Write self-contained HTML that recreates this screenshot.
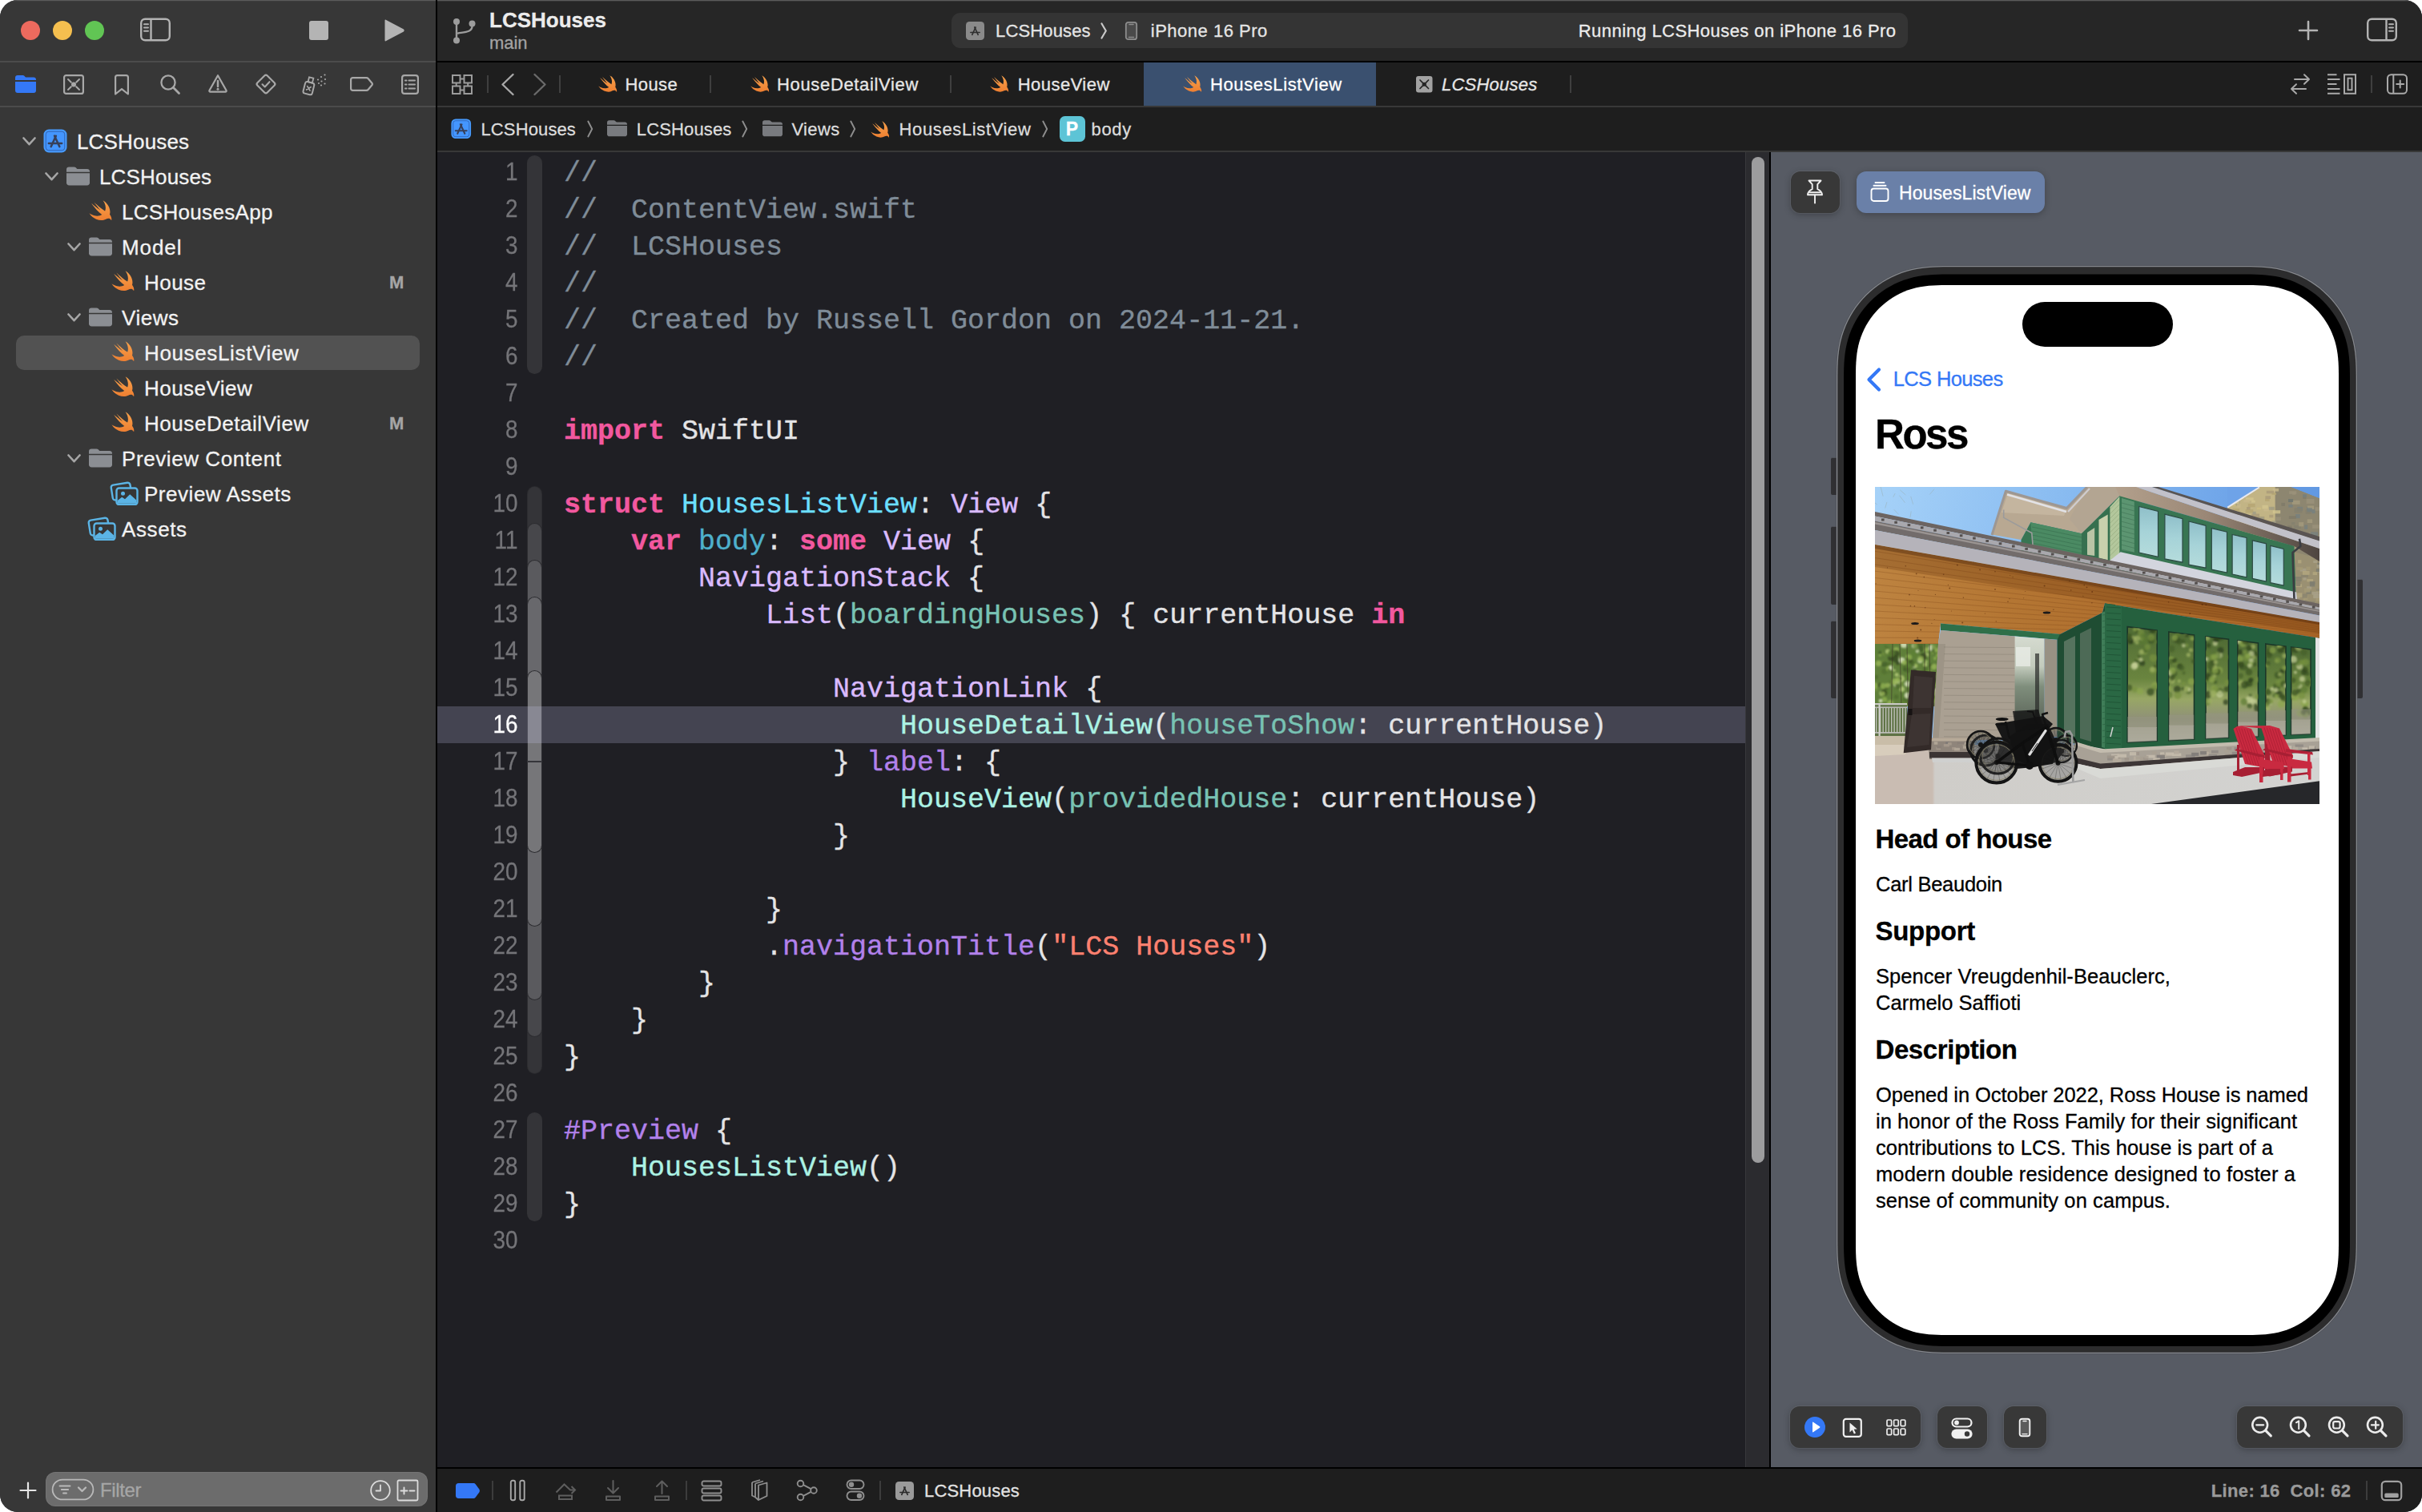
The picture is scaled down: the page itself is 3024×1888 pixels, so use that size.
<!DOCTYPE html><html><head><meta charset="utf-8"><title>LCSHouses</title><style>html,body{margin:0;padding:0;background:#fff}#win{position:absolute;left:0;top:0;width:3024px;height:1888px;overflow:hidden;border-radius:22px;background:#1f1f24}#win div,#win svg{box-sizing:border-box}#win div{-webkit-text-stroke:.3px}</style></head><body><div id="win">
<div style="position:absolute;left:0px;top:134px;width:544px;height:1754px;background:#373737;"></div>
<svg style="position:absolute;left:27.5px;top:171px;" width="17" height="11" viewBox="0 0 17 11"><path d="M1.500 1.500 L8.5 9.2 L15.5 1.500" fill="none" stroke="#a6a6a6" stroke-width="2.6" stroke-linecap="round" stroke-linejoin="round"/></svg>
<svg style="position:absolute;left:54px;top:161px;" width="30" height="30" viewBox="0 0 30 30"><rect x="0.5" y="0.5" width="29" height="29" rx="6.500" fill="#479BFF"/><rect x="3.200" y="3.200" width="23.600" height="23.600" rx="3.600" fill="#4496FF" stroke="#2c5ba8" stroke-width="0.900"/><g fill="none" stroke="#37405a" stroke-width="2.5" stroke-linecap="round"><path d="M9.67 22.11 L15.86 8.69"/><path d="M20.33 22.11 L13.97 8.52"/><path d="M6.83 17.98 L23.17 17.98"/></g></svg>
<div style="position:absolute;left:96.0px;top:159.50px;height:34px;line-height:34px;font-family:'Liberation Sans',sans-serif;font-size:26px;font-weight:400;font-style:normal;color:#f2f2f2;white-space:pre;letter-spacing:0.163px;">LCSHouses</div>
<svg style="position:absolute;left:55.5px;top:215px;" width="17" height="11" viewBox="0 0 17 11"><path d="M1.500 1.500 L8.5 9.2 L15.5 1.500" fill="none" stroke="#a6a6a6" stroke-width="2.6" stroke-linecap="round" stroke-linejoin="round"/></svg>
<svg style="position:absolute;left:83px;top:208px;" width="29" height="24" viewBox="0 0 30 24"><path fill="#8b8e93" d="M3.2 0H10c.9 0 1.5.3 2.1.9l1.2 1.2c.4.4.8.5 1.4.5h12c1.9 0 3.3 1.300 3.300 3.200V6.600H0V3.200C0 1.300 1.300 0 3.200 0Z"/><path fill="#8b8e93" d="M0 8.200H30V20.600c0 2-1.400 3.400-3.400 3.400H3.400C1.400 24 0 22.600 0 20.600Z"/></svg>
<div style="position:absolute;left:124.0px;top:203.50px;height:34px;line-height:34px;font-family:'Liberation Sans',sans-serif;font-size:26px;font-weight:400;font-style:normal;color:#f2f2f2;white-space:pre;letter-spacing:0.163px;">LCSHouses</div>
<svg style="position:absolute;left:111px;top:250px;" width="29" height="26" viewBox="2.3 3.3 18.5 16.9"><defs><linearGradient id="sg111_250" x1="0" y1="0" x2="0" y2="1"><stop offset="0" stop-color="#F9A34C"/><stop offset="1" stop-color="#EE7F31"/></linearGradient></defs><path fill="url(#sg111_250)" d="M13.543 3.41c4.114 2.47 6.545 7.162 5.549 11.131-.024.093-.05.181-.076.272l.002.001c2.062 2.538 1.5 5.258 1.236 4.745-1.072-2.086-3.066-1.568-4.088-1.043a6.803 6.803 0 0 1-.281.158l-.02.012-.002.002c-2.115 1.123-4.957 1.205-7.812-.022a12.568 12.568 0 0 1-5.64-4.838c.649.48 1.35.902 2.097 1.252 3.019 1.414 6.051 1.311 8.197-.002C9.651 12.73 7.101 9.67 5.146 7.191a10.628 10.628 0 0 1-1.005-1.384c2.34 2.142 6.038 4.83 7.365 5.576C8.69 8.408 6.208 4.743 6.324 4.86c4.436 4.47 8.528 6.996 8.528 6.996.154.085.27.154.36.213.085-.215.16-.437.224-.668.708-2.588-.09-5.548-1.893-7.992z"/></svg>
<div style="position:absolute;left:152.0px;top:247.50px;height:34px;line-height:34px;font-family:'Liberation Sans',sans-serif;font-size:26px;font-weight:400;font-style:normal;color:#f2f2f2;white-space:pre;letter-spacing:0.308px;">LCSHousesApp</div>
<svg style="position:absolute;left:83.5px;top:303px;" width="17" height="11" viewBox="0 0 17 11"><path d="M1.500 1.500 L8.5 9.2 L15.5 1.500" fill="none" stroke="#a6a6a6" stroke-width="2.6" stroke-linecap="round" stroke-linejoin="round"/></svg>
<svg style="position:absolute;left:111px;top:296px;" width="29" height="24" viewBox="0 0 30 24"><path fill="#8b8e93" d="M3.2 0H10c.9 0 1.5.3 2.1.9l1.2 1.2c.4.4.8.5 1.4.5h12c1.9 0 3.3 1.300 3.300 3.200V6.600H0V3.200C0 1.300 1.300 0 3.200 0Z"/><path fill="#8b8e93" d="M0 8.200H30V20.600c0 2-1.400 3.400-3.400 3.400H3.400C1.400 24 0 22.600 0 20.600Z"/></svg>
<div style="position:absolute;left:152.0px;top:291.50px;height:34px;line-height:34px;font-family:'Liberation Sans',sans-serif;font-size:26px;font-weight:400;font-style:normal;color:#f2f2f2;white-space:pre;letter-spacing:0.924px;">Model</div>
<svg style="position:absolute;left:139px;top:338px;" width="29" height="26" viewBox="2.3 3.3 18.5 16.9"><defs><linearGradient id="sg139_338" x1="0" y1="0" x2="0" y2="1"><stop offset="0" stop-color="#F9A34C"/><stop offset="1" stop-color="#EE7F31"/></linearGradient></defs><path fill="url(#sg139_338)" d="M13.543 3.41c4.114 2.47 6.545 7.162 5.549 11.131-.024.093-.05.181-.076.272l.002.001c2.062 2.538 1.5 5.258 1.236 4.745-1.072-2.086-3.066-1.568-4.088-1.043a6.803 6.803 0 0 1-.281.158l-.02.012-.002.002c-2.115 1.123-4.957 1.205-7.812-.022a12.568 12.568 0 0 1-5.64-4.838c.649.48 1.35.902 2.097 1.252 3.019 1.414 6.051 1.311 8.197-.002C9.651 12.73 7.101 9.67 5.146 7.191a10.628 10.628 0 0 1-1.005-1.384c2.34 2.142 6.038 4.83 7.365 5.576C8.69 8.408 6.208 4.743 6.324 4.86c4.436 4.47 8.528 6.996 8.528 6.996.154.085.27.154.36.213.085-.215.16-.437.224-.668.708-2.588-.09-5.548-1.893-7.992z"/></svg>
<div style="position:absolute;left:180.0px;top:335.50px;height:34px;line-height:34px;font-family:'Liberation Sans',sans-serif;font-size:26px;font-weight:400;font-style:normal;color:#f2f2f2;white-space:pre;letter-spacing:0.459px;">House</div>
<div style="position:absolute;left:486px;top:338.00px;height:29px;line-height:29px;font-family:'Liberation Sans',sans-serif;font-size:22px;font-weight:700;font-style:normal;color:#a5a5a5;white-space:pre;">M</div>
<svg style="position:absolute;left:83.5px;top:391px;" width="17" height="11" viewBox="0 0 17 11"><path d="M1.500 1.500 L8.5 9.2 L15.5 1.500" fill="none" stroke="#a6a6a6" stroke-width="2.6" stroke-linecap="round" stroke-linejoin="round"/></svg>
<svg style="position:absolute;left:111px;top:384px;" width="29" height="24" viewBox="0 0 30 24"><path fill="#8b8e93" d="M3.2 0H10c.9 0 1.5.3 2.1.9l1.2 1.2c.4.4.8.5 1.4.5h12c1.9 0 3.3 1.300 3.300 3.200V6.600H0V3.200C0 1.300 1.300 0 3.200 0Z"/><path fill="#8b8e93" d="M0 8.200H30V20.600c0 2-1.400 3.400-3.400 3.400H3.400C1.400 24 0 22.600 0 20.600Z"/></svg>
<div style="position:absolute;left:152.0px;top:379.50px;height:34px;line-height:34px;font-family:'Liberation Sans',sans-serif;font-size:26px;font-weight:400;font-style:normal;color:#f2f2f2;white-space:pre;letter-spacing:0.542px;">Views</div>
<div style="position:absolute;left:20px;top:418.5px;width:504px;height:43px;background:#525252;border-radius:10px"></div>
<svg style="position:absolute;left:139px;top:426px;" width="29" height="26" viewBox="2.3 3.3 18.5 16.9"><defs><linearGradient id="sg139_426" x1="0" y1="0" x2="0" y2="1"><stop offset="0" stop-color="#F9A34C"/><stop offset="1" stop-color="#EE7F31"/></linearGradient></defs><path fill="url(#sg139_426)" d="M13.543 3.41c4.114 2.47 6.545 7.162 5.549 11.131-.024.093-.05.181-.076.272l.002.001c2.062 2.538 1.5 5.258 1.236 4.745-1.072-2.086-3.066-1.568-4.088-1.043a6.803 6.803 0 0 1-.281.158l-.02.012-.002.002c-2.115 1.123-4.957 1.205-7.812-.022a12.568 12.568 0 0 1-5.64-4.838c.649.48 1.35.902 2.097 1.252 3.019 1.414 6.051 1.311 8.197-.002C9.651 12.73 7.101 9.67 5.146 7.191a10.628 10.628 0 0 1-1.005-1.384c2.34 2.142 6.038 4.83 7.365 5.576C8.69 8.408 6.208 4.743 6.324 4.86c4.436 4.47 8.528 6.996 8.528 6.996.154.085.27.154.36.213.085-.215.16-.437.224-.668.708-2.588-.09-5.548-1.893-7.992z"/></svg>
<div style="position:absolute;left:180.0px;top:423.50px;height:34px;line-height:34px;font-family:'Liberation Sans',sans-serif;font-size:26px;font-weight:400;font-style:normal;color:#f2f2f2;white-space:pre;letter-spacing:0.642px;">HousesListView</div>
<svg style="position:absolute;left:139px;top:470px;" width="29" height="26" viewBox="2.3 3.3 18.5 16.9"><defs><linearGradient id="sg139_470" x1="0" y1="0" x2="0" y2="1"><stop offset="0" stop-color="#F9A34C"/><stop offset="1" stop-color="#EE7F31"/></linearGradient></defs><path fill="url(#sg139_470)" d="M13.543 3.41c4.114 2.47 6.545 7.162 5.549 11.131-.024.093-.05.181-.076.272l.002.001c2.062 2.538 1.5 5.258 1.236 4.745-1.072-2.086-3.066-1.568-4.088-1.043a6.803 6.803 0 0 1-.281.158l-.02.012-.002.002c-2.115 1.123-4.957 1.205-7.812-.022a12.568 12.568 0 0 1-5.64-4.838c.649.48 1.35.902 2.097 1.252 3.019 1.414 6.051 1.311 8.197-.002C9.651 12.73 7.101 9.67 5.146 7.191a10.628 10.628 0 0 1-1.005-1.384c2.34 2.142 6.038 4.83 7.365 5.576C8.69 8.408 6.208 4.743 6.324 4.86c4.436 4.47 8.528 6.996 8.528 6.996.154.085.27.154.36.213.085-.215.16-.437.224-.668.708-2.588-.09-5.548-1.893-7.992z"/></svg>
<div style="position:absolute;left:180.0px;top:467.50px;height:34px;line-height:34px;font-family:'Liberation Sans',sans-serif;font-size:26px;font-weight:400;font-style:normal;color:#f2f2f2;white-space:pre;letter-spacing:0.461px;">HouseView</div>
<svg style="position:absolute;left:139px;top:514px;" width="29" height="26" viewBox="2.3 3.3 18.5 16.9"><defs><linearGradient id="sg139_514" x1="0" y1="0" x2="0" y2="1"><stop offset="0" stop-color="#F9A34C"/><stop offset="1" stop-color="#EE7F31"/></linearGradient></defs><path fill="url(#sg139_514)" d="M13.543 3.41c4.114 2.47 6.545 7.162 5.549 11.131-.024.093-.05.181-.076.272l.002.001c2.062 2.538 1.5 5.258 1.236 4.745-1.072-2.086-3.066-1.568-4.088-1.043a6.803 6.803 0 0 1-.281.158l-.02.012-.002.002c-2.115 1.123-4.957 1.205-7.812-.022a12.568 12.568 0 0 1-5.64-4.838c.649.48 1.35.902 2.097 1.252 3.019 1.414 6.051 1.311 8.197-.002C9.651 12.73 7.101 9.67 5.146 7.191a10.628 10.628 0 0 1-1.005-1.384c2.34 2.142 6.038 4.83 7.365 5.576C8.69 8.408 6.208 4.743 6.324 4.86c4.436 4.47 8.528 6.996 8.528 6.996.154.085.27.154.36.213.085-.215.16-.437.224-.668.708-2.588-.09-5.548-1.893-7.992z"/></svg>
<div style="position:absolute;left:180.0px;top:511.50px;height:34px;line-height:34px;font-family:'Liberation Sans',sans-serif;font-size:26px;font-weight:400;font-style:normal;color:#f2f2f2;white-space:pre;letter-spacing:0.546px;">HouseDetailView</div>
<div style="position:absolute;left:486px;top:514.00px;height:29px;line-height:29px;font-family:'Liberation Sans',sans-serif;font-size:22px;font-weight:700;font-style:normal;color:#a5a5a5;white-space:pre;">M</div>
<svg style="position:absolute;left:83.5px;top:567px;" width="17" height="11" viewBox="0 0 17 11"><path d="M1.500 1.500 L8.5 9.2 L15.5 1.500" fill="none" stroke="#a6a6a6" stroke-width="2.6" stroke-linecap="round" stroke-linejoin="round"/></svg>
<svg style="position:absolute;left:111px;top:560px;" width="29" height="24" viewBox="0 0 30 24"><path fill="#8b8e93" d="M3.2 0H10c.9 0 1.5.3 2.1.9l1.2 1.2c.4.4.8.5 1.4.5h12c1.9 0 3.3 1.300 3.300 3.200V6.600H0V3.200C0 1.300 1.300 0 3.200 0Z"/><path fill="#8b8e93" d="M0 8.200H30V20.600c0 2-1.400 3.400-3.400 3.400H3.400C1.400 24 0 22.600 0 20.600Z"/></svg>
<div style="position:absolute;left:152.0px;top:555.50px;height:34px;line-height:34px;font-family:'Liberation Sans',sans-serif;font-size:26px;font-weight:400;font-style:normal;color:#f2f2f2;white-space:pre;letter-spacing:0.582px;">Preview Content</div>
<svg style="position:absolute;left:137px;top:601px;" width="36" height="30" viewBox="0 0 36 30"><g transform="rotate(-9 12 12)"><rect x="2.500" y="3.500" width="24" height="19" rx="3" fill="none" stroke="#5BB4E5" stroke-width="2.400"/></g><rect x="8.500" y="8.500" width="26" height="20.500" rx="3.200" fill="#363636" stroke="#5BB4E5" stroke-width="2.400"/><circle cx="16.500" cy="15.200" r="2.500" fill="#5BB4E5"/><path d="M9.700 27.800 V24 l5.500-4.300 3.800 2.600 6.200-6 8.100 7.200 V27.800Z" fill="#5BB4E5"/></svg>
<div style="position:absolute;left:180.0px;top:599.50px;height:34px;line-height:34px;font-family:'Liberation Sans',sans-serif;font-size:26px;font-weight:400;font-style:normal;color:#f2f2f2;white-space:pre;letter-spacing:0.529px;">Preview Assets</div>
<svg style="position:absolute;left:109px;top:645px;" width="36" height="30" viewBox="0 0 36 30"><g transform="rotate(-9 12 12)"><rect x="2.500" y="3.500" width="24" height="19" rx="3" fill="none" stroke="#5BB4E5" stroke-width="2.400"/></g><rect x="8.500" y="8.500" width="26" height="20.500" rx="3.200" fill="#363636" stroke="#5BB4E5" stroke-width="2.400"/><circle cx="16.500" cy="15.200" r="2.500" fill="#5BB4E5"/><path d="M9.700 27.800 V24 l5.500-4.300 3.800 2.600 6.200-6 8.100 7.200 V27.800Z" fill="#5BB4E5"/></svg>
<div style="position:absolute;left:152.0px;top:643.50px;height:34px;line-height:34px;font-family:'Liberation Sans',sans-serif;font-size:26px;font-weight:400;font-style:normal;color:#f2f2f2;white-space:pre;letter-spacing:0.595px;">Assets</div>
<div style="position:absolute;left:0px;top:78px;width:544px;height:54px;background:#373737;"></div>
<div style="position:absolute;left:0px;top:132px;width:544px;height:2px;background:#4b4b4b;"></div>
<svg style="position:absolute;left:19px;top:94px;" width="26" height="22" viewBox="0 0 26 22"><path fill="#3478F6" d="M3 0H9.500c.8 0 1.400.3 1.900.8l1.100 1.100c.4.400.8.500 1.300.500H23c1.800 0 3 1.200 3 3V6H0V3C0 1.200 1.200 0 3 0Z"/><path fill="#3478F6" d="M0 8H26V19c0 1.800-1.200 3-3 3H3C1.200 22 0 20.800 0 19Z"/></svg>
<svg style="position:absolute;left:78px;top:91.5px;" width="28" height="27" viewBox="0 0 28 27"><rect x="2.100" y="2.100" width="23.800" height="22.800" rx="2.500" fill="none" stroke="#a8a8a8" stroke-width="2.200"/><path d="M7 7l3.800 3.800M21 7l-3.800 3.800M7 20l3.800-3.800M21 20l-3.800-3.800" stroke="#a8a8a8" stroke-width="2" stroke-linecap="round"/><circle cx="14" cy="13.500" r="3" fill="#a8a8a8"/></svg>
<svg style="position:absolute;left:142px;top:91.5px;" width="20" height="28" viewBox="0 0 20 28"><path d="M2.100 4.500Q2.100 2.100 4.500 2.100H15.500Q17.900 2.100 17.900 4.500V25.500L10 19.200 2.100 25.500Z" fill="none" stroke="#a8a8a8" stroke-width="2.200" stroke-linejoin="round"/></svg>
<svg style="position:absolute;left:198.5px;top:92px;" width="27" height="27" viewBox="0 0 27 27"><circle cx="11" cy="11" r="8.600" fill="none" stroke="#a8a8a8" stroke-width="2.300"/><path d="M17.300 17.300L24.500 24.500" stroke="#a8a8a8" stroke-width="2.800" stroke-linecap="round"/></svg>
<svg style="position:absolute;left:259px;top:91px;" width="26" height="26" viewBox="0 0 26 26"><path d="M13 3.200 L23.600 22 Q24 23.600 22.400 23.600 H3.600 Q2 23.600 2.400 22Z" fill="none" stroke="#a8a8a8" stroke-width="2.200" stroke-linejoin="round"/><path d="M13 10v7" stroke="#a8a8a8" stroke-width="2.500" stroke-linecap="round"/><circle cx="13" cy="20.300" r="1.500" fill="#a8a8a8"/></svg>
<svg style="position:absolute;left:318px;top:91px;" width="28" height="28" viewBox="0 0 28 28"><rect x="5.300" y="5.300" width="17.400" height="17.400" rx="2.500" transform="rotate(45 14 14)" fill="none" stroke="#a8a8a8" stroke-width="2.200"/><path d="M9.500 14.300l3.200 3.200 5.800-6.300" fill="none" stroke="#a8a8a8" stroke-width="2.100" stroke-linecap="round" stroke-linejoin="round"/></svg>
<svg style="position:absolute;left:377px;top:91px;" width="32" height="29" viewBox="0 0 32 29"><g transform="rotate(14 10 18)"><rect x="3" y="12" width="11.500" height="15" rx="2.500" fill="none" stroke="#a8a8a8" stroke-width="2"/><rect x="6" y="6" width="5.500" height="6" fill="none" stroke="#a8a8a8" stroke-width="1.800"/><path d="M6.500 17.500l4.500 4.500M11 17.500l-4.500 4.500" stroke="#a8a8a8" stroke-width="1.700" stroke-linecap="round"/></g><g fill="#a8a8a8"><circle cx="20" cy="8.500" r="1.100"/><circle cx="24" cy="5" r="1.100"/><circle cx="24.500" cy="10.500" r="1.100"/><circle cx="28.500" cy="2.500" r="1.100"/><circle cx="29" cy="8" r="1.100"/><circle cx="28.500" cy="13.500" r="1.100"/><circle cx="24" cy="15.500" r="1.100"/><circle cx="21" cy="13" r="1"/></g></svg>
<svg style="position:absolute;left:436px;top:95px;" width="31" height="20" viewBox="0 0 31 20"><path d="M4.500 2.100H21.500c1 0 1.700.4 2.300 1.100L28.600 9c.500.600.500 1.400 0 2l-4.800 5.800c-.600.700-1.300 1.100-2.300 1.100H4.500c-1.500 0-2.400-.900-2.400-2.400V4.500c0-1.500.900-2.400 2.400-2.400Z" fill="none" stroke="#a8a8a8" stroke-width="2.200" stroke-linejoin="round"/></svg>
<svg style="position:absolute;left:500px;top:91.5px;" width="24" height="27" viewBox="0 0 24 27"><rect x="2.100" y="2.100" width="19.800" height="22.800" rx="3" fill="none" stroke="#a8a8a8" stroke-width="2.200"/><path d="M10.500 8.500h7.500M10.500 13.500h7.500M10.500 18.500h7.500" stroke="#a8a8a8" stroke-width="2" stroke-linecap="round"/><path d="M6 8.500h1.500M6 13.500h1.500M6 18.500h1.500" stroke="#a8a8a8" stroke-width="2" stroke-linecap="round"/></svg>
<svg style="position:absolute;left:23px;top:1849px;" width="24" height="24" viewBox="0 0 24 24"><path d="M12 2.500V21.500M2.500 12H21.500" stroke="#e6e6e6" stroke-width="2.200" stroke-linecap="round"/></svg>
<div style="position:absolute;left:56.5px;top:1838px;width:477.5px;height:43px;background:#6c6c6c;border-radius:12px;box-shadow:inset 0 0 0 1px rgba(255,255,255,.06)"></div>
<svg style="position:absolute;left:64px;top:1846px;" width="54" height="28" viewBox="0 0 54 28"><rect x="1.600" y="1.600" width="50.800" height="24.800" rx="12.400" fill="none" stroke="#b9b9b9" stroke-width="1.800"/><path d="M10.500 9.500H23.500M12.800 14H21.200M15 18.500H19" stroke="#b9b9b9" stroke-width="1.900" stroke-linecap="round"/><path d="M34 11.500l4.500 4.500 4.500-4.500" fill="none" stroke="#b9b9b9" stroke-width="2.300" stroke-linecap="round" stroke-linejoin="round"/></svg>
<div style="position:absolute;left:125px;top:1844.50px;height:31px;line-height:31px;font-family:'Liberation Sans',sans-serif;font-size:24px;font-weight:400;font-style:normal;color:#a6a6a6;white-space:pre;letter-spacing:-0.391px;">Filter</div>
<svg style="position:absolute;left:461px;top:1847px;" width="28" height="28" viewBox="0 0 28 28"><circle cx="14" cy="14" r="11.800" fill="none" stroke="#dcdcdc" stroke-width="1.800"/><path d="M14 7.500V14.500H8.500" fill="none" stroke="#dcdcdc" stroke-width="1.800" stroke-linecap="round" stroke-linejoin="round"/></svg>
<svg style="position:absolute;left:495px;top:1847px;" width="28" height="28" viewBox="0 0 28 28"><rect x="1.500" y="1.500" width="25" height="25" rx="1.500" fill="none" stroke="#dcdcdc" stroke-width="1.800"/><path d="M5.500 14.500h8M9.500 10.500v8M16.500 14.500h6" stroke="#dcdcdc" stroke-width="1.900" stroke-linecap="round"/></svg>
<div style="position:absolute;left:0px;top:0px;width:544px;height:76px;background:#373737;"></div>
<div style="position:absolute;left:546px;top:0px;width:2478px;height:76px;background:#262626;"></div>
<div style="position:absolute;left:0px;top:0px;width:3024px;height:1px;background:#5c5c5c;"></div>
<div style="position:absolute;left:0px;top:1px;width:3024px;height:1px;background:#444;opacity:.5"></div>
<div style="position:absolute;left:0px;top:76px;width:544px;height:2px;background:#4b4b4b;"></div>
<div style="position:absolute;left:546px;top:76px;width:2478px;height:2px;background:#000;"></div>
<div style="position:absolute;left:26px;top:26px;width:24px;height:24px;background:#ED6A5E;border-radius:50%"></div>
<div style="position:absolute;left:66px;top:26px;width:24px;height:24px;background:#F5BF4F;border-radius:50%"></div>
<div style="position:absolute;left:106px;top:26px;width:24px;height:24px;background:#61C554;border-radius:50%"></div>
<svg style="position:absolute;left:174px;top:21px;" width="40" height="32" viewBox="0 0 40 32"><rect x="2.200" y="2.700" width="35.600" height="26.600" rx="5" fill="none" stroke="#b3b3b3" stroke-width="2.400"/><path d="M14.500 2.700V29.300" stroke="#b3b3b3" stroke-width="2.400"/><path d="M6 9.200h5M6 13.500h5M6 17.800h5" stroke="#b3b3b3" stroke-width="2" stroke-linecap="round"/></svg>
<div style="position:absolute;left:386px;top:26px;width:24px;height:24px;background:#b4b4b4;border-radius:3px"></div>
<svg style="position:absolute;left:478px;top:23px;" width="29" height="30" viewBox="0 0 29 30"><path d="M2.500 2.800 Q2.500 1 4.200 1.900 L26 13.400 Q27.600 15 26 16.600 L4.200 28.100 Q2.500 29 2.500 27.200Z" fill="#b4b4b4"/></svg>
<svg style="position:absolute;left:564px;top:21px;" width="32" height="35" viewBox="0 0 32 35"><g fill="none" stroke="#9d9d9d" stroke-width="2.400" stroke-linecap="round"><path d="M6 9V27"/><path d="M25.500 11.500 C25.500 19 17 19 8 20.500"/></g><circle cx="6" cy="6" r="4" fill="#9d9d9d"/><circle cx="6" cy="29.500" r="4" fill="#9d9d9d"/><circle cx="25.500" cy="8.500" r="4" fill="#9d9d9d"/></svg>
<div style="position:absolute;left:611px;top:7.80px;height:34px;line-height:34px;font-family:'Liberation Sans',sans-serif;font-size:26px;font-weight:700;font-style:normal;color:#ececec;white-space:pre;letter-spacing:0.009px;">LCSHouses</div>
<div style="position:absolute;left:611px;top:39.00px;height:29px;line-height:29px;font-family:'Liberation Sans',sans-serif;font-size:22px;font-weight:400;font-style:normal;color:#a3a3a3;white-space:pre;letter-spacing:-0.047px;">main</div>
<div style="position:absolute;left:1188px;top:16px;width:1194px;height:44px;background:#343434;border-radius:11px"></div>
<svg style="position:absolute;left:1206px;top:27px;" width="23" height="23" viewBox="0 0 24 24"><rect x="0" y="0" width="24" height="24" rx="4.500" fill="#8a8a8a"/><g fill="none" stroke="#2f2f2f" stroke-width="1.7" stroke-linecap="round"><path d="M8.16 17.04 L12.62 7.36"/><path d="M15.84 17.04 L11.26 7.24"/><path d="M6.11 14.059999999999999 L17.89 14.059999999999999"/></g></svg>
<div style="position:absolute;left:1243px;top:23.50px;height:29px;line-height:29px;font-family:'Liberation Sans',sans-serif;font-size:22px;font-weight:400;font-style:normal;color:#e4e4e4;white-space:pre;letter-spacing:0.151px;">LCSHouses</div>
<svg style="position:absolute;left:1374px;top:28px;" width="9" height="21" viewBox="0 0 9 21"><path d="M1.500 1.500 L6.800 10.500 L1.500 19.500" fill="none" stroke="#c9c9c9" stroke-width="2.200" stroke-linecap="round" stroke-linejoin="round"/></svg>
<svg style="position:absolute;left:1404px;top:26px;" width="17" height="25" viewBox="0 0 17 25"><rect x="1.800" y="1.800" width="13.400" height="21.400" rx="3" fill="#4a4a4a" stroke="#8d8d8d" stroke-width="1.800"/><path d="M6 4.600h5M5.500 20.400h6" stroke="#8d8d8d" stroke-width="1.500" stroke-linecap="round"/></svg>
<div style="position:absolute;left:1436.75px;top:23.50px;height:29px;line-height:29px;font-family:'Liberation Sans',sans-serif;font-size:22px;font-weight:400;font-style:normal;color:#e4e4e4;white-space:pre;letter-spacing:0.505px;">iPhone 16 Pro</div>
<div style="position:absolute;left:1970.75px;top:23.50px;height:29px;line-height:29px;font-family:'Liberation Sans',sans-serif;font-size:22px;font-weight:400;font-style:normal;color:#ececec;white-space:pre;letter-spacing:0.446px;">Running LCSHouses on iPhone 16 Pro</div>
<svg style="position:absolute;left:2869px;top:25px;" width="26" height="26" viewBox="0 0 26 26"><path d="M13 2V24M2 13H24" stroke="#b3b3b3" stroke-width="2.600" stroke-linecap="round"/></svg>
<svg style="position:absolute;left:2954px;top:21px;" width="40" height="32" viewBox="0 0 40 32"><rect x="2.200" y="2.700" width="35.600" height="26.600" rx="5" fill="none" stroke="#b3b3b3" stroke-width="2.400"/><path d="M25.500 2.700V29.300" stroke="#b3b3b3" stroke-width="2.400"/><path d="M29 9.200h5M29 13.500h5M29 17.800h5" stroke="#b3b3b3" stroke-width="2" stroke-linecap="round"/></svg>
<div style="position:absolute;left:546px;top:78px;width:2478px;height:54px;background:#1e1e1e;"></div>
<div style="position:absolute;left:546px;top:132px;width:2478px;height:2px;background:#383838;"></div>
<div style="position:absolute;left:546px;top:134px;width:2478px;height:54px;background:#1e1e1e;"></div>
<div style="position:absolute;left:546px;top:188px;width:2478px;height:2px;background:#383838;"></div>
<svg style="position:absolute;left:563px;top:91.5px;" width="28" height="27" viewBox="0 0 28 27"><g fill="none" stroke="#9b9b9b" stroke-width="2"><rect x="2" y="2" width="9.500" height="9.500"/><rect x="16.500" y="2" width="9.500" height="9.500"/><rect x="2" y="15.500" width="9.500" height="9.500"/><rect x="16.500" y="15.500" width="9.500" height="9.500"/><path d="M11.500 6.500H16.500M11.500 20.500H16.500M6.700 11.500V15.500M21.200 11.500V15.500"/></g></svg>
<div style="position:absolute;left:608px;top:94px;width:2px;height:22px;background:#3f3f3f;"></div>
<svg style="position:absolute;left:625px;top:91px;" width="18" height="29" viewBox="0 0 18 29"><path d="M15.500 2 L2.500 14.500 L15.500 27" fill="none" stroke="#a9a9a9" stroke-width="2.400" stroke-linecap="round" stroke-linejoin="round"/></svg>
<svg style="position:absolute;left:665px;top:91px;" width="18" height="29" viewBox="0 0 18 29"><path d="M2.500 2 L15.500 14.500 L2.500 27" fill="none" stroke="#6a6a6a" stroke-width="2.400" stroke-linecap="round" stroke-linejoin="round"/></svg>
<div style="position:absolute;left:698px;top:94px;width:2px;height:22px;background:#3f3f3f;"></div>
<svg style="position:absolute;left:747px;top:94px;" width="23.5" height="21.5" viewBox="2.3 3.3 18.5 16.9"><defs><linearGradient id="sg747_94" x1="0" y1="0" x2="0" y2="1"><stop offset="0" stop-color="#F9A34C"/><stop offset="1" stop-color="#EE7F31"/></linearGradient></defs><path fill="url(#sg747_94)" d="M13.543 3.41c4.114 2.47 6.545 7.162 5.549 11.131-.024.093-.05.181-.076.272l.002.001c2.062 2.538 1.5 5.258 1.236 4.745-1.072-2.086-3.066-1.568-4.088-1.043a6.803 6.803 0 0 1-.281.158l-.02.012-.002.002c-2.115 1.123-4.957 1.205-7.812-.022a12.568 12.568 0 0 1-5.64-4.838c.649.48 1.35.902 2.097 1.252 3.019 1.414 6.051 1.311 8.197-.002C9.651 12.73 7.101 9.67 5.146 7.191a10.628 10.628 0 0 1-1.005-1.384c2.34 2.142 6.038 4.83 7.365 5.576C8.69 8.408 6.208 4.743 6.324 4.86c4.436 4.47 8.528 6.996 8.528 6.996.154.085.27.154.36.213.085-.215.16-.437.224-.668.708-2.588-.09-5.548-1.893-7.992z"/></svg>
<div style="position:absolute;left:780.5px;top:91.00px;height:29px;line-height:29px;font-family:'Liberation Sans',sans-serif;font-size:22px;font-weight:400;font-style:normal;color:#e6e6e6;white-space:pre;letter-spacing:0.381px;">House</div>
<div style="position:absolute;left:886px;top:94px;width:2px;height:22px;background:#3f3f3f;"></div>
<svg style="position:absolute;left:936.5px;top:94px;" width="23.5" height="21.5" viewBox="2.3 3.3 18.5 16.9"><defs><linearGradient id="sg936.5_94" x1="0" y1="0" x2="0" y2="1"><stop offset="0" stop-color="#F9A34C"/><stop offset="1" stop-color="#EE7F31"/></linearGradient></defs><path fill="url(#sg936.5_94)" d="M13.543 3.41c4.114 2.47 6.545 7.162 5.549 11.131-.024.093-.05.181-.076.272l.002.001c2.062 2.538 1.5 5.258 1.236 4.745-1.072-2.086-3.066-1.568-4.088-1.043a6.803 6.803 0 0 1-.281.158l-.02.012-.002.002c-2.115 1.123-4.957 1.205-7.812-.022a12.568 12.568 0 0 1-5.64-4.838c.649.48 1.35.902 2.097 1.252 3.019 1.414 6.051 1.311 8.197-.002C9.651 12.73 7.101 9.67 5.146 7.191a10.628 10.628 0 0 1-1.005-1.384c2.34 2.142 6.038 4.83 7.365 5.576C8.69 8.408 6.208 4.743 6.324 4.86c4.436 4.47 8.528 6.996 8.528 6.996.154.085.27.154.36.213.085-.215.16-.437.224-.668.708-2.588-.09-5.548-1.893-7.992z"/></svg>
<div style="position:absolute;left:970px;top:91.00px;height:29px;line-height:29px;font-family:'Liberation Sans',sans-serif;font-size:22px;font-weight:400;font-style:normal;color:#e6e6e6;white-space:pre;letter-spacing:0.657px;">HouseDetailView</div>
<div style="position:absolute;left:1186px;top:94px;width:2px;height:22px;background:#3f3f3f;"></div>
<svg style="position:absolute;left:1236px;top:94px;" width="23.5" height="21.5" viewBox="2.3 3.3 18.5 16.9"><defs><linearGradient id="sg1236_94" x1="0" y1="0" x2="0" y2="1"><stop offset="0" stop-color="#F9A34C"/><stop offset="1" stop-color="#EE7F31"/></linearGradient></defs><path fill="url(#sg1236_94)" d="M13.543 3.41c4.114 2.47 6.545 7.162 5.549 11.131-.024.093-.05.181-.076.272l.002.001c2.062 2.538 1.5 5.258 1.236 4.745-1.072-2.086-3.066-1.568-4.088-1.043a6.803 6.803 0 0 1-.281.158l-.02.012-.002.002c-2.115 1.123-4.957 1.205-7.812-.022a12.568 12.568 0 0 1-5.64-4.838c.649.48 1.35.902 2.097 1.252 3.019 1.414 6.051 1.311 8.197-.002C9.651 12.73 7.101 9.67 5.146 7.191a10.628 10.628 0 0 1-1.005-1.384c2.34 2.142 6.038 4.83 7.365 5.576C8.69 8.408 6.208 4.743 6.324 4.86c4.436 4.47 8.528 6.996 8.528 6.996.154.085.27.154.36.213.085-.215.16-.437.224-.668.708-2.588-.09-5.548-1.893-7.992z"/></svg>
<div style="position:absolute;left:1270.75px;top:91.00px;height:29px;line-height:29px;font-family:'Liberation Sans',sans-serif;font-size:22px;font-weight:400;font-style:normal;color:#e6e6e6;white-space:pre;letter-spacing:0.457px;">HouseView</div>
<div style="position:absolute;left:1428px;top:78px;width:290px;height:54px;background:#3a506f;"></div>
<svg style="position:absolute;left:1477px;top:94px;" width="23.5" height="21.5" viewBox="2.3 3.3 18.5 16.9"><defs><linearGradient id="sg1477_94" x1="0" y1="0" x2="0" y2="1"><stop offset="0" stop-color="#F9A34C"/><stop offset="1" stop-color="#EE7F31"/></linearGradient></defs><path fill="url(#sg1477_94)" d="M13.543 3.41c4.114 2.47 6.545 7.162 5.549 11.131-.024.093-.05.181-.076.272l.002.001c2.062 2.538 1.5 5.258 1.236 4.745-1.072-2.086-3.066-1.568-4.088-1.043a6.803 6.803 0 0 1-.281.158l-.02.012-.002.002c-2.115 1.123-4.957 1.205-7.812-.022a12.568 12.568 0 0 1-5.64-4.838c.649.48 1.35.902 2.097 1.252 3.019 1.414 6.051 1.311 8.197-.002C9.651 12.73 7.101 9.67 5.146 7.191a10.628 10.628 0 0 1-1.005-1.384c2.34 2.142 6.038 4.83 7.365 5.576C8.69 8.408 6.208 4.743 6.324 4.86c4.436 4.47 8.528 6.996 8.528 6.996.154.085.27.154.36.213.085-.215.16-.437.224-.668.708-2.588-.09-5.548-1.893-7.992z"/></svg>
<div style="position:absolute;left:1511px;top:91.00px;height:29px;line-height:29px;font-family:'Liberation Sans',sans-serif;font-size:22px;font-weight:400;font-style:normal;color:#ffffff;white-space:pre;letter-spacing:0.616px;">HousesListView</div>
<svg style="position:absolute;left:1768px;top:95px;" width="20.5" height="20.5" viewBox="0 0 20.5 20.5"><rect x="0" y="0" width="20.500" height="20.500" rx="3" fill="#a2a2a2"/><path d="M5 5l3.300 3.300M15.500 5l-3.300 3.300M5 15.500l3.300-3.300M15.500 15.500l-3.300-3.300" stroke="#252525" stroke-width="1.700" stroke-linecap="round"/><circle cx="10.250" cy="10.250" r="2.600" fill="#252525"/></svg>
<div style="position:absolute;left:1800px;top:91.00px;height:29px;line-height:29px;font-family:'Liberation Sans',sans-serif;font-size:22px;font-weight:400;font-style:italic;color:#e6e6e6;white-space:pre;letter-spacing:0.234px;">LCSHouses</div>
<div style="position:absolute;left:1960px;top:94px;width:2px;height:22px;background:#3f3f3f;"></div>
<svg style="position:absolute;left:2859px;top:91px;" width="26" height="28" viewBox="0 0 26 28"><g fill="none" stroke="#a9a9a9" stroke-width="2" stroke-linecap="round" stroke-linejoin="round"><path d="M6 8H24M18 2.200L24 8 18 13.800"/><path d="M20 20H2M8 14.200L2 20 8 25.800"/></g></svg>
<svg style="position:absolute;left:2905px;top:91px;" width="38" height="28" viewBox="0 0 38 28"><path d="M1 2.200H12.500M1 8.100H16.500M1 14H12.500M1 19.900H16.500M1 25.800H16.500" stroke="#a9a9a9" stroke-width="2"/><rect x="22" y="2.200" width="14" height="23.600" fill="none" stroke="#a9a9a9" stroke-width="2"/><rect x="26.500" y="6.700" width="5" height="14.600" fill="none" stroke="#a9a9a9" stroke-width="2"/></svg>
<div style="position:absolute;left:2960px;top:94px;width:2px;height:22px;background:#3f3f3f;"></div>
<svg style="position:absolute;left:2979px;top:91px;" width="28" height="28" viewBox="0 0 28 28"><rect x="2" y="2.200" width="24" height="23.600" rx="4.500" fill="none" stroke="#a9a9a9" stroke-width="2"/><path d="M9.300 2.200V25.800" stroke="#a9a9a9" stroke-width="2"/><path d="M17.700 9.500V18.500M13.200 14H22.200" stroke="#a9a9a9" stroke-width="2" stroke-linecap="round"/></svg>
<svg style="position:absolute;left:563px;top:147.5px;" width="25.5" height="25.5" viewBox="0 0 30 30"><rect x="0.5" y="0.5" width="29" height="29" rx="6.500" fill="#479BFF"/><rect x="3.200" y="3.200" width="23.600" height="23.600" rx="3.600" fill="#4496FF" stroke="#2c5ba8" stroke-width="0.900"/><g fill="none" stroke="#37405a" stroke-width="2.5" stroke-linecap="round"><path d="M9.67 22.11 L15.86 8.69"/><path d="M20.33 22.11 L13.97 8.52"/><path d="M6.83 17.98 L23.17 17.98"/></g></svg>
<div style="position:absolute;left:600.5px;top:147.00px;height:29px;line-height:29px;font-family:'Liberation Sans',sans-serif;font-size:22px;font-weight:400;font-style:normal;color:#dcdcdc;white-space:pre;letter-spacing:0.123px;">LCSHouses</div>
<svg style="position:absolute;left:732.5px;top:150px;" width="8" height="22" viewBox="0 0 8 22"><path d="M1.300 1.500 L6.200 11 L1.300 20.500" fill="none" stroke="#8e8e8e" stroke-width="1.900" stroke-linecap="round" stroke-linejoin="round"/></svg>
<svg style="position:absolute;left:757.75px;top:150px;" width="25" height="20.5" viewBox="0 0 30 24"><path fill="#797b7f" d="M3.2 0H10c.9 0 1.5.3 2.1.9l1.2 1.2c.4.4.8.5 1.4.5h12c1.9 0 3.3 1.300 3.300 3.200V6.600H0V3.200C0 1.300 1.300 0 3.200 0Z"/><path fill="#797b7f" d="M0 8.200H30V20.600c0 2-1.400 3.400-3.400 3.400H3.400C1.400 24 0 22.600 0 20.600Z"/></svg>
<div style="position:absolute;left:794.75px;top:147.00px;height:29px;line-height:29px;font-family:'Liberation Sans',sans-serif;font-size:22px;font-weight:400;font-style:normal;color:#dcdcdc;white-space:pre;letter-spacing:0.151px;">LCSHouses</div>
<svg style="position:absolute;left:926px;top:150px;" width="8" height="22" viewBox="0 0 8 22"><path d="M1.300 1.500 L6.200 11 L1.300 20.500" fill="none" stroke="#8e8e8e" stroke-width="1.900" stroke-linecap="round" stroke-linejoin="round"/></svg>
<svg style="position:absolute;left:951.5px;top:150px;" width="25" height="20.5" viewBox="0 0 30 24"><path fill="#797b7f" d="M3.2 0H10c.9 0 1.5.3 2.1.9l1.2 1.2c.4.4.8.5 1.4.5h12c1.9 0 3.3 1.300 3.300 3.200V6.600H0V3.200C0 1.300 1.300 0 3.200 0Z"/><path fill="#797b7f" d="M0 8.200H30V20.600c0 2-1.400 3.400-3.400 3.400H3.400C1.400 24 0 22.600 0 20.600Z"/></svg>
<div style="position:absolute;left:988.5px;top:147.00px;height:29px;line-height:29px;font-family:'Liberation Sans',sans-serif;font-size:22px;font-weight:400;font-style:normal;color:#dcdcdc;white-space:pre;letter-spacing:0.341px;">Views</div>
<svg style="position:absolute;left:1060.5px;top:150px;" width="8" height="22" viewBox="0 0 8 22"><path d="M1.300 1.500 L6.200 11 L1.300 20.500" fill="none" stroke="#8e8e8e" stroke-width="1.900" stroke-linecap="round" stroke-linejoin="round"/></svg>
<svg style="position:absolute;left:1086.5px;top:150.5px;" width="23.5" height="21.5" viewBox="2.3 3.3 18.5 16.9"><defs><linearGradient id="sg1086.5_150.5" x1="0" y1="0" x2="0" y2="1"><stop offset="0" stop-color="#F9A34C"/><stop offset="1" stop-color="#EE7F31"/></linearGradient></defs><path fill="url(#sg1086.5_150.5)" d="M13.543 3.41c4.114 2.47 6.545 7.162 5.549 11.131-.024.093-.05.181-.076.272l.002.001c2.062 2.538 1.5 5.258 1.236 4.745-1.072-2.086-3.066-1.568-4.088-1.043a6.803 6.803 0 0 1-.281.158l-.02.012-.002.002c-2.115 1.123-4.957 1.205-7.812-.022a12.568 12.568 0 0 1-5.64-4.838c.649.48 1.35.902 2.097 1.252 3.019 1.414 6.051 1.311 8.197-.002C9.651 12.73 7.101 9.67 5.146 7.191a10.628 10.628 0 0 1-1.005-1.384c2.34 2.142 6.038 4.83 7.365 5.576C8.69 8.408 6.208 4.743 6.324 4.86c4.436 4.47 8.528 6.996 8.528 6.996.154.085.27.154.36.213.085-.215.16-.437.224-.668.708-2.588-.09-5.548-1.893-7.992z"/></svg>
<div style="position:absolute;left:1122.5px;top:147.00px;height:29px;line-height:29px;font-family:'Liberation Sans',sans-serif;font-size:22px;font-weight:400;font-style:normal;color:#dcdcdc;white-space:pre;letter-spacing:0.634px;">HousesListView</div>
<svg style="position:absolute;left:1300.5px;top:150px;" width="8" height="22" viewBox="0 0 8 22"><path d="M1.300 1.500 L6.200 11 L1.300 20.500" fill="none" stroke="#8e8e8e" stroke-width="1.900" stroke-linecap="round" stroke-linejoin="round"/></svg>
<div style="position:absolute;left:1322.5px;top:144.5px;width:32px;height:32px;background:#5dc4d6;border-radius:6.500px"></div>
<div style="position:absolute;left:1330.7px;top:146.00px;height:30px;line-height:30px;font-family:'Liberation Sans',sans-serif;font-size:23px;font-weight:700;font-style:normal;color:#fff;white-space:pre;">P</div>
<div style="position:absolute;left:1362.5px;top:147.00px;height:29px;line-height:29px;font-family:'Liberation Sans',sans-serif;font-size:22px;font-weight:400;font-style:normal;color:#dcdcdc;white-space:pre;letter-spacing:0.695px;">body</div>
<div style="position:absolute;left:546px;top:190px;width:1633px;height:1642px;background:#1f1f24;"></div>
<div style="position:absolute;left:659px;top:194.5px;width:17px;height:271.0px;background:#343438;border-radius:9px;box-shadow:0 0 0 1px #343438"></div>
<div style="position:absolute;left:659px;top:607.5px;width:17px;height:732.0px;background:#343438;border-radius:9px;box-shadow:0 0 0 1px #2c2c30"></div>
<div style="position:absolute;left:659px;top:653.5px;width:17px;height:640.0px;background:#47474b;border-radius:9px;box-shadow:0 0 0 1px #2c2c30"></div>
<div style="position:absolute;left:659px;top:699.5px;width:17px;height:548.0px;background:#5a5a5e;border-radius:9px;box-shadow:0 0 0 1px #2c2c30"></div>
<div style="position:absolute;left:659px;top:745.5px;width:17px;height:410.0px;background:#68686c;border-radius:9px;box-shadow:0 0 0 1px #2c2c30"></div>
<div style="position:absolute;left:659px;top:837.5px;width:17px;height:226.0px;background:#767679;border-radius:9px;box-shadow:0 0 0 1px #2c2c30"></div>
<div style="position:absolute;left:658px;top:950px;width:19px;height:2px;background:#35353a;"></div>
<div style="position:absolute;left:659px;top:1389.5px;width:17px;height:134.0px;background:#343438;border-radius:9px;box-shadow:0 0 0 1px #343438"></div>
<div style="position:absolute;left:546px;top:882px;width:1633px;height:46px;background:rgba(199,199,240,.22);"></div>
<div style="position:absolute;left:546px;width:100.5px;top:194.2px;height:40px;line-height:40px;text-align:right;font-family:'Liberation Sans',sans-serif;font-size:32px;color:#747478;transform:scaleX(.87);transform-origin:100% 50%;white-space:pre">1</div>
<div style="position:absolute;left:704px;top:194.1px;height:46px;line-height:46px;font-family:'Liberation Mono',monospace;font-size:35px;white-space:pre;-webkit-text-stroke:.35px"><span style="color:#7F8C98">//</span></div>
<div style="position:absolute;left:546px;width:100.5px;top:240.2px;height:40px;line-height:40px;text-align:right;font-family:'Liberation Sans',sans-serif;font-size:32px;color:#747478;transform:scaleX(.87);transform-origin:100% 50%;white-space:pre">2</div>
<div style="position:absolute;left:704px;top:240.1px;height:46px;line-height:46px;font-family:'Liberation Mono',monospace;font-size:35px;white-space:pre;-webkit-text-stroke:.35px"><span style="color:#7F8C98">//  ContentView.swift</span></div>
<div style="position:absolute;left:546px;width:100.5px;top:286.2px;height:40px;line-height:40px;text-align:right;font-family:'Liberation Sans',sans-serif;font-size:32px;color:#747478;transform:scaleX(.87);transform-origin:100% 50%;white-space:pre">3</div>
<div style="position:absolute;left:704px;top:286.1px;height:46px;line-height:46px;font-family:'Liberation Mono',monospace;font-size:35px;white-space:pre;-webkit-text-stroke:.35px"><span style="color:#7F8C98">//  LCSHouses</span></div>
<div style="position:absolute;left:546px;width:100.5px;top:332.2px;height:40px;line-height:40px;text-align:right;font-family:'Liberation Sans',sans-serif;font-size:32px;color:#747478;transform:scaleX(.87);transform-origin:100% 50%;white-space:pre">4</div>
<div style="position:absolute;left:704px;top:332.1px;height:46px;line-height:46px;font-family:'Liberation Mono',monospace;font-size:35px;white-space:pre;-webkit-text-stroke:.35px"><span style="color:#7F8C98">//</span></div>
<div style="position:absolute;left:546px;width:100.5px;top:378.2px;height:40px;line-height:40px;text-align:right;font-family:'Liberation Sans',sans-serif;font-size:32px;color:#747478;transform:scaleX(.87);transform-origin:100% 50%;white-space:pre">5</div>
<div style="position:absolute;left:704px;top:378.1px;height:46px;line-height:46px;font-family:'Liberation Mono',monospace;font-size:35px;white-space:pre;-webkit-text-stroke:.35px"><span style="color:#7F8C98">//  Created by Russell Gordon on 2024-11-21.</span></div>
<div style="position:absolute;left:546px;width:100.5px;top:424.2px;height:40px;line-height:40px;text-align:right;font-family:'Liberation Sans',sans-serif;font-size:32px;color:#747478;transform:scaleX(.87);transform-origin:100% 50%;white-space:pre">6</div>
<div style="position:absolute;left:704px;top:424.1px;height:46px;line-height:46px;font-family:'Liberation Mono',monospace;font-size:35px;white-space:pre;-webkit-text-stroke:.35px"><span style="color:#7F8C98">//</span></div>
<div style="position:absolute;left:546px;width:100.5px;top:470.2px;height:40px;line-height:40px;text-align:right;font-family:'Liberation Sans',sans-serif;font-size:32px;color:#747478;transform:scaleX(.87);transform-origin:100% 50%;white-space:pre">7</div>
<div style="position:absolute;left:546px;width:100.5px;top:516.2px;height:40px;line-height:40px;text-align:right;font-family:'Liberation Sans',sans-serif;font-size:32px;color:#747478;transform:scaleX(.87);transform-origin:100% 50%;white-space:pre">8</div>
<div style="position:absolute;left:704px;top:516.1px;height:46px;line-height:46px;font-family:'Liberation Mono',monospace;font-size:35px;white-space:pre;-webkit-text-stroke:.35px"><span style="color:#F2589F;font-weight:700">import</span><span style="color:#e4e4e6"> SwiftUI</span></div>
<div style="position:absolute;left:546px;width:100.5px;top:562.2px;height:40px;line-height:40px;text-align:right;font-family:'Liberation Sans',sans-serif;font-size:32px;color:#747478;transform:scaleX(.87);transform-origin:100% 50%;white-space:pre">9</div>
<div style="position:absolute;left:546px;width:100.5px;top:608.2px;height:40px;line-height:40px;text-align:right;font-family:'Liberation Sans',sans-serif;font-size:32px;color:#747478;transform:scaleX(.87);transform-origin:100% 50%;white-space:pre">10</div>
<div style="position:absolute;left:704px;top:608.1px;height:46px;line-height:46px;font-family:'Liberation Mono',monospace;font-size:35px;white-space:pre;-webkit-text-stroke:.35px"><span style="color:#F2589F;font-weight:700">struct</span><span style="color:#e4e4e6"> </span><span style="color:#6BDFFF">HousesListView</span><span style="color:#e4e4e6">: </span><span style="color:#DABAFF">View</span><span style="color:#e4e4e6"> {</span></div>
<div style="position:absolute;left:546px;width:100.5px;top:654.2px;height:40px;line-height:40px;text-align:right;font-family:'Liberation Sans',sans-serif;font-size:32px;color:#747478;transform:scaleX(.87);transform-origin:100% 50%;white-space:pre">11</div>
<div style="position:absolute;left:704px;top:654.1px;height:46px;line-height:46px;font-family:'Liberation Mono',monospace;font-size:35px;white-space:pre;-webkit-text-stroke:.35px"><span style="color:#e4e4e6">    </span><span style="color:#F2589F;font-weight:700">var</span><span style="color:#e4e4e6"> </span><span style="color:#4EB0CC">body</span><span style="color:#e4e4e6">: </span><span style="color:#F2589F;font-weight:700">some</span><span style="color:#e4e4e6"> </span><span style="color:#DABAFF">View</span><span style="color:#e4e4e6"> {</span></div>
<div style="position:absolute;left:546px;width:100.5px;top:700.2px;height:40px;line-height:40px;text-align:right;font-family:'Liberation Sans',sans-serif;font-size:32px;color:#747478;transform:scaleX(.87);transform-origin:100% 50%;white-space:pre">12</div>
<div style="position:absolute;left:704px;top:700.1px;height:46px;line-height:46px;font-family:'Liberation Mono',monospace;font-size:35px;white-space:pre;-webkit-text-stroke:.35px"><span style="color:#e4e4e6">        </span><span style="color:#DABAFF">NavigationStack</span><span style="color:#e4e4e6"> {</span></div>
<div style="position:absolute;left:546px;width:100.5px;top:746.2px;height:40px;line-height:40px;text-align:right;font-family:'Liberation Sans',sans-serif;font-size:32px;color:#747478;transform:scaleX(.87);transform-origin:100% 50%;white-space:pre">13</div>
<div style="position:absolute;left:704px;top:746.1px;height:46px;line-height:46px;font-family:'Liberation Mono',monospace;font-size:35px;white-space:pre;-webkit-text-stroke:.35px"><span style="color:#e4e4e6">            </span><span style="color:#DABAFF">List</span><span style="color:#e4e4e6">(</span><span style="color:#78C2B3">boardingHouses</span><span style="color:#e4e4e6">) { currentHouse </span><span style="color:#F2589F;font-weight:700">in</span></div>
<div style="position:absolute;left:546px;width:100.5px;top:792.2px;height:40px;line-height:40px;text-align:right;font-family:'Liberation Sans',sans-serif;font-size:32px;color:#747478;transform:scaleX(.87);transform-origin:100% 50%;white-space:pre">14</div>
<div style="position:absolute;left:546px;width:100.5px;top:838.2px;height:40px;line-height:40px;text-align:right;font-family:'Liberation Sans',sans-serif;font-size:32px;color:#747478;transform:scaleX(.87);transform-origin:100% 50%;white-space:pre">15</div>
<div style="position:absolute;left:704px;top:838.1px;height:46px;line-height:46px;font-family:'Liberation Mono',monospace;font-size:35px;white-space:pre;-webkit-text-stroke:.35px"><span style="color:#e4e4e6">                </span><span style="color:#DABAFF">NavigationLink</span><span style="color:#e4e4e6"> {</span></div>
<div style="position:absolute;left:546px;width:100.5px;top:884.2px;height:40px;line-height:40px;text-align:right;font-family:'Liberation Sans',sans-serif;font-size:32px;color:#ffffff;transform:scaleX(.87);transform-origin:100% 50%;white-space:pre">16</div>
<div style="position:absolute;left:704px;top:884.1px;height:46px;line-height:46px;font-family:'Liberation Mono',monospace;font-size:35px;white-space:pre;-webkit-text-stroke:.35px"><span style="color:#e4e4e6">                    </span><span style="color:#ACF2E4">HouseDetailView</span><span style="color:#e4e4e6">(</span><span style="color:#78C2B3">houseToShow</span><span style="color:#e4e4e6">: currentHouse)</span></div>
<div style="position:absolute;left:546px;width:100.5px;top:930.2px;height:40px;line-height:40px;text-align:right;font-family:'Liberation Sans',sans-serif;font-size:32px;color:#747478;transform:scaleX(.87);transform-origin:100% 50%;white-space:pre">17</div>
<div style="position:absolute;left:704px;top:930.1px;height:46px;line-height:46px;font-family:'Liberation Mono',monospace;font-size:35px;white-space:pre;-webkit-text-stroke:.35px"><span style="color:#e4e4e6">                } </span><span style="color:#B281EB">label</span><span style="color:#e4e4e6">: {</span></div>
<div style="position:absolute;left:546px;width:100.5px;top:976.2px;height:40px;line-height:40px;text-align:right;font-family:'Liberation Sans',sans-serif;font-size:32px;color:#747478;transform:scaleX(.87);transform-origin:100% 50%;white-space:pre">18</div>
<div style="position:absolute;left:704px;top:976.1px;height:46px;line-height:46px;font-family:'Liberation Mono',monospace;font-size:35px;white-space:pre;-webkit-text-stroke:.35px"><span style="color:#e4e4e6">                    </span><span style="color:#ACF2E4">HouseView</span><span style="color:#e4e4e6">(</span><span style="color:#78C2B3">providedHouse</span><span style="color:#e4e4e6">: currentHouse)</span></div>
<div style="position:absolute;left:546px;width:100.5px;top:1022.2px;height:40px;line-height:40px;text-align:right;font-family:'Liberation Sans',sans-serif;font-size:32px;color:#747478;transform:scaleX(.87);transform-origin:100% 50%;white-space:pre">19</div>
<div style="position:absolute;left:704px;top:1022.1px;height:46px;line-height:46px;font-family:'Liberation Mono',monospace;font-size:35px;white-space:pre;-webkit-text-stroke:.35px"><span style="color:#e4e4e6">                }</span></div>
<div style="position:absolute;left:546px;width:100.5px;top:1068.2px;height:40px;line-height:40px;text-align:right;font-family:'Liberation Sans',sans-serif;font-size:32px;color:#747478;transform:scaleX(.87);transform-origin:100% 50%;white-space:pre">20</div>
<div style="position:absolute;left:546px;width:100.5px;top:1114.2px;height:40px;line-height:40px;text-align:right;font-family:'Liberation Sans',sans-serif;font-size:32px;color:#747478;transform:scaleX(.87);transform-origin:100% 50%;white-space:pre">21</div>
<div style="position:absolute;left:704px;top:1114.1px;height:46px;line-height:46px;font-family:'Liberation Mono',monospace;font-size:35px;white-space:pre;-webkit-text-stroke:.35px"><span style="color:#e4e4e6">            }</span></div>
<div style="position:absolute;left:546px;width:100.5px;top:1160.2px;height:40px;line-height:40px;text-align:right;font-family:'Liberation Sans',sans-serif;font-size:32px;color:#747478;transform:scaleX(.87);transform-origin:100% 50%;white-space:pre">22</div>
<div style="position:absolute;left:704px;top:1160.1px;height:46px;line-height:46px;font-family:'Liberation Mono',monospace;font-size:35px;white-space:pre;-webkit-text-stroke:.35px"><span style="color:#e4e4e6">            .</span><span style="color:#B281EB">navigationTitle</span><span style="color:#e4e4e6">(</span><span style="color:#FF8170">"LCS Houses"</span><span style="color:#e4e4e6">)</span></div>
<div style="position:absolute;left:546px;width:100.5px;top:1206.2px;height:40px;line-height:40px;text-align:right;font-family:'Liberation Sans',sans-serif;font-size:32px;color:#747478;transform:scaleX(.87);transform-origin:100% 50%;white-space:pre">23</div>
<div style="position:absolute;left:704px;top:1206.1px;height:46px;line-height:46px;font-family:'Liberation Mono',monospace;font-size:35px;white-space:pre;-webkit-text-stroke:.35px"><span style="color:#e4e4e6">        }</span></div>
<div style="position:absolute;left:546px;width:100.5px;top:1252.2px;height:40px;line-height:40px;text-align:right;font-family:'Liberation Sans',sans-serif;font-size:32px;color:#747478;transform:scaleX(.87);transform-origin:100% 50%;white-space:pre">24</div>
<div style="position:absolute;left:704px;top:1252.1px;height:46px;line-height:46px;font-family:'Liberation Mono',monospace;font-size:35px;white-space:pre;-webkit-text-stroke:.35px"><span style="color:#e4e4e6">    }</span></div>
<div style="position:absolute;left:546px;width:100.5px;top:1298.2px;height:40px;line-height:40px;text-align:right;font-family:'Liberation Sans',sans-serif;font-size:32px;color:#747478;transform:scaleX(.87);transform-origin:100% 50%;white-space:pre">25</div>
<div style="position:absolute;left:704px;top:1298.1px;height:46px;line-height:46px;font-family:'Liberation Mono',monospace;font-size:35px;white-space:pre;-webkit-text-stroke:.35px"><span style="color:#e4e4e6">}</span></div>
<div style="position:absolute;left:546px;width:100.5px;top:1344.2px;height:40px;line-height:40px;text-align:right;font-family:'Liberation Sans',sans-serif;font-size:32px;color:#747478;transform:scaleX(.87);transform-origin:100% 50%;white-space:pre">26</div>
<div style="position:absolute;left:546px;width:100.5px;top:1390.2px;height:40px;line-height:40px;text-align:right;font-family:'Liberation Sans',sans-serif;font-size:32px;color:#747478;transform:scaleX(.87);transform-origin:100% 50%;white-space:pre">27</div>
<div style="position:absolute;left:704px;top:1390.1px;height:46px;line-height:46px;font-family:'Liberation Mono',monospace;font-size:35px;white-space:pre;-webkit-text-stroke:.35px"><span style="color:#B281EB">#Preview</span><span style="color:#e4e4e6"> {</span></div>
<div style="position:absolute;left:546px;width:100.5px;top:1436.2px;height:40px;line-height:40px;text-align:right;font-family:'Liberation Sans',sans-serif;font-size:32px;color:#747478;transform:scaleX(.87);transform-origin:100% 50%;white-space:pre">28</div>
<div style="position:absolute;left:704px;top:1436.1px;height:46px;line-height:46px;font-family:'Liberation Mono',monospace;font-size:35px;white-space:pre;-webkit-text-stroke:.35px"><span style="color:#e4e4e6">    </span><span style="color:#ACF2E4">HousesListView</span><span style="color:#e4e4e6">()</span></div>
<div style="position:absolute;left:546px;width:100.5px;top:1482.2px;height:40px;line-height:40px;text-align:right;font-family:'Liberation Sans',sans-serif;font-size:32px;color:#747478;transform:scaleX(.87);transform-origin:100% 50%;white-space:pre">29</div>
<div style="position:absolute;left:704px;top:1482.1px;height:46px;line-height:46px;font-family:'Liberation Mono',monospace;font-size:35px;white-space:pre;-webkit-text-stroke:.35px"><span style="color:#e4e4e6">}</span></div>
<div style="position:absolute;left:546px;width:100.5px;top:1528.2px;height:40px;line-height:40px;text-align:right;font-family:'Liberation Sans',sans-serif;font-size:32px;color:#747478;transform:scaleX(.87);transform-origin:100% 50%;white-space:pre">30</div>
<div style="position:absolute;left:2179px;top:190px;width:30px;height:1642px;background:#2b2b2f;border-left:1px solid #38383c"></div>
<div style="position:absolute;left:2187px;top:196px;width:16px;height:1256px;background:#9c9c9e;border-radius:8px"></div>
<div style="position:absolute;left:2209px;top:190px;width:2px;height:1642px;background:#000;"></div>
<div style="position:absolute;left:2211px;top:190px;width:813px;height:1642px;background:#575b64;"></div>
<div style="position:absolute;left:2236px;top:214px;width:61px;height:52px;background:#383838;border-radius:12px;box-shadow:0 0 0 1px rgba(255,255,255,.07),0 2px 8px rgba(0,0,0,.28)"></div>
<svg style="position:absolute;left:2254px;top:223px;" width="24" height="34" viewBox="0 0 24 34"><g fill="none" stroke="#f0f0f0" stroke-width="1.900" stroke-linejoin="round" stroke-linecap="round"><path d="M4.500 2.500H19.500L15.300 7.200V13.200C18.600 14.600 20.600 16.800 21 20.300H3C3.400 16.800 5.400 14.600 8.700 13.200V7.200Z"/><path d="M5.500 17.200H18.500"/><path d="M12 20.500V30.500"/></g></svg>
<div style="position:absolute;left:2318px;top:214px;width:235px;height:52px;background:#6a80a8;border-radius:12px;box-shadow:0 2px 8px rgba(0,0,0,.25)"></div>
<svg style="position:absolute;left:2334px;top:226px;" width="26" height="28" viewBox="0 0 26 28"><g fill="none" stroke="#fff" stroke-width="1.900" stroke-linecap="round"><path d="M7.500 2H18.500M5.500 5.800H20.500"/><rect x="2.500" y="9.500" width="21" height="15.500" rx="3"/></g></svg>
<div style="position:absolute;left:2371px;top:225.50px;height:30px;line-height:30px;font-family:'Liberation Sans',sans-serif;font-size:23px;font-weight:400;font-style:normal;color:#ffffff;white-space:pre;letter-spacing:0.092px;">HousesListView</div>
<div style="position:absolute;left:2286px;top:570.5px;width:9px;height:47.0px;background:#303033;border-radius:2px 0 0 2px;border-top:1px solid #505258"></div>
<div style="position:absolute;left:2286px;top:656.5px;width:9px;height:98.0px;background:#303033;border-radius:2px 0 0 2px;border-top:1px solid #505258"></div>
<div style="position:absolute;left:2286px;top:774.5px;width:9px;height:97.5px;background:#303033;border-radius:2px 0 0 2px;border-top:1px solid #505258"></div>
<div style="position:absolute;left:2941px;top:723px;width:9px;height:149px;background:#303033;border-radius:0 2px 2px 0;border-top:1px solid #505258"></div>
<svg style="position:absolute;left:0;top:0" width="3024" height="1888" viewBox="0 0 3024 1888"><path d="M2796.42 331.50 L2803.10 331.51 L2809.79 331.57 L2816.47 331.73 L2823.15 332.04 L2829.82 332.54 L2836.47 333.28 L2843.07 334.31 L2849.62 335.68 L2856.08 337.40 L2862.43 339.48 L2868.66 341.91 L2874.75 344.68 L2880.67 347.78 L2886.42 351.20 L2891.97 354.93 L2897.30 358.97 L2902.40 363.29 L2907.25 367.89 L2911.84 372.75 L2916.16 377.86 L2920.19 383.19 L2923.92 388.75 L2927.33 394.49 L2930.42 400.42 L2933.18 406.51 L2935.60 412.75 L2937.67 419.10 L2939.39 425.57 L2940.75 432.11 L2941.77 438.72 L2942.51 445.37 L2943.00 452.04 L2943.29 458.72 L2943.44 465.40 L2943.50 472.09 L2943.50 478.77 L2943.50 1543.42 L2943.49 1550.10 L2943.43 1556.79 L2943.27 1563.47 L2942.96 1570.15 L2942.46 1576.82 L2941.72 1583.47 L2940.69 1590.07 L2939.32 1596.62 L2937.60 1603.08 L2935.52 1609.43 L2933.09 1615.66 L2930.32 1621.75 L2927.22 1627.67 L2923.80 1633.42 L2920.07 1638.97 L2916.03 1644.30 L2911.71 1649.40 L2907.11 1654.25 L2902.25 1658.84 L2897.14 1663.16 L2891.81 1667.19 L2886.25 1670.92 L2880.51 1674.33 L2874.58 1677.42 L2868.49 1680.18 L2862.25 1682.60 L2855.90 1684.67 L2849.43 1686.39 L2842.89 1687.75 L2836.28 1688.77 L2829.63 1689.51 L2822.96 1690.00 L2816.28 1690.29 L2809.60 1690.44 L2802.91 1690.50 L2796.23 1690.50 L2439.58 1690.50 L2432.90 1690.49 L2426.21 1690.43 L2419.53 1690.27 L2412.85 1689.96 L2406.18 1689.46 L2399.53 1688.72 L2392.93 1687.69 L2386.38 1686.32 L2379.92 1684.60 L2373.57 1682.52 L2367.34 1680.09 L2361.25 1677.32 L2355.33 1674.22 L2349.58 1670.80 L2344.03 1667.07 L2338.70 1663.03 L2333.60 1658.71 L2328.75 1654.11 L2324.16 1649.25 L2319.84 1644.14 L2315.81 1638.81 L2312.08 1633.25 L2308.67 1627.51 L2305.58 1621.58 L2302.82 1615.49 L2300.40 1609.25 L2298.33 1602.90 L2296.61 1596.43 L2295.25 1589.89 L2294.23 1583.28 L2293.49 1576.63 L2293.00 1569.96 L2292.71 1563.28 L2292.56 1556.60 L2292.50 1549.91 L2292.50 1543.23 L2292.50 478.58 L2292.51 471.90 L2292.57 465.21 L2292.73 458.53 L2293.04 451.85 L2293.54 445.18 L2294.28 438.53 L2295.31 431.93 L2296.68 425.38 L2298.40 418.92 L2300.48 412.57 L2302.91 406.34 L2305.68 400.25 L2308.78 394.33 L2312.20 388.58 L2315.93 383.03 L2319.97 377.70 L2324.29 372.60 L2328.89 367.75 L2333.75 363.16 L2338.86 358.84 L2344.19 354.81 L2349.75 351.08 L2355.49 347.67 L2361.42 344.58 L2367.51 341.82 L2373.75 339.40 L2380.10 337.33 L2386.57 335.61 L2393.11 334.25 L2399.72 333.23 L2406.37 332.49 L2413.04 332.00 L2419.72 331.71 L2426.40 331.56 L2433.09 331.50 L2439.77 331.50Z" fill="#4a4c52"/><path d="M2796.51 332.00 L2803.17 332.01 L2809.83 332.07 L2816.49 332.23 L2823.14 332.53 L2829.78 333.03 L2836.40 333.77 L2842.98 334.80 L2849.50 336.16 L2855.93 337.88 L2862.26 339.95 L2868.47 342.37 L2874.53 345.12 L2880.43 348.21 L2886.15 351.62 L2891.67 355.34 L2896.98 359.36 L2902.06 363.66 L2906.90 368.24 L2911.47 373.08 L2915.77 378.17 L2919.78 383.49 L2923.50 389.01 L2926.90 394.74 L2929.98 400.64 L2932.73 406.71 L2935.13 412.92 L2937.20 419.25 L2938.91 425.69 L2940.26 432.21 L2941.28 438.79 L2942.01 445.41 L2942.50 452.05 L2942.80 458.70 L2942.94 465.36 L2943.00 472.02 L2943.00 478.68 L2943.00 1543.51 L2942.99 1550.17 L2942.93 1556.83 L2942.77 1563.49 L2942.47 1570.14 L2941.97 1576.78 L2941.23 1583.40 L2940.20 1589.98 L2938.84 1596.50 L2937.12 1602.93 L2935.05 1609.26 L2932.63 1615.47 L2929.88 1621.53 L2926.79 1627.43 L2923.38 1633.15 L2919.66 1638.67 L2915.64 1643.98 L2911.34 1649.06 L2906.76 1653.90 L2901.92 1658.47 L2896.83 1662.77 L2891.51 1666.78 L2885.99 1670.50 L2880.26 1673.90 L2874.36 1676.98 L2868.29 1679.73 L2862.08 1682.13 L2855.75 1684.20 L2849.31 1685.91 L2842.79 1687.26 L2836.21 1688.28 L2829.59 1689.01 L2822.95 1689.50 L2816.30 1689.80 L2809.64 1689.94 L2802.98 1690.00 L2796.32 1690.00 L2439.49 1690.00 L2432.83 1689.99 L2426.17 1689.93 L2419.51 1689.77 L2412.86 1689.47 L2406.22 1688.97 L2399.60 1688.23 L2393.02 1687.20 L2386.50 1685.84 L2380.07 1684.12 L2373.74 1682.05 L2367.53 1679.63 L2361.47 1676.88 L2355.57 1673.79 L2349.85 1670.38 L2344.33 1666.66 L2339.02 1662.64 L2333.94 1658.34 L2329.10 1653.76 L2324.53 1648.92 L2320.23 1643.83 L2316.22 1638.51 L2312.50 1632.99 L2309.10 1627.26 L2306.02 1621.36 L2303.27 1615.29 L2300.87 1609.08 L2298.80 1602.75 L2297.09 1596.31 L2295.74 1589.79 L2294.72 1583.21 L2293.99 1576.59 L2293.50 1569.95 L2293.20 1563.30 L2293.06 1556.64 L2293.00 1549.98 L2293.00 1543.32 L2293.00 478.49 L2293.01 471.83 L2293.07 465.17 L2293.23 458.51 L2293.53 451.86 L2294.03 445.22 L2294.77 438.60 L2295.80 432.02 L2297.16 425.50 L2298.88 419.07 L2300.95 412.74 L2303.37 406.53 L2306.12 400.47 L2309.21 394.57 L2312.62 388.85 L2316.34 383.33 L2320.36 378.02 L2324.66 372.94 L2329.24 368.10 L2334.08 363.53 L2339.17 359.23 L2344.49 355.22 L2350.01 351.50 L2355.74 348.10 L2361.64 345.02 L2367.71 342.27 L2373.92 339.87 L2380.25 337.80 L2386.69 336.09 L2393.21 334.74 L2399.79 333.72 L2406.41 332.99 L2413.05 332.50 L2419.70 332.20 L2426.36 332.06 L2433.02 332.00 L2439.68 332.00Z" fill="#85888e"/><path d="M2796.76 333.30 L2803.35 333.31 L2809.94 333.37 L2816.53 333.53 L2823.11 333.83 L2829.68 334.32 L2836.23 335.05 L2842.74 336.07 L2849.19 337.42 L2855.55 339.12 L2861.81 341.17 L2867.95 343.56 L2873.95 346.29 L2879.79 349.34 L2885.45 352.71 L2890.92 356.39 L2896.17 360.37 L2901.20 364.63 L2905.98 369.16 L2910.51 373.95 L2914.76 378.98 L2918.73 384.24 L2922.40 389.71 L2925.77 395.38 L2928.81 401.22 L2931.53 407.22 L2933.92 413.36 L2935.96 419.63 L2937.65 426.00 L2938.99 432.45 L2940.00 438.96 L2940.72 445.51 L2941.21 452.08 L2941.50 458.66 L2941.64 465.25 L2941.70 471.84 L2941.70 478.43 L2941.70 1543.76 L2941.69 1550.35 L2941.63 1556.94 L2941.47 1563.53 L2941.17 1570.11 L2940.68 1576.68 L2939.95 1583.23 L2938.93 1589.74 L2937.58 1596.19 L2935.88 1602.55 L2933.83 1608.81 L2931.44 1614.95 L2928.71 1620.95 L2925.66 1626.79 L2922.29 1632.45 L2918.61 1637.92 L2914.63 1643.17 L2910.37 1648.20 L2905.84 1652.98 L2901.05 1657.51 L2896.02 1661.76 L2890.76 1665.73 L2885.29 1669.40 L2879.62 1672.77 L2873.78 1675.81 L2867.78 1678.53 L2861.64 1680.92 L2855.37 1682.96 L2849.00 1684.65 L2842.55 1685.99 L2836.04 1687.00 L2829.49 1687.72 L2822.92 1688.21 L2816.34 1688.50 L2809.75 1688.64 L2803.16 1688.70 L2796.57 1688.70 L2439.24 1688.70 L2432.65 1688.69 L2426.06 1688.63 L2419.47 1688.47 L2412.89 1688.17 L2406.32 1687.68 L2399.77 1686.95 L2393.26 1685.93 L2386.81 1684.58 L2380.45 1682.88 L2374.19 1680.83 L2368.05 1678.44 L2362.05 1675.71 L2356.21 1672.66 L2350.55 1669.29 L2345.08 1665.61 L2339.83 1661.63 L2334.80 1657.37 L2330.02 1652.84 L2325.49 1648.05 L2321.24 1643.02 L2317.27 1637.76 L2313.60 1632.29 L2310.23 1626.62 L2307.19 1620.78 L2304.47 1614.78 L2302.08 1608.64 L2300.04 1602.37 L2298.35 1596.00 L2297.01 1589.55 L2296.00 1583.04 L2295.28 1576.49 L2294.79 1569.92 L2294.50 1563.34 L2294.36 1556.75 L2294.30 1550.16 L2294.30 1543.57 L2294.30 478.24 L2294.31 471.65 L2294.37 465.06 L2294.53 458.47 L2294.83 451.89 L2295.32 445.32 L2296.05 438.77 L2297.07 432.26 L2298.42 425.81 L2300.12 419.45 L2302.17 413.19 L2304.56 407.05 L2307.29 401.05 L2310.34 395.21 L2313.71 389.55 L2317.39 384.08 L2321.37 378.83 L2325.63 373.80 L2330.16 369.02 L2334.95 364.49 L2339.98 360.24 L2345.24 356.27 L2350.71 352.60 L2356.38 349.23 L2362.22 346.19 L2368.22 343.47 L2374.36 341.08 L2380.63 339.04 L2387.00 337.35 L2393.45 336.01 L2399.96 335.00 L2406.51 334.28 L2413.08 333.79 L2419.66 333.50 L2426.25 333.36 L2432.84 333.30 L2439.43 333.30Z" fill="#2c2c2d"/><path d="M2798.23 342.50 L2804.40 342.51 L2810.58 342.57 L2816.75 342.71 L2822.91 342.99 L2829.07 343.46 L2835.20 344.14 L2841.30 345.09 L2847.34 346.36 L2853.30 347.95 L2859.17 349.87 L2864.92 352.11 L2870.54 354.66 L2876.01 357.53 L2881.31 360.68 L2886.43 364.13 L2891.35 367.86 L2896.06 371.85 L2900.54 376.09 L2904.78 380.58 L2908.76 385.29 L2912.48 390.22 L2915.92 395.34 L2919.08 400.65 L2921.93 406.12 L2924.48 411.74 L2926.71 417.50 L2928.62 423.37 L2930.21 429.33 L2931.46 435.37 L2932.41 441.47 L2933.08 447.61 L2933.54 453.76 L2933.81 459.93 L2933.95 466.10 L2934.00 472.27 L2934.00 478.44 L2934.00 1545.23 L2933.99 1551.40 L2933.93 1557.58 L2933.79 1563.75 L2933.51 1569.91 L2933.04 1576.07 L2932.36 1582.20 L2931.41 1588.30 L2930.14 1594.34 L2928.55 1600.30 L2926.63 1606.17 L2924.39 1611.92 L2921.84 1617.54 L2918.97 1623.01 L2915.82 1628.31 L2912.37 1633.43 L2908.64 1638.35 L2904.65 1643.06 L2900.41 1647.54 L2895.92 1651.78 L2891.21 1655.76 L2886.28 1659.48 L2881.16 1662.92 L2875.85 1666.08 L2870.38 1668.93 L2864.76 1671.48 L2859.00 1673.71 L2853.13 1675.62 L2847.17 1677.21 L2841.13 1678.46 L2835.03 1679.41 L2828.89 1680.08 L2822.74 1680.54 L2816.57 1680.81 L2810.40 1680.95 L2804.23 1681.00 L2798.06 1681.00 L2437.77 1681.00 L2431.60 1680.99 L2425.42 1680.93 L2419.25 1680.79 L2413.09 1680.51 L2406.93 1680.04 L2400.80 1679.36 L2394.70 1678.41 L2388.66 1677.14 L2382.70 1675.55 L2376.83 1673.63 L2371.08 1671.39 L2365.46 1668.84 L2359.99 1665.97 L2354.69 1662.82 L2349.57 1659.37 L2344.65 1655.64 L2339.94 1651.65 L2335.46 1647.41 L2331.22 1642.92 L2327.24 1638.21 L2323.52 1633.28 L2320.08 1628.16 L2316.92 1622.85 L2314.07 1617.38 L2311.52 1611.76 L2309.29 1606.00 L2307.38 1600.13 L2305.79 1594.17 L2304.54 1588.13 L2303.59 1582.03 L2302.92 1575.89 L2302.46 1569.74 L2302.19 1563.57 L2302.05 1557.40 L2302.00 1551.23 L2302.00 1545.06 L2302.00 478.27 L2302.01 472.10 L2302.07 465.92 L2302.21 459.75 L2302.49 453.59 L2302.96 447.43 L2303.64 441.30 L2304.59 435.20 L2305.86 429.16 L2307.45 423.20 L2309.37 417.33 L2311.61 411.58 L2314.16 405.96 L2317.03 400.49 L2320.18 395.19 L2323.63 390.07 L2327.36 385.15 L2331.35 380.44 L2335.59 375.96 L2340.08 371.72 L2344.79 367.74 L2349.72 364.02 L2354.84 360.58 L2360.15 357.42 L2365.62 354.57 L2371.24 352.02 L2377.00 349.79 L2382.87 347.88 L2388.83 346.29 L2394.87 345.04 L2400.97 344.09 L2407.11 343.42 L2413.26 342.96 L2419.43 342.69 L2425.60 342.55 L2431.77 342.50 L2437.94 342.50Z" fill="#000"/><path d="M2802.10 356.00 L2807.46 356.01 L2812.82 356.06 L2818.17 356.19 L2823.53 356.43 L2828.87 356.83 L2834.20 357.42 L2839.50 358.25 L2844.74 359.35 L2849.92 360.73 L2855.02 362.40 L2860.01 364.34 L2864.89 366.56 L2869.64 369.05 L2874.24 371.79 L2878.69 374.79 L2882.96 378.02 L2887.05 381.49 L2890.94 385.17 L2894.62 389.07 L2898.08 393.16 L2901.31 397.44 L2904.30 401.89 L2907.04 406.50 L2909.52 411.25 L2911.73 416.13 L2913.67 421.13 L2915.33 426.23 L2916.71 431.41 L2917.80 436.65 L2918.62 441.95 L2919.20 447.28 L2919.60 452.62 L2919.84 457.98 L2919.96 463.34 L2920.00 468.70 L2920.00 474.06 L2920.00 1549.10 L2919.99 1554.46 L2919.94 1559.82 L2919.81 1565.17 L2919.57 1570.53 L2919.17 1575.87 L2918.58 1581.20 L2917.75 1586.50 L2916.65 1591.74 L2915.27 1596.92 L2913.60 1602.02 L2911.66 1607.01 L2909.44 1611.89 L2906.95 1616.64 L2904.21 1621.24 L2901.21 1625.69 L2897.98 1629.96 L2894.51 1634.05 L2890.83 1637.94 L2886.93 1641.62 L2882.84 1645.08 L2878.56 1648.31 L2874.11 1651.30 L2869.50 1654.04 L2864.75 1656.52 L2859.87 1658.73 L2854.87 1660.67 L2849.77 1662.33 L2844.59 1663.71 L2839.35 1664.80 L2834.05 1665.62 L2828.72 1666.20 L2823.38 1666.60 L2818.02 1666.84 L2812.66 1666.96 L2807.30 1667.00 L2801.94 1667.00 L2434.90 1667.00 L2429.54 1666.99 L2424.18 1666.94 L2418.83 1666.81 L2413.47 1666.57 L2408.13 1666.17 L2402.80 1665.58 L2397.50 1664.75 L2392.26 1663.65 L2387.08 1662.27 L2381.98 1660.60 L2376.99 1658.66 L2372.11 1656.44 L2367.36 1653.95 L2362.76 1651.21 L2358.31 1648.21 L2354.04 1644.98 L2349.95 1641.51 L2346.06 1637.83 L2342.38 1633.93 L2338.92 1629.84 L2335.69 1625.56 L2332.70 1621.11 L2329.96 1616.50 L2327.48 1611.75 L2325.27 1606.87 L2323.33 1601.87 L2321.67 1596.77 L2320.29 1591.59 L2319.20 1586.35 L2318.38 1581.05 L2317.80 1575.72 L2317.40 1570.38 L2317.16 1565.02 L2317.04 1559.66 L2317.00 1554.30 L2317.00 1548.94 L2317.00 473.90 L2317.01 468.54 L2317.06 463.18 L2317.19 457.83 L2317.43 452.47 L2317.83 447.13 L2318.42 441.80 L2319.25 436.50 L2320.35 431.26 L2321.73 426.08 L2323.40 420.98 L2325.34 415.99 L2327.56 411.11 L2330.05 406.36 L2332.79 401.76 L2335.79 397.31 L2339.02 393.04 L2342.49 388.95 L2346.17 385.06 L2350.07 381.38 L2354.16 377.92 L2358.44 374.69 L2362.89 371.70 L2367.50 368.96 L2372.25 366.48 L2377.13 364.27 L2382.13 362.33 L2387.23 360.67 L2392.41 359.29 L2397.65 358.20 L2402.95 357.38 L2408.28 356.80 L2413.62 356.40 L2418.98 356.16 L2424.34 356.04 L2429.70 356.00 L2435.06 356.00Z" fill="#fff"/></svg>
<div style="position:absolute;left:2524.5px;top:377px;width:188px;height:55.5px;background:#000;border-radius:28px"></div>
<svg style="position:absolute;left:2329px;top:457.5px;" width="22" height="32" viewBox="0 0 22 32"><path d="M17 3.500 L4.500 16 L17 28.500" fill="none" stroke="#3478F6" stroke-width="4.200" stroke-linecap="round" stroke-linejoin="round"/></svg>
<div style="position:absolute;left:2363.75px;top:457.00px;height:33px;line-height:33px;font-family:'Liberation Sans',sans-serif;font-size:25.5px;font-weight:400;font-style:normal;color:#3478F6;white-space:pre;letter-spacing:-0.641px;">LCS Houses</div>
<div style="position:absolute;left:2341px;top:510.00px;height:66px;line-height:66px;font-family:'Liberation Sans',sans-serif;font-size:51px;font-weight:700;font-style:normal;color:#000;white-space:pre;letter-spacing:-2.430px;">Ross</div>
<svg style="position:absolute;left:2341px;top:608px" width="555" height="396" viewBox="0 0 555 396"><defs><linearGradient id="sky" x1="0" y1="0" x2="1" y2="0.2"><stop offset="0" stop-color="#a6d2f8"/><stop offset=".45" stop-color="#86b9f0"/><stop offset="1" stop-color="#5f97e4"/></linearGradient><linearGradient id="wood" x1="0" y1="0" x2="1" y2="0"><stop offset="0" stop-color="#bd8340"/><stop offset=".3" stop-color="#b47633"/><stop offset=".65" stop-color="#ad6c2c"/><stop offset="1" stop-color="#b06c2a"/></linearGradient><linearGradient id="woodsh" x1="0" y1="0" x2="0" y2="1"><stop offset="0" stop-color="#000" stop-opacity=".22"/><stop offset=".35" stop-color="#000" stop-opacity="0"/><stop offset="1" stop-color="#fff" stop-opacity=".08"/></linearGradient><linearGradient id="glassU" x1="0" y1="0" x2="0" y2="1"><stop offset="0" stop-color="#8fbfc9"/><stop offset=".5" stop-color="#a6d3d8"/><stop offset="1" stop-color="#b5dcdc"/></linearGradient><linearGradient id="glassL" x1="0" y1="0" x2="0" y2="1"><stop offset="0" stop-color="#4f6a34"/><stop offset=".45" stop-color="#6a853f"/><stop offset=".62" stop-color="#98a765"/><stop offset=".8" stop-color="#8f9078"/><stop offset="1" stop-color="#a9a898"/></linearGradient><linearGradient id="soff" x1="0" y1="0" x2="1" y2="0"><stop offset="0" stop-color="#b3a08c"/><stop offset=".45" stop-color="#9a8776"/><stop offset="1" stop-color="#4e4540"/></linearGradient><linearGradient id="floor" x1="0" y1="0" x2="1" y2="0"><stop offset="0" stop-color="#c9bcb2"/><stop offset=".13" stop-color="#cbbfb6"/><stop offset=".135" stop-color="#cfcdc9"/><stop offset="1" stop-color="#d3d3d1"/></linearGradient><linearGradient id="doorgl" x1="0" y1="0" x2="0" y2="1"><stop offset="0" stop-color="#d5dbd0"/><stop offset=".3" stop-color="#c3cbbd"/><stop offset=".5" stop-color="#7f8e7c"/><stop offset="1" stop-color="#4d544b"/></linearGradient><filter id="bl" x="-5%" y="-5%" width="110%" height="110%"><feGaussianBlur stdDeviation="1.1"/></filter><clipPath id="pc"><rect x="0" y="0" width="555" height="396"/></clipPath></defs><g clip-path="url(#pc)"><rect width="555" height="396" fill="url(#sky)"/><polyline points="22.7,12.8 25.1,8.1" fill="none" stroke="rgba(150,160,150,.5)" stroke-width="0.7" /><polyline points="37.5,19.7 30.4,10.6" fill="none" stroke="rgba(150,160,150,.5)" stroke-width="0.7" /><polyline points="2.6,21.9 -4.3,17.0" fill="none" stroke="rgba(150,160,150,.5)" stroke-width="0.7" /><polyline points="29.7,34.5 23.7,28.2" fill="none" stroke="rgba(150,160,150,.5)" stroke-width="0.7" /><polyline points="43.9,38.3 45.2,30.4" fill="none" stroke="rgba(150,160,150,.5)" stroke-width="0.7" /><polyline points="68.3,9.5 74.1,2.6" fill="none" stroke="rgba(150,160,150,.5)" stroke-width="0.7" /><polyline points="10.1,11.8 7.0,-0.4" fill="none" stroke="rgba(150,160,150,.5)" stroke-width="0.7" /><polyline points="12.7,26.6 14.9,18.9" fill="none" stroke="rgba(150,160,150,.5)" stroke-width="0.7" /><polyline points="38.3,10.0 31.3,3.9" fill="none" stroke="rgba(150,160,150,.5)" stroke-width="0.7" /><polyline points="47.6,21.7 44.7,11.8" fill="none" stroke="rgba(150,160,150,.5)" stroke-width="0.7" /><polygon points="440.0,25.5 479.9,0.0 500.0,0.0 500.0,80.0 440.0,60.0" fill="#c2b485" /><polygon points="499.7,0.0 519.6,0.0 555.0,14.0 555.0,100.0 499.7,80.0" fill="#8d8670" /><rect x="465.8" y="21.0" width="8.8" height="4.2" fill="#b5a572" opacity=".8"/><rect x="444.7" y="21.0" width="7.0" height="3.4" fill="#cdbd82" opacity=".8"/><rect x="456.4" y="68.6" width="4.7" height="3.5" fill="#a99a78" opacity=".8"/><rect x="448.7" y="34.2" width="4.2" height="4.2" fill="#9f9b86" opacity=".8"/><rect x="472.7" y="61.3" width="5.9" height="4.2" fill="#9f9b86" opacity=".8"/><rect x="468.3" y="55.8" width="4.4" height="2.7" fill="#a99a78" opacity=".8"/><rect x="467.0" y="46.5" width="4.4" height="4.3" fill="#c9b98c" opacity=".8"/><rect x="472.9" y="47.7" width="6.7" height="4.3" fill="#c9b98c" opacity=".8"/><rect x="459.8" y="65.8" width="6.1" height="4.0" fill="#cdbd82" opacity=".8"/><rect x="443.4" y="53.8" width="4.8" height="3.1" fill="#cdbd82" opacity=".8"/><rect x="492.3" y="34.8" width="5.0" height="3.5" fill="#a99a78" opacity=".8"/><rect x="490.4" y="57.3" width="9.2" height="3.2" fill="#cdbd82" opacity=".8"/><rect x="496.2" y="47.8" width="6.3" height="3.1" fill="#d3c690" opacity=".8"/><rect x="450.0" y="16.2" width="5.4" height="3.7" fill="#9f9b86" opacity=".8"/><rect x="450.4" y="19.7" width="4.9" height="3.8" fill="#9f9b86" opacity=".8"/><rect x="472.3" y="66.7" width="8.1" height="3.8" fill="#9f9b86" opacity=".8"/><rect x="477.3" y="51.8" width="6.7" height="4.7" fill="#c9b98c" opacity=".8"/><rect x="485.5" y="27.5" width="6.4" height="2.8" fill="#c9b98c" opacity=".8"/><rect x="462.8" y="13.3" width="9.9" height="3.6" fill="#d3c690" opacity=".8"/><rect x="459.4" y="3.7" width="4.0" height="2.9" fill="#d3c690" opacity=".8"/><rect x="494.1" y="43.0" width="4.4" height="3.0" fill="#cdbd82" opacity=".8"/><rect x="448.5" y="17.7" width="6.1" height="3.4" fill="#d3c690" opacity=".8"/><rect x="446.6" y="34.2" width="9.9" height="3.7" fill="#a99a78" opacity=".8"/><rect x="444.9" y="7.2" width="6.1" height="3.2" fill="#c9b98c" opacity=".8"/><rect x="449.2" y="1.6" width="9.7" height="3.8" fill="#b5a572" opacity=".8"/><rect x="479.3" y="64.0" width="8.5" height="3.2" fill="#c9b98c" opacity=".8"/><rect x="489.2" y="48.7" width="5.6" height="3.4" fill="#b5a572" opacity=".8"/><rect x="460.3" y="15.6" width="7.2" height="3.8" fill="#c9b98c" opacity=".8"/><rect x="452.7" y="56.8" width="9.9" height="4.6" fill="#b5a572" opacity=".8"/><rect x="486.6" y="51.8" width="5.4" height="3.8" fill="#a99a78" opacity=".8"/><rect x="481.7" y="69.3" width="8.7" height="3.7" fill="#b5a572" opacity=".8"/><rect x="479.5" y="67.0" width="6.7" height="4.8" fill="#a99a78" opacity=".8"/><rect x="494.4" y="25.5" width="5.3" height="3.1" fill="#b5a572" opacity=".8"/><rect x="459.3" y="33.8" width="9.9" height="4.0" fill="#d3c690" opacity=".8"/><rect x="467.3" y="45.7" width="8.8" height="2.7" fill="#c9b98c" opacity=".8"/><rect x="446.8" y="27.2" width="8.3" height="3.0" fill="#b5a572" opacity=".8"/><rect x="464.7" y="44.5" width="4.5" height="4.9" fill="#c9b98c" opacity=".8"/><rect x="462.6" y="28.1" width="9.7" height="4.3" fill="#b5a572" opacity=".8"/><rect x="496.6" y="1.9" width="7.5" height="3.7" fill="#c9b98c" opacity=".8"/><rect x="448.3" y="57.9" width="9.9" height="4.1" fill="#a99a78" opacity=".8"/><rect x="448.9" y="38.4" width="4.1" height="4.5" fill="#c9b98c" opacity=".8"/><rect x="477.0" y="36.9" width="9.6" height="3.6" fill="#b5a572" opacity=".8"/><rect x="487.1" y="14.8" width="5.5" height="3.2" fill="#b5a572" opacity=".8"/><rect x="483.5" y="22.8" width="7.3" height="4.6" fill="#d3c690" opacity=".8"/><rect x="491.9" y="24.8" width="6.7" height="4.0" fill="#9f9b86" opacity=".8"/><rect x="464.0" y="64.2" width="7.0" height="3.8" fill="#9f9b86" opacity=".8"/><rect x="469.1" y="61.1" width="8.7" height="4.0" fill="#b5a572" opacity=".8"/><rect x="449.8" y="33.1" width="8.4" height="3.9" fill="#a99a78" opacity=".8"/><rect x="478.9" y="37.2" width="6.9" height="4.4" fill="#9f9b86" opacity=".8"/><rect x="443.2" y="13.4" width="4.3" height="2.7" fill="#cdbd82" opacity=".8"/><rect x="472.0" y="53.2" width="9.5" height="3.6" fill="#9f9b86" opacity=".8"/><rect x="495.5" y="42.4" width="5.2" height="3.2" fill="#9f9b86" opacity=".8"/><rect x="470.4" y="33.5" width="9.6" height="4.2" fill="#a99a78" opacity=".8"/><rect x="492.6" y="62.5" width="5.2" height="3.6" fill="#cdbd82" opacity=".8"/><rect x="446.9" y="30.9" width="4.4" height="3.1" fill="#d3c690" opacity=".8"/><rect x="452.1" y="21.2" width="4.7" height="4.4" fill="#c9b98c" opacity=".8"/><rect x="476.7" y="25.6" width="5.5" height="2.8" fill="#cdbd82" opacity=".8"/><rect x="452.5" y="66.7" width="6.4" height="3.7" fill="#c9b98c" opacity=".8"/><rect x="487.4" y="11.3" width="6.6" height="3.8" fill="#a99a78" opacity=".8"/><rect x="464.0" y="25.0" width="4.6" height="3.4" fill="#a99a78" opacity=".8"/><rect x="471.6" y="30.8" width="4.1" height="3.3" fill="#9f9b86" opacity=".8"/><rect x="456.8" y="67.3" width="4.7" height="4.8" fill="#b5a572" opacity=".8"/><rect x="495.4" y="7.3" width="5.6" height="2.6" fill="#b5a572" opacity=".8"/><rect x="455.4" y="9.1" width="6.5" height="4.8" fill="#a99a78" opacity=".8"/><rect x="463.1" y="37.6" width="7.1" height="3.7" fill="#a99a78" opacity=".8"/><rect x="445.1" y="4.0" width="8.1" height="3.6" fill="#d3c690" opacity=".8"/><rect x="455.3" y="1.2" width="4.5" height="3.2" fill="#9f9b86" opacity=".8"/><rect x="488.8" y="4.7" width="9.2" height="3.6" fill="#a99a78" opacity=".8"/><rect x="496.7" y="29.2" width="9.5" height="4.1" fill="#d3c690" opacity=".8"/><rect x="470.0" y="16.7" width="4.7" height="2.9" fill="#d3c690" opacity=".8"/><rect x="509.6" y="88.7" width="7.8" height="4.6" fill="#9a927a" opacity=".85"/><rect x="515.4" y="48.5" width="5.1" height="4.0" fill="#7f7a68" opacity=".85"/><rect x="552.7" y="5.4" width="4.1" height="4.5" fill="#9a927a" opacity=".85"/><rect x="527.3" y="24.8" width="6.7" height="5.0" fill="#77807e" opacity=".85"/><rect x="522.9" y="48.0" width="9.0" height="4.2" fill="#84806e" opacity=".85"/><rect x="516.3" y="22.0" width="5.4" height="3.6" fill="#77807e" opacity=".85"/><rect x="538.6" y="15.0" width="9.9" height="5.9" fill="#9a927a" opacity=".85"/><rect x="500.8" y="60.2" width="9.3" height="4.3" fill="#7f7a68" opacity=".85"/><rect x="504.5" y="80.2" width="9.2" height="5.0" fill="#6f7670" opacity=".85"/><rect x="531.7" y="66.4" width="4.3" height="3.6" fill="#6f7670" opacity=".85"/><rect x="523.6" y="26.5" width="9.8" height="5.9" fill="#84806e" opacity=".85"/><rect x="517.1" y="5.2" width="9.3" height="3.7" fill="#9a927a" opacity=".85"/><rect x="500.1" y="37.5" width="6.8" height="4.5" fill="#9a927a" opacity=".85"/><rect x="513.2" y="74.2" width="4.5" height="5.5" fill="#9a927a" opacity=".85"/><rect x="521.2" y="5.9" width="4.1" height="3.9" fill="#9a927a" opacity=".85"/><rect x="504.5" y="91.1" width="9.1" height="3.5" fill="#77807e" opacity=".85"/><rect x="541.6" y="57.5" width="8.6" height="5.2" fill="#a39a7c" opacity=".85"/><rect x="507.9" y="69.3" width="7.9" height="3.1" fill="#77807e" opacity=".85"/><rect x="547.3" y="60.3" width="8.4" height="5.4" fill="#9a927a" opacity=".85"/><rect x="548.2" y="72.0" width="7.4" height="5.4" fill="#7f7a68" opacity=".85"/><rect x="543.8" y="56.3" width="9.4" height="5.0" fill="#77807e" opacity=".85"/><rect x="534.1" y="9.9" width="4.3" height="4.9" fill="#7f7a68" opacity=".85"/><rect x="520.0" y="44.0" width="4.3" height="3.1" fill="#84806e" opacity=".85"/><rect x="536.1" y="47.5" width="4.0" height="5.4" fill="#77807e" opacity=".85"/><rect x="549.4" y="85.5" width="4.6" height="4.6" fill="#77807e" opacity=".85"/><rect x="539.0" y="25.5" width="4.4" height="3.8" fill="#77807e" opacity=".85"/><rect x="540.1" y="23.5" width="7.9" height="4.4" fill="#a39a7c" opacity=".85"/><rect x="504.1" y="86.7" width="5.7" height="3.1" fill="#77807e" opacity=".85"/><rect x="534.1" y="9.2" width="4.9" height="3.8" fill="#77807e" opacity=".85"/><rect x="536.7" y="59.8" width="4.8" height="4.4" fill="#a39a7c" opacity=".85"/><rect x="514.2" y="64.5" width="8.2" height="5.0" fill="#6f7670" opacity=".85"/><rect x="537.6" y="28.6" width="6.8" height="5.3" fill="#84806e" opacity=".85"/><rect x="510.6" y="93.0" width="9.6" height="3.1" fill="#a39a7c" opacity=".85"/><rect x="504.1" y="49.1" width="10.0" height="6.0" fill="#a39a7c" opacity=".85"/><rect x="511.1" y="89.9" width="5.3" height="4.7" fill="#9a927a" opacity=".85"/><rect x="539.6" y="26.3" width="6.2" height="4.8" fill="#77807e" opacity=".85"/><rect x="527.0" y="84.5" width="8.2" height="3.7" fill="#a39a7c" opacity=".85"/><rect x="520.9" y="16.8" width="9.7" height="5.0" fill="#a39a7c" opacity=".85"/><rect x="516.0" y="15.1" width="6.1" height="3.9" fill="#6f7670" opacity=".85"/><rect x="500.1" y="71.8" width="9.0" height="3.4" fill="#9a927a" opacity=".85"/><rect x="537.8" y="85.8" width="5.7" height="4.1" fill="#a39a7c" opacity=".85"/><rect x="520.7" y="82.9" width="4.5" height="5.8" fill="#6f7670" opacity=".85"/><rect x="545.3" y="28.1" width="4.3" height="5.0" fill="#77807e" opacity=".85"/><rect x="549.6" y="25.2" width="5.6" height="4.5" fill="#9a927a" opacity=".85"/><rect x="541.0" y="75.0" width="6.6" height="3.1" fill="#77807e" opacity=".85"/><rect x="521.2" y="83.4" width="7.3" height="3.6" fill="#7f7a68" opacity=".85"/><rect x="502.6" y="70.1" width="6.7" height="5.3" fill="#77807e" opacity=".85"/><rect x="546.1" y="47.2" width="9.5" height="4.7" fill="#9a927a" opacity=".85"/><rect x="525.0" y="34.0" width="5.8" height="5.2" fill="#77807e" opacity=".85"/><rect x="513.8" y="63.0" width="5.8" height="4.7" fill="#a39a7c" opacity=".85"/><rect x="506.3" y="61.8" width="4.5" height="4.5" fill="#a39a7c" opacity=".85"/><rect x="529.2" y="44.1" width="6.0" height="5.3" fill="#a39a7c" opacity=".85"/><rect x="507.4" y="19.9" width="4.5" height="4.0" fill="#7f7a68" opacity=".85"/><rect x="516.9" y="36.3" width="8.9" height="3.6" fill="#7f7a68" opacity=".85"/><rect x="539.7" y="40.4" width="6.5" height="4.6" fill="#a39a7c" opacity=".85"/><rect x="514.3" y="71.9" width="7.0" height="4.7" fill="#6f7670" opacity=".85"/><rect x="506.7" y="48.8" width="7.8" height="5.6" fill="#9a927a" opacity=".85"/><rect x="504.9" y="85.4" width="6.3" height="4.9" fill="#a39a7c" opacity=".85"/><rect x="550.6" y="80.9" width="9.2" height="3.1" fill="#7f7a68" opacity=".85"/><rect x="522.5" y="73.0" width="8.8" height="5.9" fill="#a39a7c" opacity=".85"/><polygon points="440.2,25.1 479.9,0.0 440.0,0.0" fill="#6ea3e8" /><polygon points="519.6,0.0 555.0,0.0 555.0,13.9" fill="#6299e2" /><polyline points="440.2,25.6 479.9,0.5" fill="none" stroke="#e9e9ee" stroke-width="2" /><polygon points="520.0,80.0 555.0,90.0 555.0,160.0 520.0,150.0" fill="#9a9072" /><rect x="524.0" y="112.3" width="8.6" height="5.5" fill="#7d7c70" opacity=".85"/><rect x="552.2" y="103.4" width="4.5" height="3.5" fill="#a8a188" opacity=".85"/><rect x="552.2" y="94.8" width="8.1" height="5.1" fill="#7d7c70" opacity=".85"/><rect x="526.5" y="136.2" width="4.0" height="3.4" fill="#a8a188" opacity=".85"/><rect x="550.7" y="128.0" width="5.5" height="3.4" fill="#b3a77f" opacity=".85"/><rect x="539.3" y="115.1" width="7.8" height="3.3" fill="#b3a77f" opacity=".85"/><rect x="539.2" y="124.1" width="5.9" height="3.7" fill="#a8a188" opacity=".85"/><rect x="524.0" y="121.3" width="9.0" height="3.8" fill="#b3a77f" opacity=".85"/><rect x="542.7" y="142.8" width="6.4" height="3.7" fill="#8b8570" opacity=".85"/><rect x="524.8" y="113.5" width="7.2" height="3.2" fill="#8b8570" opacity=".85"/><rect x="538.5" y="129.8" width="6.1" height="3.8" fill="#7d7c70" opacity=".85"/><rect x="550.8" y="102.1" width="4.2" height="4.0" fill="#7d7c70" opacity=".85"/><rect x="534.5" y="112.6" width="4.0" height="3.9" fill="#a8a188" opacity=".85"/><rect x="526.0" y="118.7" width="5.0" height="5.3" fill="#8b8570" opacity=".85"/><rect x="530.7" y="101.7" width="7.8" height="3.9" fill="#a8a188" opacity=".85"/><rect x="538.4" y="99.6" width="5.1" height="4.3" fill="#a59a76" opacity=".85"/><rect x="551.5" y="97.1" width="6.0" height="3.6" fill="#a8a188" opacity=".85"/><rect x="528.1" y="91.2" width="4.3" height="4.2" fill="#b3a77f" opacity=".85"/><rect x="545.2" y="149.8" width="8.7" height="4.0" fill="#8b8570" opacity=".85"/><rect x="542.9" y="120.5" width="6.3" height="3.9" fill="#7d7c70" opacity=".85"/><rect x="548.3" y="149.1" width="6.2" height="3.3" fill="#a59a76" opacity=".85"/><rect x="532.1" y="109.8" width="8.8" height="3.4" fill="#8b8570" opacity=".85"/><rect x="535.0" y="135.7" width="5.5" height="5.4" fill="#a59a76" opacity=".85"/><rect x="525.4" y="117.4" width="5.9" height="5.8" fill="#8b8570" opacity=".85"/><rect x="533.4" y="133.7" width="6.4" height="4.9" fill="#8b8570" opacity=".85"/><rect x="547.5" y="135.5" width="4.2" height="3.1" fill="#a59a76" opacity=".85"/><rect x="547.3" y="91.8" width="5.0" height="3.2" fill="#a8a188" opacity=".85"/><rect x="533.8" y="104.9" width="8.8" height="4.9" fill="#b3a77f" opacity=".85"/><rect x="545.6" y="130.8" width="8.6" height="3.9" fill="#a8a188" opacity=".85"/><rect x="550.6" y="127.3" width="8.7" height="3.1" fill="#8b8570" opacity=".85"/><rect x="527.1" y="132.4" width="6.3" height="5.3" fill="#b3a77f" opacity=".85"/><rect x="550.5" y="138.5" width="4.7" height="4.5" fill="#a59a76" opacity=".85"/><rect x="547.3" y="133.8" width="8.1" height="5.3" fill="#a8a188" opacity=".85"/><rect x="530.8" y="141.4" width="6.3" height="5.4" fill="#a8a188" opacity=".85"/><rect x="526.3" y="100.2" width="7.8" height="3.7" fill="#a59a76" opacity=".85"/><rect x="542.8" y="117.9" width="6.7" height="3.5" fill="#7d7c70" opacity=".85"/><rect x="549.6" y="149.2" width="5.3" height="3.3" fill="#a59a76" opacity=".85"/><rect x="536.2" y="149.3" width="8.9" height="3.5" fill="#8b8570" opacity=".85"/><rect x="536.1" y="126.5" width="7.4" height="5.2" fill="#a59a76" opacity=".85"/><rect x="546.6" y="106.2" width="5.4" height="3.8" fill="#b3a77f" opacity=".85"/><polygon points="146.0,59.5 163.4,5.3 239.4,27.0 264.5,0.0 330.0,0.0 330.0,30.0 305.0,11.2 258.0,58.2 194.4,44.3 182.5,66.0" fill="#b8a892" /><polygon points="166.0,8.0 239.0,29.0 236.0,36.0 158.0,32.0" fill="#c4b59f" /><polygon points="264.5,0.0 330.0,0.0 305.3,11.2 258.0,58.2 243.0,40.0" fill="#b3a592" /><polyline points="146.0,60.0 163.4,5.3 239.4,26.5 264.8,0.0" fill="none" stroke="#9d9793" stroke-width="3" stroke-linejoin="round"/><polyline points="165.0,9.5 239.0,31.0" fill="none" stroke="#e2e2e6" stroke-width="2.6" /><polyline points="241.0,31.0 268.0,2.0" fill="none" stroke="#cfcdd0" stroke-width="2.2" /><polygon points="300.0,0.0 326.0,0.0 555.0,77.0 555.0,93.0 523.5,74.0 305.3,11.2" fill="url(#soff)" /><polygon points="326.0,0.0 346.0,0.0 555.0,67.0 555.0,77.0" fill="#c2c1c9" /><polygon points="346.0,0.0 354.0,0.0 555.0,62.0 555.0,67.5" fill="#5a5452" /><polygon points="182.5,66.0 194.4,44.3 258.0,58.2 305.3,11.2 523.5,74.0 526.0,150.0 182.0,80.0" fill="#387552" /><polygon points="258.0,58.2 293.4,25.0 293.4,95.0 258.0,90.0" fill="#36704f" /><polygon points="293.4,25.0 305.3,11.9 305.3,84.7 293.4,93.0" fill="#b3c79c" /><polygon points="308.0,14.0 323.8,18.5 323.8,82.0 308.0,79.0" fill="#5c9571" /><polyline points="308.0,20.0 323.8,24.2" fill="none" stroke="rgba(20,60,40,.35)" stroke-width="0.7" /><polyline points="293.4,28.0 305.3,16.0" fill="none" stroke="rgba(90,110,70,.35)" stroke-width="0.7" /><polyline points="308.0,25.8 323.8,30.0" fill="none" stroke="rgba(20,60,40,.35)" stroke-width="0.7" /><polyline points="293.4,33.8 305.3,21.8" fill="none" stroke="rgba(90,110,70,.35)" stroke-width="0.7" /><polyline points="308.0,31.6 323.8,35.8" fill="none" stroke="rgba(20,60,40,.35)" stroke-width="0.7" /><polyline points="293.4,39.6 305.3,27.6" fill="none" stroke="rgba(90,110,70,.35)" stroke-width="0.7" /><polyline points="308.0,37.4 323.8,41.6" fill="none" stroke="rgba(20,60,40,.35)" stroke-width="0.7" /><polyline points="293.4,45.4 305.3,33.4" fill="none" stroke="rgba(90,110,70,.35)" stroke-width="0.7" /><polyline points="308.0,43.2 323.8,47.4" fill="none" stroke="rgba(20,60,40,.35)" stroke-width="0.7" /><polyline points="293.4,51.2 305.3,39.2" fill="none" stroke="rgba(90,110,70,.35)" stroke-width="0.7" /><polyline points="308.0,49.0 323.8,53.2" fill="none" stroke="rgba(20,60,40,.35)" stroke-width="0.7" /><polyline points="293.4,57.0 305.3,45.0" fill="none" stroke="rgba(90,110,70,.35)" stroke-width="0.7" /><polyline points="308.0,54.8 323.8,59.0" fill="none" stroke="rgba(20,60,40,.35)" stroke-width="0.7" /><polyline points="293.4,62.8 305.3,50.8" fill="none" stroke="rgba(90,110,70,.35)" stroke-width="0.7" /><polyline points="308.0,60.6 323.8,64.8" fill="none" stroke="rgba(20,60,40,.35)" stroke-width="0.7" /><polyline points="293.4,68.6 305.3,56.6" fill="none" stroke="rgba(90,110,70,.35)" stroke-width="0.7" /><polyline points="308.0,66.4 323.8,70.6" fill="none" stroke="rgba(20,60,40,.35)" stroke-width="0.7" /><polyline points="293.4,74.4 305.3,62.4" fill="none" stroke="rgba(90,110,70,.35)" stroke-width="0.7" /><polyline points="308.0,72.2 323.8,76.4" fill="none" stroke="rgba(20,60,40,.35)" stroke-width="0.7" /><polyline points="293.4,80.2 305.3,68.2" fill="none" stroke="rgba(90,110,70,.35)" stroke-width="0.7" /><polyline points="308.0,78.0 323.8,82.2" fill="none" stroke="rgba(20,60,40,.35)" stroke-width="0.7" /><polyline points="293.4,86.0 305.3,74.0" fill="none" stroke="rgba(90,110,70,.35)" stroke-width="0.7" /><polygon points="279.5,41.0 290.7,34.4 290.7,91.3 279.5,88.6" fill="#c9d1ad" /><polygon points="265.0,56.9 274.2,50.9 274.2,86.0 265.0,84.7" fill="#b9c4a6" /><polygon points="194.4,44.3 258.0,58.2 258.0,92.0 197.0,75.0" fill="#4b8a63" /><polyline points="196.0,50.0 258.0,63.0" fill="none" stroke="rgba(20,60,40,.3)" stroke-width="0.7" /><polyline points="196.0,55.0 258.0,68.0" fill="none" stroke="rgba(20,60,40,.3)" stroke-width="0.7" /><polyline points="196.0,60.0 258.0,73.0" fill="none" stroke="rgba(20,60,40,.3)" stroke-width="0.7" /><polyline points="196.0,65.0 258.0,78.0" fill="none" stroke="rgba(20,60,40,.3)" stroke-width="0.7" /><polyline points="196.0,70.0 258.0,83.0" fill="none" stroke="rgba(20,60,40,.3)" stroke-width="0.7" /><polyline points="196.0,75.0 258.0,88.0" fill="none" stroke="rgba(20,60,40,.3)" stroke-width="0.7" /><polygon points="292.0,93.0 306.6,81.3 526.2,131.6 527.5,150.0 292.0,100.0" fill="#d3d5de" /><polygon points="329.7,24.5 353.5,30.4 353.5,87.3 329.7,82.0" fill="url(#glassU)" stroke="#2d4a44" stroke-width="1.2"/><polygon points="361.9,34.1 384.0,39.7 384.0,94.2 361.9,89.9" fill="url(#glassU)" stroke="#2d4a44" stroke-width="1.2"/><polygon points="391.9,43.0 413.1,48.3 413.1,101.2 391.9,97.2" fill="url(#glassU)" stroke="#2d4a44" stroke-width="1.2"/><polygon points="420.3,51.6 439.5,56.2 439.5,107.1 420.3,103.2" fill="url(#glassU)" stroke="#2d4a44" stroke-width="1.2"/><polygon points="446.1,59.5 464.0,63.5 464.0,112.8 446.1,109.1" fill="url(#glassU)" stroke="#2d4a44" stroke-width="1.2"/><polygon points="471.3,66.8 488.5,70.8 488.5,118.1 471.3,114.4" fill="url(#glassU)" stroke="#2d4a44" stroke-width="1.2"/><polygon points="493.8,73.4 510.3,77.4 510.3,123.0 493.8,119.7" fill="url(#glassU)" stroke="#2d4a44" stroke-width="1.2"/><polyline points="530.0,64.8 531.4,74.0 521.5,82.0 523.5,141.0" fill="none" stroke="#3c3d42" stroke-width="2.6" stroke-linejoin="round"/><polyline points="160.7,28.4 160.7,38.4 195.8,57.5 197.0,72.0" fill="none" stroke="#9b9b9b" stroke-width="1.6" stroke-linejoin="round"/><polygon points="0.0,31.0 555.0,146.0 555.0,150.5 0.0,36.5" fill="#6c6461" /><polygon points="0.0,36.5 555.0,150.5 555.0,153.5 0.0,42.5" fill="#a9a8ad" /><rect x="8.0" y="39.5" width="3.6" height="3" fill="#55504f"/><rect x="24.3" y="42.8" width="3.6" height="3" fill="#55504f"/><rect x="40.6" y="46.1" width="3.6" height="3" fill="#55504f"/><rect x="56.9" y="49.4" width="3.6" height="3" fill="#55504f"/><rect x="73.2" y="52.7" width="3.6" height="3" fill="#55504f"/><rect x="89.5" y="56.0" width="3.6" height="3" fill="#55504f"/><rect x="105.8" y="59.3" width="3.6" height="3" fill="#55504f"/><rect x="122.1" y="62.6" width="3.6" height="3" fill="#55504f"/><rect x="138.4" y="66.0" width="3.6" height="3" fill="#55504f"/><rect x="154.7" y="69.3" width="3.6" height="3" fill="#55504f"/><rect x="171.0" y="72.6" width="3.6" height="3" fill="#55504f"/><rect x="187.3" y="75.9" width="3.6" height="3" fill="#55504f"/><rect x="203.6" y="79.2" width="3.6" height="3" fill="#55504f"/><rect x="219.9" y="82.5" width="3.6" height="3" fill="#55504f"/><rect x="236.2" y="85.8" width="3.6" height="3" fill="#55504f"/><rect x="252.5" y="89.1" width="3.6" height="3" fill="#55504f"/><rect x="268.8" y="92.4" width="3.6" height="3" fill="#55504f"/><rect x="285.1" y="95.7" width="3.6" height="3" fill="#55504f"/><rect x="301.4" y="99.0" width="3.6" height="3" fill="#55504f"/><rect x="317.7" y="102.3" width="3.6" height="3" fill="#55504f"/><rect x="334.0" y="105.6" width="3.6" height="3" fill="#55504f"/><rect x="350.3" y="108.9" width="3.6" height="3" fill="#55504f"/><rect x="366.6" y="112.2" width="3.6" height="3" fill="#55504f"/><rect x="382.9" y="115.5" width="3.6" height="3" fill="#55504f"/><rect x="399.2" y="118.8" width="3.6" height="3" fill="#55504f"/><rect x="415.5" y="122.1" width="3.6" height="3" fill="#55504f"/><rect x="431.8" y="125.4" width="3.6" height="3" fill="#55504f"/><rect x="448.1" y="128.7" width="3.6" height="3" fill="#55504f"/><rect x="464.4" y="132.0" width="3.6" height="3" fill="#55504f"/><rect x="480.7" y="135.3" width="3.6" height="3" fill="#55504f"/><rect x="497.0" y="138.6" width="3.6" height="3" fill="#55504f"/><rect x="513.3" y="141.9" width="3.6" height="3" fill="#55504f"/><rect x="529.6" y="145.3" width="3.6" height="3" fill="#55504f"/><rect x="545.9" y="148.6" width="3.6" height="3" fill="#55504f"/><polygon points="0.0,42.5 555.0,153.5 555.0,160.5 0.0,54.0" fill="#726c6b" /><polygon points="0.0,44.0 555.0,154.5 555.0,156.0 0.0,46.5" fill="#9a9492" /><polygon points="0.0,54.0 555.0,160.5 555.0,169.0 0.0,72.0" fill="#b5b3ba" /><polygon points="0.0,72.0 555.0,169.0 555.0,189.0 287.0,145.5 284.0,157.0 231.0,184.0 82.0,170.6 79.0,196.0 0.0,196.0" fill="url(#wood)" /><clipPath id="wc"><polygon points="0.0,72.0 555.0,169.0 555.0,189.0 287.0,145.5 284.0,157.0 231.0,184.0 82.0,170.6 79.0,196.0 0.0,196.0" fill="#000" /></clipPath><g clip-path="url(#wc)"><polyline points="0.0,80.3 555.0,170.5" fill="none" stroke="rgba(110,55,15,.30)" stroke-width="0.8" /><polyline points="0.0,88.6 555.0,172.0" fill="none" stroke="rgba(110,55,15,.30)" stroke-width="0.8" /><polyline points="0.0,96.9 555.0,173.5" fill="none" stroke="rgba(110,55,15,.30)" stroke-width="0.8" /><polyline points="0.0,105.2 555.0,175.0" fill="none" stroke="rgba(110,55,15,.30)" stroke-width="0.8" /><polyline points="0.0,113.5 555.0,176.5" fill="none" stroke="rgba(110,55,15,.30)" stroke-width="0.8" /><polyline points="0.0,121.8 555.0,178.0" fill="none" stroke="rgba(110,55,15,.30)" stroke-width="0.8" /><polyline points="0.0,130.1 555.0,179.5" fill="none" stroke="rgba(110,55,15,.30)" stroke-width="0.8" /><polyline points="0.0,138.4 555.0,181.0" fill="none" stroke="rgba(110,55,15,.30)" stroke-width="0.8" /><polyline points="0.0,146.7 555.0,182.5" fill="none" stroke="rgba(110,55,15,.30)" stroke-width="0.8" /><polyline points="0.0,155.0 555.0,184.0" fill="none" stroke="rgba(110,55,15,.30)" stroke-width="0.8" /><polyline points="0.0,163.3 555.0,185.5" fill="none" stroke="rgba(110,55,15,.30)" stroke-width="0.8" /><polyline points="0.0,171.6 555.0,187.0" fill="none" stroke="rgba(110,55,15,.30)" stroke-width="0.8" /><polyline points="0.0,179.9 555.0,188.5" fill="none" stroke="rgba(110,55,15,.30)" stroke-width="0.8" /><polyline points="0.0,188.2 555.0,190.0" fill="none" stroke="rgba(110,55,15,.30)" stroke-width="0.8" /><polyline points="0.0,196.5 555.0,191.5" fill="none" stroke="rgba(110,55,15,.30)" stroke-width="0.8" /><circle cx="310.0" cy="102.9" r="0.6" fill="rgba(80,35,10,.55)"/><circle cx="103.0" cy="97.6" r="0.9" fill="rgba(80,35,10,.55)"/><circle cx="242.9" cy="117.5" r="0.7" fill="rgba(80,35,10,.55)"/><circle cx="416.8" cy="138.3" r="0.6" fill="rgba(80,35,10,.55)"/><circle cx="339.5" cy="155.1" r="1.0" fill="rgba(80,35,10,.55)"/><circle cx="43.0" cy="134.6" r="0.9" fill="rgba(80,35,10,.55)"/><circle cx="353.0" cy="185.2" r="0.5" fill="rgba(80,35,10,.55)"/><circle cx="123.3" cy="93.7" r="0.6" fill="rgba(80,35,10,.55)"/><circle cx="408.6" cy="147.1" r="1.0" fill="rgba(80,35,10,.55)"/><circle cx="156.3" cy="179.6" r="0.7" fill="rgba(80,35,10,.55)"/><circle cx="109.2" cy="169.4" r="1.0" fill="rgba(80,35,10,.55)"/><circle cx="44.4" cy="148.6" r="0.8" fill="rgba(80,35,10,.55)"/><circle cx="91.4" cy="122.4" r="0.6" fill="rgba(80,35,10,.55)"/><circle cx="85.7" cy="109.3" r="0.8" fill="rgba(80,35,10,.55)"/><circle cx="273.7" cy="103.4" r="0.5" fill="rgba(80,35,10,.55)"/><circle cx="137.4" cy="158.0" r="0.6" fill="rgba(80,35,10,.55)"/><circle cx="131.1" cy="103.4" r="0.9" fill="rgba(80,35,10,.55)"/><circle cx="230.2" cy="87.3" r="0.6" fill="rgba(80,35,10,.55)"/><circle cx="166.0" cy="143.3" r="0.8" fill="rgba(80,35,10,.55)"/><circle cx="38.3" cy="98.8" r="0.8" fill="rgba(80,35,10,.55)"/><circle cx="172.1" cy="112.6" r="0.7" fill="rgba(80,35,10,.55)"/><circle cx="400.3" cy="115.9" r="0.8" fill="rgba(80,35,10,.55)"/><circle cx="150.0" cy="127.9" r="0.9" fill="rgba(80,35,10,.55)"/><circle cx="418.6" cy="121.8" r="0.6" fill="rgba(80,35,10,.55)"/><circle cx="305.8" cy="103.4" r="0.5" fill="rgba(80,35,10,.55)"/><circle cx="378.7" cy="128.7" r="0.9" fill="rgba(80,35,10,.55)"/><circle cx="170.6" cy="181.5" r="0.7" fill="rgba(80,35,10,.55)"/><circle cx="68.3" cy="81.7" r="0.8" fill="rgba(80,35,10,.55)"/><circle cx="269.1" cy="184.6" r="0.5" fill="rgba(80,35,10,.55)"/><circle cx="261.3" cy="122.6" r="0.8" fill="rgba(80,35,10,.55)"/><circle cx="61.3" cy="112.6" r="0.8" fill="rgba(80,35,10,.55)"/><circle cx="388.7" cy="92.5" r="0.7" fill="rgba(80,35,10,.55)"/><circle cx="338.0" cy="191.2" r="0.6" fill="rgba(80,35,10,.55)"/><circle cx="53.2" cy="188.5" r="1.0" fill="rgba(80,35,10,.55)"/><circle cx="202.7" cy="86.1" r="1.0" fill="rgba(80,35,10,.55)"/><circle cx="162.9" cy="184.0" r="0.8" fill="rgba(80,35,10,.55)"/><circle cx="346.3" cy="98.4" r="0.9" fill="rgba(80,35,10,.55)"/><circle cx="93.3" cy="126.5" r="0.9" fill="rgba(80,35,10,.55)"/><circle cx="348.3" cy="101.0" r="0.6" fill="rgba(80,35,10,.55)"/><circle cx="167.9" cy="139.6" r="0.7" fill="rgba(80,35,10,.55)"/><circle cx="51.7" cy="108.4" r="0.9" fill="rgba(80,35,10,.55)"/><circle cx="376.9" cy="84.7" r="0.8" fill="rgba(80,35,10,.55)"/><circle cx="318.1" cy="84.4" r="0.9" fill="rgba(80,35,10,.55)"/><circle cx="49.4" cy="148.9" r="0.8" fill="rgba(80,35,10,.55)"/><circle cx="263.4" cy="115.2" r="0.7" fill="rgba(80,35,10,.55)"/><circle cx="244.7" cy="129.0" r="0.8" fill="rgba(80,35,10,.55)"/><circle cx="187.7" cy="130.4" r="0.5" fill="rgba(80,35,10,.55)"/><circle cx="259.9" cy="136.3" r="0.6" fill="rgba(80,35,10,.55)"/><circle cx="320.7" cy="169.7" r="0.7" fill="rgba(80,35,10,.55)"/><circle cx="75.4" cy="134.4" r="0.6" fill="rgba(80,35,10,.55)"/><circle cx="54.0" cy="129.5" r="0.5" fill="rgba(80,35,10,.55)"/><circle cx="185.6" cy="138.7" r="0.5" fill="rgba(80,35,10,.55)"/><circle cx="267.3" cy="89.5" r="0.9" fill="rgba(80,35,10,.55)"/><circle cx="326.6" cy="138.8" r="0.5" fill="rgba(80,35,10,.55)"/><circle cx="211.6" cy="123.5" r="1.0" fill="rgba(80,35,10,.55)"/><circle cx="57.2" cy="178.6" r="1.0" fill="rgba(80,35,10,.55)"/><circle cx="307.5" cy="173.7" r="0.6" fill="rgba(80,35,10,.55)"/><circle cx="412.3" cy="136.6" r="1.0" fill="rgba(80,35,10,.55)"/><circle cx="384.7" cy="99.0" r="0.9" fill="rgba(80,35,10,.55)"/><circle cx="390.8" cy="87.5" r="0.7" fill="rgba(80,35,10,.55)"/><circle cx="317.6" cy="98.3" r="0.9" fill="rgba(80,35,10,.55)"/><circle cx="115.5" cy="173.8" r="0.6" fill="rgba(80,35,10,.55)"/><circle cx="210.9" cy="185.8" r="0.6" fill="rgba(80,35,10,.55)"/><circle cx="110.4" cy="138.2" r="0.7" fill="rgba(80,35,10,.55)"/><circle cx="15.5" cy="100.9" r="0.6" fill="rgba(80,35,10,.55)"/><circle cx="393.3" cy="158.2" r="0.9" fill="rgba(80,35,10,.55)"/><circle cx="70.9" cy="170.3" r="0.6" fill="rgba(80,35,10,.55)"/><circle cx="222.9" cy="153.2" r="0.7" fill="rgba(80,35,10,.55)"/><circle cx="366.6" cy="143.8" r="0.8" fill="rgba(80,35,10,.55)"/><circle cx="370.7" cy="92.0" r="1.0" fill="rgba(80,35,10,.55)"/><circle cx="264.5" cy="125.3" r="0.9" fill="rgba(80,35,10,.55)"/><circle cx="111.2" cy="193.9" r="0.8" fill="rgba(80,35,10,.55)"/><circle cx="151.3" cy="167.9" r="0.7" fill="rgba(80,35,10,.55)"/><circle cx="74.2" cy="165.5" r="0.5" fill="rgba(80,35,10,.55)"/><circle cx="344.3" cy="109.2" r="0.8" fill="rgba(80,35,10,.55)"/><circle cx="413.3" cy="147.4" r="0.8" fill="rgba(80,35,10,.55)"/><circle cx="131.3" cy="80.2" r="0.5" fill="rgba(80,35,10,.55)"/><circle cx="62.7" cy="150.8" r="0.7" fill="rgba(80,35,10,.55)"/><circle cx="215.3" cy="183.0" r="0.6" fill="rgba(80,35,10,.55)"/><circle cx="95.4" cy="155.1" r="0.5" fill="rgba(80,35,10,.55)"/><circle cx="1.1" cy="120.8" r="0.6" fill="rgba(80,35,10,.55)"/><circle cx="150.0" cy="105.8" r="0.8" fill="rgba(80,35,10,.55)"/><circle cx="247.4" cy="103.5" r="0.8" fill="rgba(80,35,10,.55)"/><circle cx="199.5" cy="95.5" r="1.0" fill="rgba(80,35,10,.55)"/><circle cx="102.3" cy="97.2" r="0.5" fill="rgba(80,35,10,.55)"/><circle cx="268.0" cy="180.2" r="0.9" fill="rgba(80,35,10,.55)"/><circle cx="168.8" cy="110.4" r="0.5" fill="rgba(80,35,10,.55)"/><circle cx="270.9" cy="144.7" r="0.7" fill="rgba(80,35,10,.55)"/><circle cx="271.2" cy="131.0" r="1.0" fill="rgba(80,35,10,.55)"/><circle cx="308.1" cy="108.6" r="1.0" fill="rgba(80,35,10,.55)"/><polygon points="0.0,72.0 555.0,169.0 555.0,183.0 0.0,100.0" fill="rgba(80,35,5,.22)" /><polygon points="0.0,72.0 555.0,169.0 555.0,172.0 0.0,77.0" fill="rgba(60,25,5,.35)" /></g><ellipse cx="50" cy="170.5" rx="4.800" ry="1.500" fill="#1c1a1a"/><ellipse cx="53.5" cy="192" rx="4.800" ry="1.500" fill="#1c1a1a"/><ellipse cx="214.5" cy="157" rx="4.800" ry="1.500" fill="#1c1a1a"/><rect x="0" y="196" width="80" height="78" fill="#5f7f3a"/><clipPath id="tc"><rect x="0" y="196" width="80" height="78"/></clipPath><g clip-path="url(#tc)"><g filter="url(#bl)"><circle cx="1.6" cy="237.5" r="2.7" fill="#4c6a2c" opacity=".8"/><circle cx="11.1" cy="267.1" r="1.9" fill="#52702e" opacity=".8"/><circle cx="43.2" cy="269.4" r="2.0" fill="#4c6a2c" opacity=".8"/><circle cx="40.5" cy="246.1" r="3.4" fill="#e3ecc8" opacity=".8"/><circle cx="64.7" cy="209.6" r="2.5" fill="#b9cf7a" opacity=".8"/><circle cx="49.3" cy="273.5" r="3.6" fill="#3f5a28" opacity=".8"/><circle cx="56.7" cy="196.5" r="4.0" fill="#3f5a28" opacity=".8"/><circle cx="4.6" cy="247.1" r="2.1" fill="#8fb050" opacity=".8"/><circle cx="19.4" cy="246.2" r="1.9" fill="#b9cf7a" opacity=".8"/><circle cx="56.4" cy="216.7" r="3.2" fill="#e3ecc8" opacity=".8"/><circle cx="54.2" cy="267.5" r="4.3" fill="#b9cf7a" opacity=".8"/><circle cx="50.6" cy="271.3" r="2.2" fill="#34491f" opacity=".8"/><circle cx="-0.8" cy="216.3" r="2.3" fill="#4c6a2c" opacity=".8"/><circle cx="75.5" cy="254.2" r="2.5" fill="#e3ecc8" opacity=".8"/><circle cx="24.9" cy="214.7" r="4.1" fill="#34491f" opacity=".8"/><circle cx="36.5" cy="261.5" r="3.6" fill="#5d7f35" opacity=".8"/><circle cx="33.9" cy="252.5" r="3.2" fill="#b9cf7a" opacity=".8"/><circle cx="62.7" cy="226.5" r="3.2" fill="#52702e" opacity=".8"/><circle cx="72.7" cy="207.3" r="1.7" fill="#8fb050" opacity=".8"/><circle cx="49.0" cy="208.6" r="4.3" fill="#5d7f35" opacity=".8"/><circle cx="0.5" cy="206.8" r="3.4" fill="#5d7f35" opacity=".8"/><circle cx="55.2" cy="253.5" r="1.8" fill="#52702e" opacity=".8"/><circle cx="60.5" cy="211.5" r="4.3" fill="#34491f" opacity=".8"/><circle cx="71.1" cy="201.1" r="4.0" fill="#e3ecc8" opacity=".8"/><circle cx="6.8" cy="212.0" r="1.9" fill="#5d7f35" opacity=".8"/><circle cx="75.8" cy="267.1" r="3.7" fill="#8fb050" opacity=".8"/><circle cx="65.7" cy="245.3" r="2.4" fill="#8fb050" opacity=".8"/><circle cx="8.9" cy="257.8" r="3.4" fill="#b9cf7a" opacity=".8"/><circle cx="24.2" cy="229.1" r="1.7" fill="#b9cf7a" opacity=".8"/><circle cx="74.3" cy="199.8" r="3.7" fill="#6f8f3e" opacity=".8"/><circle cx="61.1" cy="243.0" r="2.9" fill="#b9cf7a" opacity=".8"/><circle cx="48.7" cy="198.4" r="2.8" fill="#e3ecc8" opacity=".8"/><circle cx="40.5" cy="203.7" r="2.9" fill="#5d7f35" opacity=".8"/><circle cx="42.1" cy="212.9" r="4.0" fill="#8fb050" opacity=".8"/><circle cx="45.1" cy="218.4" r="2.8" fill="#34491f" opacity=".8"/><circle cx="14.6" cy="255.5" r="4.3" fill="#5d7f35" opacity=".8"/><circle cx="26.5" cy="203.5" r="3.5" fill="#9ab858" opacity=".8"/><circle cx="77.3" cy="242.2" r="4.3" fill="#34491f" opacity=".8"/><circle cx="19.4" cy="269.6" r="2.4" fill="#4c6a2c" opacity=".8"/><circle cx="74.9" cy="214.1" r="2.1" fill="#8fb050" opacity=".8"/><circle cx="38.2" cy="273.3" r="3.2" fill="#8fb050" opacity=".8"/><circle cx="49.5" cy="223.7" r="2.7" fill="#e3ecc8" opacity=".8"/><circle cx="71.1" cy="254.1" r="2.8" fill="#5d7f35" opacity=".8"/><circle cx="28.5" cy="219.6" r="2.8" fill="#34491f" opacity=".8"/><circle cx="39.1" cy="225.6" r="4.1" fill="#4c6a2c" opacity=".8"/><circle cx="75.4" cy="205.9" r="3.3" fill="#52702e" opacity=".8"/><circle cx="51.0" cy="223.2" r="2.5" fill="#9ab858" opacity=".8"/><circle cx="69.2" cy="231.1" r="3.2" fill="#6f8f3e" opacity=".8"/><circle cx="11.9" cy="230.2" r="3.8" fill="#52702e" opacity=".8"/><circle cx="16.9" cy="222.1" r="3.4" fill="#4c6a2c" opacity=".8"/><circle cx="39.6" cy="216.9" r="3.7" fill="#52702e" opacity=".8"/><circle cx="10.7" cy="208.2" r="2.3" fill="#6f8f3e" opacity=".8"/><circle cx="47.4" cy="223.2" r="2.3" fill="#4c6a2c" opacity=".8"/><circle cx="19.2" cy="270.5" r="4.4" fill="#9ab858" opacity=".8"/><circle cx="76.9" cy="203.9" r="2.7" fill="#9ab858" opacity=".8"/><circle cx="63.2" cy="253.2" r="2.8" fill="#4c6a2c" opacity=".8"/><circle cx="7.0" cy="267.1" r="2.4" fill="#e3ecc8" opacity=".8"/><circle cx="36.0" cy="197.0" r="4.0" fill="#e3ecc8" opacity=".8"/><circle cx="54.9" cy="235.0" r="3.4" fill="#3f5a28" opacity=".8"/><circle cx="-0.2" cy="216.1" r="3.7" fill="#5d7f35" opacity=".8"/><circle cx="58.8" cy="266.8" r="2.8" fill="#52702e" opacity=".8"/><circle cx="46.2" cy="246.5" r="4.0" fill="#52702e" opacity=".8"/><circle cx="67.9" cy="249.0" r="3.4" fill="#3f5a28" opacity=".8"/><circle cx="33.5" cy="216.3" r="3.6" fill="#e3ecc8" opacity=".8"/><circle cx="17.9" cy="227.2" r="3.6" fill="#9ab858" opacity=".8"/><circle cx="18.5" cy="229.0" r="2.9" fill="#52702e" opacity=".8"/><circle cx="68.4" cy="236.4" r="3.5" fill="#9ab858" opacity=".8"/><circle cx="71.3" cy="221.6" r="1.6" fill="#3f5a28" opacity=".8"/><circle cx="72.5" cy="204.3" r="2.3" fill="#4c6a2c" opacity=".8"/><circle cx="11.2" cy="257.0" r="4.2" fill="#34491f" opacity=".8"/><circle cx="26.6" cy="262.1" r="2.9" fill="#4c6a2c" opacity=".8"/><circle cx="56.8" cy="236.0" r="3.4" fill="#6f8f3e" opacity=".8"/><circle cx="40.8" cy="228.0" r="4.3" fill="#4c6a2c" opacity=".8"/><circle cx="79.2" cy="210.3" r="3.0" fill="#8fb050" opacity=".8"/><circle cx="57.8" cy="243.9" r="3.4" fill="#b9cf7a" opacity=".8"/><circle cx="20.5" cy="227.2" r="1.6" fill="#e3ecc8" opacity=".8"/><circle cx="73.1" cy="245.0" r="3.5" fill="#52702e" opacity=".8"/><circle cx="19.7" cy="213.5" r="3.7" fill="#34491f" opacity=".8"/><circle cx="77.7" cy="273.5" r="4.3" fill="#3f5a28" opacity=".8"/><circle cx="15.4" cy="206.1" r="3.8" fill="#4c6a2c" opacity=".8"/><circle cx="36.5" cy="239.8" r="2.2" fill="#9ab858" opacity=".8"/><circle cx="27.0" cy="245.8" r="3.9" fill="#e3ecc8" opacity=".8"/><circle cx="36.4" cy="219.0" r="3.1" fill="#9ab858" opacity=".8"/><circle cx="61.9" cy="232.6" r="3.8" fill="#4c6a2c" opacity=".8"/><circle cx="19.9" cy="225.3" r="2.3" fill="#e3ecc8" opacity=".8"/><circle cx="53.7" cy="233.6" r="3.9" fill="#b9cf7a" opacity=".8"/><circle cx="27.4" cy="247.0" r="2.5" fill="#3f5a28" opacity=".8"/><circle cx="33.1" cy="245.7" r="3.4" fill="#6f8f3e" opacity=".8"/><circle cx="10.5" cy="219.6" r="2.7" fill="#8fb050" opacity=".8"/><circle cx="65.9" cy="266.7" r="3.8" fill="#9ab858" opacity=".8"/><circle cx="41.5" cy="222.9" r="3.2" fill="#5d7f35" opacity=".8"/><circle cx="15.2" cy="201.6" r="2.4" fill="#52702e" opacity=".8"/><circle cx="6.3" cy="207.1" r="2.3" fill="#3f5a28" opacity=".8"/><circle cx="26.4" cy="207.9" r="4.1" fill="#34491f" opacity=".8"/><circle cx="11.8" cy="265.5" r="3.3" fill="#8fb050" opacity=".8"/><circle cx="52.8" cy="265.7" r="3.8" fill="#b9cf7a" opacity=".8"/><circle cx="14.2" cy="250.0" r="3.1" fill="#3f5a28" opacity=".8"/><circle cx="53.0" cy="205.1" r="1.9" fill="#e3ecc8" opacity=".8"/><circle cx="17.2" cy="206.9" r="3.0" fill="#5d7f35" opacity=".8"/><circle cx="37.7" cy="266.6" r="3.6" fill="#4c6a2c" opacity=".8"/><circle cx="38.9" cy="238.1" r="4.0" fill="#5d7f35" opacity=".8"/><circle cx="11.1" cy="221.0" r="3.5" fill="#3f5a28" opacity=".8"/><circle cx="52.6" cy="261.6" r="2.6" fill="#e3ecc8" opacity=".8"/><circle cx="80.0" cy="248.7" r="2.1" fill="#6f8f3e" opacity=".8"/><circle cx="50.2" cy="198.2" r="3.3" fill="#6f8f3e" opacity=".8"/><circle cx="64.3" cy="203.3" r="3.0" fill="#9ab858" opacity=".8"/><circle cx="0.8" cy="252.0" r="3.4" fill="#6f8f3e" opacity=".8"/><circle cx="5.7" cy="247.4" r="2.6" fill="#34491f" opacity=".8"/><circle cx="43.4" cy="267.2" r="2.4" fill="#6f8f3e" opacity=".8"/><circle cx="32.6" cy="239.2" r="3.9" fill="#b9cf7a" opacity=".8"/><circle cx="27.1" cy="234.5" r="2.5" fill="#b9cf7a" opacity=".8"/><circle cx="69.6" cy="222.9" r="2.2" fill="#3f5a28" opacity=".8"/><circle cx="62.9" cy="221.8" r="2.5" fill="#b9cf7a" opacity=".8"/><circle cx="8.5" cy="271.9" r="1.8" fill="#5d7f35" opacity=".8"/><circle cx="30.7" cy="239.2" r="2.7" fill="#52702e" opacity=".8"/><circle cx="2.1" cy="219.4" r="1.6" fill="#4c6a2c" opacity=".8"/><circle cx="65.4" cy="233.1" r="3.7" fill="#5d7f35" opacity=".8"/><circle cx="62.7" cy="267.0" r="3.3" fill="#52702e" opacity=".8"/><circle cx="10.1" cy="248.5" r="3.5" fill="#8fb050" opacity=".8"/><circle cx="15.4" cy="248.0" r="2.9" fill="#9ab858" opacity=".8"/><circle cx="6.3" cy="210.1" r="1.7" fill="#8fb050" opacity=".8"/><circle cx="73.0" cy="247.1" r="2.6" fill="#9ab858" opacity=".8"/><circle cx="62.5" cy="239.8" r="2.3" fill="#b9cf7a" opacity=".8"/><circle cx="13.2" cy="198.7" r="1.7" fill="#52702e" opacity=".8"/><circle cx="50.6" cy="268.8" r="1.8" fill="#52702e" opacity=".8"/><circle cx="40.8" cy="260.3" r="3.8" fill="#e3ecc8" opacity=".8"/><circle cx="45.2" cy="267.7" r="2.9" fill="#5d7f35" opacity=".8"/><circle cx="53.8" cy="242.3" r="4.4" fill="#9ab858" opacity=".8"/><circle cx="37.0" cy="228.2" r="1.9" fill="#3f5a28" opacity=".8"/><circle cx="15.4" cy="207.8" r="1.6" fill="#5d7f35" opacity=".8"/><circle cx="-1.2" cy="248.2" r="4.4" fill="#8fb050" opacity=".8"/><circle cx="15.9" cy="205.5" r="2.9" fill="#b9cf7a" opacity=".8"/><circle cx="57.0" cy="214.9" r="3.7" fill="#9ab858" opacity=".8"/><circle cx="73.7" cy="224.5" r="3.7" fill="#9ab858" opacity=".8"/><circle cx="57.8" cy="202.6" r="3.4" fill="#3f5a28" opacity=".8"/><circle cx="35.8" cy="268.7" r="2.3" fill="#5d7f35" opacity=".8"/><circle cx="56.8" cy="196.9" r="1.6" fill="#52702e" opacity=".8"/><circle cx="4.5" cy="220.3" r="3.6" fill="#9ab858" opacity=".8"/><circle cx="76.5" cy="261.1" r="3.3" fill="#6f8f3e" opacity=".8"/><circle cx="28.1" cy="240.8" r="2.8" fill="#9ab858" opacity=".8"/><circle cx="9.9" cy="258.2" r="2.6" fill="#9ab858" opacity=".8"/><circle cx="49.6" cy="228.6" r="2.7" fill="#3f5a28" opacity=".8"/><circle cx="75.5" cy="257.2" r="3.2" fill="#b9cf7a" opacity=".8"/><circle cx="21.0" cy="244.5" r="3.4" fill="#52702e" opacity=".8"/><circle cx="25.2" cy="243.3" r="4.3" fill="#9ab858" opacity=".8"/><circle cx="47.3" cy="220.1" r="2.8" fill="#4c6a2c" opacity=".8"/><circle cx="28.9" cy="249.4" r="3.3" fill="#4c6a2c" opacity=".8"/><circle cx="64.2" cy="218.1" r="1.6" fill="#b9cf7a" opacity=".8"/><circle cx="20.0" cy="208.3" r="4.2" fill="#5d7f35" opacity=".8"/><circle cx="21.7" cy="207.0" r="4.1" fill="#52702e" opacity=".8"/></g></g><polyline points="22.0,196.0 20.6,272.0" fill="none" stroke="rgba(60,55,40,.55)" stroke-width="1.1" /><polyline points="31.0,196.0 32.9,272.0" fill="none" stroke="rgba(60,55,40,.55)" stroke-width="1.1" /><polyline points="40.0,196.0 41.2,272.0" fill="none" stroke="rgba(60,55,40,.55)" stroke-width="1.1" /><polyline points="62.0,196.0 62.2,272.0" fill="none" stroke="rgba(60,55,40,.55)" stroke-width="1.1" /><polyline points="68.0,196.0 69.1,272.0" fill="none" stroke="rgba(60,55,40,.55)" stroke-width="1.1" /><rect x="0" y="270" width="40" height="42" fill="#5f7345"/><rect x="0" y="270" width="40" height="2.200" fill="#c9c9c4"/><rect x="0" y="274.500" width="40" height="1.600" fill="#b9b9b4"/><rect x="0" y="306" width="40" height="1.800" fill="#b9b9b4"/><rect x="1" y="276" width="1.300" height="31" fill="#c4c4be"/><rect x="6" y="276" width="1.300" height="31" fill="#c4c4be"/><rect x="9.5" y="276" width="1.300" height="31" fill="#c4c4be"/><rect x="13" y="276" width="1.300" height="31" fill="#c4c4be"/><rect x="16.5" y="276" width="1.300" height="31" fill="#c4c4be"/><rect x="20" y="276" width="1.300" height="31" fill="#c4c4be"/><rect x="23.5" y="276" width="1.300" height="31" fill="#c4c4be"/><rect x="27" y="276" width="1.300" height="31" fill="#c4c4be"/><rect x="30.5" y="276" width="1.300" height="31" fill="#c4c4be"/><rect x="34" y="276" width="1.300" height="31" fill="#c4c4be"/><rect x="37.5" y="276" width="1.300" height="31" fill="#c4c4be"/><rect x="4.500" y="270" width="2.200" height="42" fill="#cfcfca"/><rect x="0" y="311" width="40" height="13" fill="#c9bda8"/><rect x="0" y="322" width="555" height="74" fill="url(#floor)"/><polygon points="0.0,322.0 72.0,322.0 72.0,396.0 0.0,396.0" fill="#c9bcb2" /><polygon points="0.0,322.0 40.0,322.0 38.0,334.0 0.0,336.0" fill="#d8cdbc" /><polygon points="82.0,170.6 231.0,184.0 231.0,191.0 82.0,179.0" fill="#2f6f49" /><polygon points="79.0,196.0 82.0,179.0 175.0,186.5 175.0,316.0 72.0,316.0" fill="#aaa092" /><polygon points="79.0,196.0 88.0,196.0 79.5,316.0 72.0,316.0" fill="#9d9486" /><polyline points="86.0,200.0 174.6,200.6" fill="none" stroke="rgba(80,72,62,.28)" stroke-width="0.7" /><polyline points="86.0,208.6 174.6,209.2" fill="none" stroke="rgba(80,72,62,.28)" stroke-width="0.7" /><polyline points="86.0,217.2 174.6,217.8" fill="none" stroke="rgba(80,72,62,.28)" stroke-width="0.7" /><polyline points="86.0,225.8 174.6,226.4" fill="none" stroke="rgba(80,72,62,.28)" stroke-width="0.7" /><polyline points="86.0,234.4 174.6,235.0" fill="none" stroke="rgba(80,72,62,.28)" stroke-width="0.7" /><polyline points="86.0,243.0 174.6,243.6" fill="none" stroke="rgba(80,72,62,.28)" stroke-width="0.7" /><polyline points="86.0,251.6 174.6,252.2" fill="none" stroke="rgba(80,72,62,.28)" stroke-width="0.7" /><polyline points="86.0,260.2 174.6,260.8" fill="none" stroke="rgba(80,72,62,.28)" stroke-width="0.7" /><polyline points="86.0,268.8 174.6,269.4" fill="none" stroke="rgba(80,72,62,.28)" stroke-width="0.7" /><polyline points="86.0,277.4 174.6,278.0" fill="none" stroke="rgba(80,72,62,.28)" stroke-width="0.7" /><polyline points="86.0,286.0 174.6,286.6" fill="none" stroke="rgba(80,72,62,.28)" stroke-width="0.7" /><polyline points="86.0,294.6 174.6,295.2" fill="none" stroke="rgba(80,72,62,.28)" stroke-width="0.7" /><polyline points="86.0,303.2 174.6,303.8" fill="none" stroke="rgba(80,72,62,.28)" stroke-width="0.7" /><polyline points="86.0,311.8 174.6,312.4" fill="none" stroke="rgba(80,72,62,.28)" stroke-width="0.7" /><polygon points="174.6,186.5 211.6,189.5 211.6,312.0 174.6,312.0" fill="url(#doorgl)" /><polygon points="176.0,200.0 194.0,200.0 194.0,224.0 176.0,224.0" fill="rgba(235,238,232,.75)" /><polygon points="200.0,208.0 205.0,208.0 205.0,290.0 200.0,290.0" fill="rgba(40,42,40,.7)" /><polygon points="211.6,189.5 227.5,191.0 227.5,312.0 211.6,312.0" fill="#989184" /><polygon points="227.5,191.0 231.0,184.0 284.0,157.0 287.0,145.5 300.0,147.0 300.0,330.0 227.5,316.0" fill="#1f4d33" /><polygon points="236.0,193.0 250.0,186.0 250.0,312.0 236.0,308.0" fill="#56735e" /><polygon points="256.0,183.0 270.0,176.0 270.0,318.0 256.0,314.0" fill="#4d6a56" /><polygon points="283.0,157.0 300.0,150.0 300.0,330.0 283.0,325.0" fill="#3f7d58" /><polyline points="284.0,160.0 300.0,158.0" fill="none" stroke="rgba(15,50,30,.4)" stroke-width="0.7" /><polyline points="284.0,167.6 300.0,165.6" fill="none" stroke="rgba(15,50,30,.4)" stroke-width="0.7" /><polyline points="284.0,175.2 300.0,173.2" fill="none" stroke="rgba(15,50,30,.4)" stroke-width="0.7" /><polyline points="284.0,182.8 300.0,180.8" fill="none" stroke="rgba(15,50,30,.4)" stroke-width="0.7" /><polyline points="284.0,190.4 300.0,188.4" fill="none" stroke="rgba(15,50,30,.4)" stroke-width="0.7" /><polyline points="284.0,198.0 300.0,196.0" fill="none" stroke="rgba(15,50,30,.4)" stroke-width="0.7" /><polyline points="284.0,205.6 300.0,203.6" fill="none" stroke="rgba(15,50,30,.4)" stroke-width="0.7" /><polyline points="284.0,213.2 300.0,211.2" fill="none" stroke="rgba(15,50,30,.4)" stroke-width="0.7" /><polyline points="284.0,220.8 300.0,218.8" fill="none" stroke="rgba(15,50,30,.4)" stroke-width="0.7" /><polyline points="284.0,228.4 300.0,226.4" fill="none" stroke="rgba(15,50,30,.4)" stroke-width="0.7" /><polyline points="284.0,236.0 300.0,234.0" fill="none" stroke="rgba(15,50,30,.4)" stroke-width="0.7" /><polyline points="284.0,243.6 300.0,241.6" fill="none" stroke="rgba(15,50,30,.4)" stroke-width="0.7" /><polyline points="284.0,251.2 300.0,249.2" fill="none" stroke="rgba(15,50,30,.4)" stroke-width="0.7" /><polyline points="284.0,258.8 300.0,256.8" fill="none" stroke="rgba(15,50,30,.4)" stroke-width="0.7" /><polyline points="284.0,266.4 300.0,264.4" fill="none" stroke="rgba(15,50,30,.4)" stroke-width="0.7" /><polyline points="284.0,274.0 300.0,272.0" fill="none" stroke="rgba(15,50,30,.4)" stroke-width="0.7" /><polyline points="284.0,281.6 300.0,279.6" fill="none" stroke="rgba(15,50,30,.4)" stroke-width="0.7" /><polyline points="284.0,289.2 300.0,287.2" fill="none" stroke="rgba(15,50,30,.4)" stroke-width="0.7" /><polyline points="284.0,296.8 300.0,294.8" fill="none" stroke="rgba(15,50,30,.4)" stroke-width="0.7" /><polyline points="284.0,304.4 300.0,302.4" fill="none" stroke="rgba(15,50,30,.4)" stroke-width="0.7" /><polyline points="284.0,312.0 300.0,310.0" fill="none" stroke="rgba(15,50,30,.4)" stroke-width="0.7" /><polyline points="284.0,319.6 300.0,317.6" fill="none" stroke="rgba(15,50,30,.4)" stroke-width="0.7" /><polygon points="287.0,145.5 555.0,189.0 555.0,316.0 287.0,330.0" fill="#25603e" /><polygon points="287.0,145.5 308.0,149.0 308.0,329.0 287.0,330.0" fill="#2a6844" /><polyline points="289.0,150.0 307.0,151.0" fill="none" stroke="rgba(10,45,25,.45)" stroke-width="0.7" /><polyline points="289.0,157.4 307.0,158.4" fill="none" stroke="rgba(10,45,25,.45)" stroke-width="0.7" /><polyline points="289.0,164.8 307.0,165.8" fill="none" stroke="rgba(10,45,25,.45)" stroke-width="0.7" /><polyline points="289.0,172.2 307.0,173.2" fill="none" stroke="rgba(10,45,25,.45)" stroke-width="0.7" /><polyline points="289.0,179.6 307.0,180.6" fill="none" stroke="rgba(10,45,25,.45)" stroke-width="0.7" /><polyline points="289.0,187.0 307.0,188.0" fill="none" stroke="rgba(10,45,25,.45)" stroke-width="0.7" /><polyline points="289.0,194.4 307.0,195.4" fill="none" stroke="rgba(10,45,25,.45)" stroke-width="0.7" /><polyline points="289.0,201.8 307.0,202.8" fill="none" stroke="rgba(10,45,25,.45)" stroke-width="0.7" /><polyline points="289.0,209.2 307.0,210.2" fill="none" stroke="rgba(10,45,25,.45)" stroke-width="0.7" /><polyline points="289.0,216.6 307.0,217.6" fill="none" stroke="rgba(10,45,25,.45)" stroke-width="0.7" /><polyline points="289.0,224.0 307.0,225.0" fill="none" stroke="rgba(10,45,25,.45)" stroke-width="0.7" /><polyline points="289.0,231.4 307.0,232.4" fill="none" stroke="rgba(10,45,25,.45)" stroke-width="0.7" /><polyline points="289.0,238.8 307.0,239.8" fill="none" stroke="rgba(10,45,25,.45)" stroke-width="0.7" /><polyline points="289.0,246.2 307.0,247.2" fill="none" stroke="rgba(10,45,25,.45)" stroke-width="0.7" /><polyline points="289.0,253.6 307.0,254.6" fill="none" stroke="rgba(10,45,25,.45)" stroke-width="0.7" /><polyline points="289.0,261.0 307.0,262.0" fill="none" stroke="rgba(10,45,25,.45)" stroke-width="0.7" /><polyline points="289.0,268.4 307.0,269.4" fill="none" stroke="rgba(10,45,25,.45)" stroke-width="0.7" /><polyline points="289.0,275.8 307.0,276.8" fill="none" stroke="rgba(10,45,25,.45)" stroke-width="0.7" /><polyline points="289.0,283.2 307.0,284.2" fill="none" stroke="rgba(10,45,25,.45)" stroke-width="0.7" /><polyline points="289.0,290.6 307.0,291.6" fill="none" stroke="rgba(10,45,25,.45)" stroke-width="0.7" /><polyline points="289.0,298.0 307.0,299.0" fill="none" stroke="rgba(10,45,25,.45)" stroke-width="0.7" /><polyline points="289.0,305.4 307.0,306.4" fill="none" stroke="rgba(10,45,25,.45)" stroke-width="0.7" /><polyline points="289.0,312.8 307.0,313.8" fill="none" stroke="rgba(10,45,25,.45)" stroke-width="0.7" /><polyline points="289.0,320.2 307.0,321.2" fill="none" stroke="rgba(10,45,25,.45)" stroke-width="0.7" /><polygon points="550.0,188.0 555.0,189.0 555.0,316.0 550.0,316.0" fill="#e4e4e4" /><polygon points="315.2,174.6 352.2,179.2 352.2,317.3 315.2,319.0" fill="url(#glassL)" stroke="#1b3628" stroke-width="1.600"/><clipPath id="lw0"><polygon points="315.2,174.6 352.2,179.2 352.2,317.3 315.2,319.0" fill="#000" /></clipPath><g clip-path="url(#lw0)"><g filter="url(#bl)"><circle cx="333.7" cy="220.1" r="3.5" fill="#2a3d1b" opacity=".7"/><circle cx="344.7" cy="191.7" r="4.1" fill="#3c5423" opacity=".7"/><circle cx="326.7" cy="179.5" r="3.1" fill="#3c5423" opacity=".7"/><circle cx="349.5" cy="224.5" r="2.0" fill="#31461d" opacity=".7"/><circle cx="332.2" cy="182.1" r="4.3" fill="#76923f" opacity=".7"/><circle cx="323.8" cy="223.9" r="4.5" fill="#c9d39a" opacity=".7"/><circle cx="327.1" cy="217.6" r="2.6" fill="#3c5423" opacity=".7"/><circle cx="322.3" cy="190.0" r="4.0" fill="#a3b565" opacity=".7"/><circle cx="336.6" cy="205.1" r="4.2" fill="#8ca64d" opacity=".7"/><circle cx="324.3" cy="253.0" r="3.4" fill="#76923f" opacity=".7"/><circle cx="329.0" cy="214.0" r="2.2" fill="#a3b565" opacity=".7"/><circle cx="337.3" cy="203.9" r="3.5" fill="#46602a" opacity=".7"/><circle cx="318.7" cy="192.0" r="4.4" fill="#2a3d1b" opacity=".7"/><circle cx="336.9" cy="192.8" r="4.6" fill="#5d7a33" opacity=".7"/><circle cx="331.0" cy="255.1" r="4.1" fill="#8ca64d" opacity=".7"/><circle cx="324.6" cy="177.8" r="2.6" fill="#8ca64d" opacity=".7"/><circle cx="329.2" cy="177.0" r="2.1" fill="#a3b565" opacity=".7"/><circle cx="347.4" cy="213.6" r="4.7" fill="#76923f" opacity=".7"/><circle cx="347.1" cy="229.0" r="4.6" fill="#76923f" opacity=".7"/><circle cx="324.7" cy="222.6" r="3.8" fill="#c9d39a" opacity=".7"/><circle cx="329.7" cy="212.7" r="2.4" fill="#3c5423" opacity=".7"/><circle cx="351.9" cy="193.5" r="2.1" fill="#5d7a33" opacity=".7"/><circle cx="350.0" cy="179.7" r="3.5" fill="#46602a" opacity=".7"/><circle cx="346.2" cy="178.6" r="4.2" fill="#2a3d1b" opacity=".7"/><circle cx="317.3" cy="186.9" r="4.1" fill="#3c5423" opacity=".7"/><circle cx="340.2" cy="200.0" r="3.7" fill="#76923f" opacity=".7"/><circle cx="332.6" cy="206.2" r="3.1" fill="#a3b565" opacity=".7"/><circle cx="333.0" cy="189.0" r="2.7" fill="#8ca64d" opacity=".7"/><circle cx="349.0" cy="250.5" r="3.3" fill="#3c5423" opacity=".7"/><circle cx="344.8" cy="188.0" r="4.3" fill="#76923f" opacity=".7"/><circle cx="349.8" cy="248.3" r="4.5" fill="#8ca64d" opacity=".7"/><circle cx="344.0" cy="256.1" r="4.6" fill="#31461d" opacity=".7"/><circle cx="346.4" cy="228.0" r="3.3" fill="#a3b565" opacity=".7"/><circle cx="327.1" cy="194.5" r="2.3" fill="#a3b565" opacity=".7"/><circle cx="320.5" cy="193.5" r="2.2" fill="#2a3d1b" opacity=".7"/><circle cx="335.7" cy="186.9" r="4.4" fill="#5d7a33" opacity=".7"/><circle cx="330.7" cy="195.6" r="2.1" fill="#5d7a33" opacity=".7"/><circle cx="327.6" cy="188.9" r="3.4" fill="#a3b565" opacity=".7"/><circle cx="332.1" cy="215.6" r="2.4" fill="#c9d39a" opacity=".7"/><circle cx="317.3" cy="250.7" r="3.9" fill="#3c5423" opacity=".7"/></g><rect x="315.2" y="286.9907423580786" width="37.0" height="14" fill="rgba(150,150,130,.55)"/><rect x="315.2" y="299.9907423580786" width="37.0" height="20" fill="rgba(175,172,158,.6)"/></g><polygon points="366.8,181.0 398.5,185.0 398.5,315.1 366.8,316.6" fill="url(#glassL)" stroke="#1b3628" stroke-width="1.600"/><clipPath id="lw1"><polygon points="366.8,181.0 398.5,185.0 398.5,315.1 366.8,316.6" fill="#000" /></clipPath><g clip-path="url(#lw1)"><g filter="url(#bl)"><circle cx="384.6" cy="252.0" r="2.3" fill="#3c5423" opacity=".7"/><circle cx="397.6" cy="217.7" r="2.7" fill="#3c5423" opacity=".7"/><circle cx="396.1" cy="189.3" r="2.8" fill="#8ca64d" opacity=".7"/><circle cx="368.6" cy="242.8" r="2.8" fill="#46602a" opacity=".7"/><circle cx="380.8" cy="224.2" r="3.4" fill="#2a3d1b" opacity=".7"/><circle cx="366.9" cy="251.8" r="3.5" fill="#8ca64d" opacity=".7"/><circle cx="378.2" cy="184.5" r="3.1" fill="#5d7a33" opacity=".7"/><circle cx="384.9" cy="192.8" r="2.5" fill="#3c5423" opacity=".7"/><circle cx="389.4" cy="197.7" r="2.2" fill="#76923f" opacity=".7"/><circle cx="395.0" cy="243.1" r="4.1" fill="#8ca64d" opacity=".7"/><circle cx="373.3" cy="233.1" r="4.0" fill="#3c5423" opacity=".7"/><circle cx="385.3" cy="198.2" r="2.2" fill="#c9d39a" opacity=".7"/><circle cx="379.7" cy="242.4" r="2.2" fill="#a3b565" opacity=".7"/><circle cx="377.4" cy="252.6" r="4.4" fill="#2a3d1b" opacity=".7"/><circle cx="369.7" cy="215.8" r="4.1" fill="#8ca64d" opacity=".7"/><circle cx="394.4" cy="203.7" r="2.5" fill="#a3b565" opacity=".7"/><circle cx="368.0" cy="240.7" r="3.6" fill="#46602a" opacity=".7"/><circle cx="378.1" cy="260.3" r="4.7" fill="#76923f" opacity=".7"/><circle cx="370.6" cy="241.8" r="4.3" fill="#a3b565" opacity=".7"/><circle cx="391.5" cy="254.8" r="3.6" fill="#46602a" opacity=".7"/><circle cx="376.0" cy="190.2" r="4.0" fill="#2a3d1b" opacity=".7"/><circle cx="383.1" cy="226.1" r="3.5" fill="#46602a" opacity=".7"/><circle cx="374.5" cy="188.6" r="3.7" fill="#8ca64d" opacity=".7"/><circle cx="370.1" cy="202.3" r="4.3" fill="#46602a" opacity=".7"/><circle cx="367.4" cy="259.8" r="4.1" fill="#5d7a33" opacity=".7"/><circle cx="367.4" cy="232.0" r="3.6" fill="#c9d39a" opacity=".7"/><circle cx="374.4" cy="218.8" r="3.0" fill="#76923f" opacity=".7"/><circle cx="389.5" cy="184.9" r="2.3" fill="#2a3d1b" opacity=".7"/><circle cx="385.4" cy="245.8" r="2.3" fill="#76923f" opacity=".7"/><circle cx="379.7" cy="192.7" r="3.7" fill="#3c5423" opacity=".7"/><circle cx="371.5" cy="229.7" r="4.1" fill="#8ca64d" opacity=".7"/><circle cx="396.9" cy="182.6" r="3.8" fill="#31461d" opacity=".7"/><circle cx="385.7" cy="232.3" r="2.1" fill="#46602a" opacity=".7"/><circle cx="391.4" cy="209.8" r="2.7" fill="#a3b565" opacity=".7"/><circle cx="389.5" cy="252.7" r="3.6" fill="#a3b565" opacity=".7"/><circle cx="392.6" cy="253.1" r="2.1" fill="#c9d39a" opacity=".7"/><circle cx="371.4" cy="238.8" r="3.0" fill="#31461d" opacity=".7"/><circle cx="387.8" cy="182.0" r="2.3" fill="#8ca64d" opacity=".7"/><circle cx="369.0" cy="217.8" r="3.4" fill="#46602a" opacity=".7"/><circle cx="373.9" cy="216.8" r="3.1" fill="#2a3d1b" opacity=".7"/></g><rect x="366.8" y="284.6022707423581" width="31.69999999999999" height="14" fill="rgba(150,150,130,.55)"/><rect x="366.8" y="297.6022707423581" width="31.69999999999999" height="20" fill="rgba(175,172,158,.6)"/></g><polygon points="413.0,186.8 441.5,190.3 441.5,313.1 413.0,314.5" fill="url(#glassL)" stroke="#1b3628" stroke-width="1.600"/><clipPath id="lw2"><polygon points="413.0,186.8 441.5,190.3 441.5,313.1 413.0,314.5" fill="#000" /></clipPath><g clip-path="url(#lw2)"><g filter="url(#bl)"><circle cx="431.0" cy="255.5" r="4.5" fill="#46602a" opacity=".7"/><circle cx="414.0" cy="241.3" r="2.7" fill="#5d7a33" opacity=".7"/><circle cx="430.9" cy="255.3" r="2.1" fill="#76923f" opacity=".7"/><circle cx="420.1" cy="231.0" r="3.2" fill="#46602a" opacity=".7"/><circle cx="421.2" cy="212.7" r="3.8" fill="#76923f" opacity=".7"/><circle cx="414.7" cy="268.3" r="4.6" fill="#5d7a33" opacity=".7"/><circle cx="415.4" cy="236.9" r="4.6" fill="#2a3d1b" opacity=".7"/><circle cx="416.5" cy="197.9" r="2.8" fill="#31461d" opacity=".7"/><circle cx="429.5" cy="210.1" r="4.1" fill="#c9d39a" opacity=".7"/><circle cx="421.2" cy="225.4" r="3.9" fill="#3c5423" opacity=".7"/><circle cx="431.5" cy="203.9" r="4.0" fill="#2a3d1b" opacity=".7"/><circle cx="438.4" cy="212.6" r="3.3" fill="#5d7a33" opacity=".7"/><circle cx="413.9" cy="215.1" r="2.5" fill="#c9d39a" opacity=".7"/><circle cx="423.9" cy="236.5" r="2.0" fill="#a3b565" opacity=".7"/><circle cx="417.6" cy="267.7" r="2.9" fill="#a3b565" opacity=".7"/><circle cx="427.0" cy="211.0" r="4.8" fill="#5d7a33" opacity=".7"/><circle cx="414.6" cy="188.6" r="3.5" fill="#a3b565" opacity=".7"/><circle cx="425.5" cy="192.0" r="3.1" fill="#2a3d1b" opacity=".7"/><circle cx="423.1" cy="251.6" r="3.5" fill="#8ca64d" opacity=".7"/><circle cx="424.9" cy="243.6" r="2.4" fill="#3c5423" opacity=".7"/><circle cx="430.6" cy="259.0" r="4.3" fill="#c9d39a" opacity=".7"/><circle cx="415.7" cy="259.5" r="4.6" fill="#2a3d1b" opacity=".7"/><circle cx="420.7" cy="240.4" r="3.8" fill="#8ca64d" opacity=".7"/><circle cx="424.8" cy="195.5" r="3.1" fill="#c9d39a" opacity=".7"/><circle cx="429.7" cy="229.1" r="4.7" fill="#8ca64d" opacity=".7"/><circle cx="424.9" cy="253.4" r="4.4" fill="#76923f" opacity=".7"/><circle cx="423.8" cy="225.2" r="3.3" fill="#a3b565" opacity=".7"/><circle cx="421.3" cy="220.0" r="3.6" fill="#31461d" opacity=".7"/><circle cx="431.5" cy="187.3" r="4.1" fill="#2a3d1b" opacity=".7"/><circle cx="423.8" cy="212.3" r="3.5" fill="#8ca64d" opacity=".7"/><circle cx="425.4" cy="218.8" r="2.6" fill="#a3b565" opacity=".7"/><circle cx="422.2" cy="258.4" r="4.3" fill="#a3b565" opacity=".7"/><circle cx="418.8" cy="223.0" r="4.5" fill="#46602a" opacity=".7"/><circle cx="413.7" cy="208.6" r="4.5" fill="#5d7a33" opacity=".7"/><circle cx="439.2" cy="252.5" r="3.5" fill="#31461d" opacity=".7"/><circle cx="427.7" cy="230.7" r="3.9" fill="#31461d" opacity=".7"/><circle cx="426.2" cy="190.2" r="3.9" fill="#2a3d1b" opacity=".7"/><circle cx="440.0" cy="244.3" r="3.5" fill="#76923f" opacity=".7"/><circle cx="424.7" cy="229.3" r="3.8" fill="#8ca64d" opacity=".7"/><circle cx="438.1" cy="268.7" r="3.4" fill="#2a3d1b" opacity=".7"/></g><rect x="413" y="282.46375545851527" width="28.5" height="14" fill="rgba(150,150,130,.55)"/><rect x="413" y="295.46375545851527" width="28.5" height="20" fill="rgba(175,172,158,.6)"/></g><polygon points="452.8,191.7 478.5,194.9 478.5,311.4 452.8,312.6" fill="url(#glassL)" stroke="#1b3628" stroke-width="1.600"/><clipPath id="lw3"><polygon points="452.8,191.7 478.5,194.9 478.5,311.4 452.8,312.6" fill="#000" /></clipPath><g clip-path="url(#lw3)"><g filter="url(#bl)"><circle cx="472.5" cy="268.1" r="3.6" fill="#c9d39a" opacity=".7"/><circle cx="472.0" cy="199.5" r="3.0" fill="#a3b565" opacity=".7"/><circle cx="477.9" cy="261.9" r="3.4" fill="#76923f" opacity=".7"/><circle cx="469.7" cy="216.8" r="3.0" fill="#c9d39a" opacity=".7"/><circle cx="475.6" cy="227.5" r="2.4" fill="#5d7a33" opacity=".7"/><circle cx="473.8" cy="209.4" r="4.5" fill="#31461d" opacity=".7"/><circle cx="457.5" cy="245.2" r="3.7" fill="#a3b565" opacity=".7"/><circle cx="467.4" cy="245.4" r="4.0" fill="#31461d" opacity=".7"/><circle cx="453.1" cy="191.9" r="4.0" fill="#c9d39a" opacity=".7"/><circle cx="452.9" cy="217.6" r="4.4" fill="#46602a" opacity=".7"/><circle cx="470.0" cy="208.4" r="3.4" fill="#c9d39a" opacity=".7"/><circle cx="467.4" cy="265.7" r="4.5" fill="#c9d39a" opacity=".7"/><circle cx="478.4" cy="240.5" r="3.2" fill="#76923f" opacity=".7"/><circle cx="456.5" cy="235.8" r="3.4" fill="#46602a" opacity=".7"/><circle cx="455.4" cy="206.2" r="3.5" fill="#2a3d1b" opacity=".7"/><circle cx="468.6" cy="260.3" r="2.2" fill="#46602a" opacity=".7"/><circle cx="470.4" cy="240.9" r="2.4" fill="#3c5423" opacity=".7"/><circle cx="461.9" cy="206.1" r="2.7" fill="#76923f" opacity=".7"/><circle cx="474.9" cy="272.2" r="2.2" fill="#3c5423" opacity=".7"/><circle cx="464.4" cy="224.5" r="2.2" fill="#31461d" opacity=".7"/><circle cx="467.8" cy="273.3" r="3.2" fill="#3c5423" opacity=".7"/><circle cx="459.2" cy="195.4" r="4.6" fill="#8ca64d" opacity=".7"/><circle cx="460.9" cy="268.1" r="4.3" fill="#5d7a33" opacity=".7"/><circle cx="463.6" cy="213.1" r="4.5" fill="#76923f" opacity=".7"/><circle cx="459.0" cy="224.8" r="4.0" fill="#3c5423" opacity=".7"/><circle cx="463.4" cy="225.6" r="4.0" fill="#46602a" opacity=".7"/><circle cx="473.2" cy="212.4" r="2.5" fill="#a3b565" opacity=".7"/><circle cx="462.5" cy="192.3" r="4.5" fill="#31461d" opacity=".7"/><circle cx="467.2" cy="201.5" r="3.5" fill="#31461d" opacity=".7"/><circle cx="461.4" cy="247.0" r="4.7" fill="#31461d" opacity=".7"/><circle cx="474.0" cy="221.5" r="2.7" fill="#3c5423" opacity=".7"/><circle cx="464.8" cy="221.0" r="3.2" fill="#5d7a33" opacity=".7"/><circle cx="469.9" cy="220.7" r="2.4" fill="#8ca64d" opacity=".7"/><circle cx="455.2" cy="214.6" r="4.3" fill="#8ca64d" opacity=".7"/><circle cx="467.1" cy="231.4" r="4.2" fill="#3c5423" opacity=".7"/><circle cx="456.9" cy="221.7" r="4.0" fill="#31461d" opacity=".7"/><circle cx="469.0" cy="241.1" r="2.8" fill="#2a3d1b" opacity=".7"/><circle cx="465.8" cy="211.0" r="3.3" fill="#8ca64d" opacity=".7"/><circle cx="477.0" cy="276.5" r="3.7" fill="#2a3d1b" opacity=".7"/><circle cx="467.9" cy="223.0" r="2.7" fill="#c9d39a" opacity=".7"/></g><rect x="452.8" y="280.62148471615717" width="25.69999999999999" height="14" fill="rgba(150,150,130,.55)"/><rect x="452.8" y="293.62148471615717" width="25.69999999999999" height="20" fill="rgba(175,172,158,.6)"/></g><polygon points="487.8,196.0 513.0,199.2 513.0,309.8 487.8,311.0" fill="url(#glassL)" stroke="#1b3628" stroke-width="1.600"/><clipPath id="lw4"><polygon points="487.8,196.0 513.0,199.2 513.0,309.8 487.8,311.0" fill="#000" /></clipPath><g clip-path="url(#lw4)"><g filter="url(#bl)"><circle cx="493.2" cy="270.2" r="2.3" fill="#c9d39a" opacity=".7"/><circle cx="490.1" cy="268.4" r="4.1" fill="#31461d" opacity=".7"/><circle cx="488.5" cy="257.1" r="2.4" fill="#46602a" opacity=".7"/><circle cx="497.6" cy="203.3" r="2.5" fill="#3c5423" opacity=".7"/><circle cx="495.9" cy="252.4" r="2.3" fill="#c9d39a" opacity=".7"/><circle cx="510.8" cy="264.5" r="4.1" fill="#3c5423" opacity=".7"/><circle cx="489.5" cy="222.5" r="2.6" fill="#8ca64d" opacity=".7"/><circle cx="508.4" cy="229.9" r="3.0" fill="#2a3d1b" opacity=".7"/><circle cx="507.3" cy="271.1" r="4.4" fill="#8ca64d" opacity=".7"/><circle cx="511.4" cy="211.0" r="3.0" fill="#a3b565" opacity=".7"/><circle cx="510.4" cy="198.2" r="4.0" fill="#2a3d1b" opacity=".7"/><circle cx="494.1" cy="268.0" r="3.0" fill="#76923f" opacity=".7"/><circle cx="492.4" cy="205.8" r="4.6" fill="#3c5423" opacity=".7"/><circle cx="505.8" cy="199.5" r="2.1" fill="#8ca64d" opacity=".7"/><circle cx="498.7" cy="260.4" r="2.4" fill="#46602a" opacity=".7"/><circle cx="501.7" cy="249.5" r="4.6" fill="#3c5423" opacity=".7"/><circle cx="502.2" cy="256.9" r="2.7" fill="#31461d" opacity=".7"/><circle cx="504.7" cy="244.9" r="4.6" fill="#76923f" opacity=".7"/><circle cx="508.8" cy="262.0" r="2.8" fill="#46602a" opacity=".7"/><circle cx="509.9" cy="245.8" r="3.9" fill="#3c5423" opacity=".7"/><circle cx="505.0" cy="199.2" r="2.9" fill="#a3b565" opacity=".7"/><circle cx="506.7" cy="203.4" r="3.9" fill="#31461d" opacity=".7"/><circle cx="513.0" cy="248.3" r="2.6" fill="#c9d39a" opacity=".7"/><circle cx="490.1" cy="276.5" r="3.2" fill="#a3b565" opacity=".7"/><circle cx="505.2" cy="258.8" r="4.3" fill="#2a3d1b" opacity=".7"/><circle cx="500.6" cy="253.5" r="2.6" fill="#c9d39a" opacity=".7"/><circle cx="509.1" cy="262.2" r="3.4" fill="#3c5423" opacity=".7"/><circle cx="488.9" cy="255.8" r="4.3" fill="#5d7a33" opacity=".7"/><circle cx="492.2" cy="209.9" r="4.2" fill="#3c5423" opacity=".7"/><circle cx="501.5" cy="217.3" r="2.2" fill="#a3b565" opacity=".7"/><circle cx="496.6" cy="203.9" r="3.8" fill="#8ca64d" opacity=".7"/><circle cx="491.2" cy="256.1" r="3.9" fill="#3c5423" opacity=".7"/><circle cx="505.6" cy="196.5" r="3.9" fill="#8ca64d" opacity=".7"/><circle cx="511.4" cy="225.9" r="2.8" fill="#8ca64d" opacity=".7"/><circle cx="502.6" cy="216.5" r="3.8" fill="#76923f" opacity=".7"/><circle cx="501.6" cy="260.7" r="2.5" fill="#8ca64d" opacity=".7"/><circle cx="502.9" cy="235.2" r="4.1" fill="#3c5423" opacity=".7"/><circle cx="490.7" cy="220.6" r="3.0" fill="#3c5423" opacity=".7"/><circle cx="488.9" cy="272.2" r="2.9" fill="#76923f" opacity=".7"/><circle cx="505.5" cy="234.1" r="2.3" fill="#a3b565" opacity=".7"/></g><rect x="487.8" y="279.00139737991265" width="25.19999999999999" height="14" fill="rgba(150,150,130,.55)"/><rect x="487.8" y="292.00139737991265" width="25.19999999999999" height="20" fill="rgba(175,172,158,.6)"/></g><polygon points="519.6,200.0 544.0,203.0 544.0,308.4 519.6,309.5" fill="url(#glassL)" stroke="#1b3628" stroke-width="1.600"/><clipPath id="lw5"><polygon points="519.6,200.0 544.0,203.0 544.0,308.4 519.6,309.5" fill="#000" /></clipPath><g clip-path="url(#lw5)"><g filter="url(#bl)"><circle cx="530.5" cy="248.4" r="2.8" fill="#c9d39a" opacity=".7"/><circle cx="521.4" cy="200.9" r="4.8" fill="#2a3d1b" opacity=".7"/><circle cx="521.6" cy="260.9" r="4.7" fill="#5d7a33" opacity=".7"/><circle cx="522.3" cy="241.5" r="3.2" fill="#3c5423" opacity=".7"/><circle cx="538.7" cy="227.3" r="3.0" fill="#76923f" opacity=".7"/><circle cx="535.3" cy="253.3" r="4.6" fill="#5d7a33" opacity=".7"/><circle cx="535.5" cy="206.6" r="4.1" fill="#46602a" opacity=".7"/><circle cx="538.5" cy="271.3" r="2.8" fill="#8ca64d" opacity=".7"/><circle cx="543.1" cy="244.6" r="4.5" fill="#8ca64d" opacity=".7"/><circle cx="522.1" cy="261.1" r="2.9" fill="#a3b565" opacity=".7"/><circle cx="528.9" cy="255.0" r="3.0" fill="#3c5423" opacity=".7"/><circle cx="528.6" cy="246.8" r="3.0" fill="#5d7a33" opacity=".7"/><circle cx="525.4" cy="203.5" r="3.6" fill="#31461d" opacity=".7"/><circle cx="541.7" cy="280.3" r="3.4" fill="#2a3d1b" opacity=".7"/><circle cx="537.4" cy="284.6" r="3.7" fill="#76923f" opacity=".7"/><circle cx="523.1" cy="219.3" r="2.4" fill="#31461d" opacity=".7"/><circle cx="521.8" cy="203.4" r="3.2" fill="#3c5423" opacity=".7"/><circle cx="524.9" cy="231.6" r="2.1" fill="#c9d39a" opacity=".7"/><circle cx="530.0" cy="224.1" r="3.9" fill="#c9d39a" opacity=".7"/><circle cx="536.9" cy="275.7" r="2.2" fill="#46602a" opacity=".7"/><circle cx="535.9" cy="270.2" r="4.5" fill="#8ca64d" opacity=".7"/><circle cx="528.8" cy="200.3" r="4.3" fill="#a3b565" opacity=".7"/><circle cx="533.4" cy="239.8" r="3.5" fill="#c9d39a" opacity=".7"/><circle cx="530.8" cy="282.5" r="4.5" fill="#8ca64d" opacity=".7"/><circle cx="543.4" cy="281.7" r="3.7" fill="#46602a" opacity=".7"/><circle cx="537.2" cy="228.2" r="3.8" fill="#31461d" opacity=".7"/><circle cx="542.8" cy="240.8" r="3.8" fill="#5d7a33" opacity=".7"/><circle cx="540.7" cy="245.1" r="3.8" fill="#3c5423" opacity=".7"/><circle cx="525.0" cy="262.8" r="3.9" fill="#8ca64d" opacity=".7"/><circle cx="535.7" cy="231.6" r="3.6" fill="#31461d" opacity=".7"/><circle cx="528.4" cy="220.4" r="3.2" fill="#5d7a33" opacity=".7"/><circle cx="522.4" cy="215.3" r="4.5" fill="#c9d39a" opacity=".7"/><circle cx="537.9" cy="218.8" r="4.3" fill="#76923f" opacity=".7"/><circle cx="524.2" cy="256.9" r="4.0" fill="#3c5423" opacity=".7"/><circle cx="533.1" cy="219.2" r="3.6" fill="#76923f" opacity=".7"/><circle cx="537.5" cy="277.3" r="3.6" fill="#31461d" opacity=".7"/><circle cx="536.2" cy="268.0" r="2.4" fill="#c9d39a" opacity=".7"/><circle cx="533.0" cy="260.7" r="4.1" fill="#76923f" opacity=".7"/><circle cx="534.9" cy="281.6" r="3.4" fill="#2a3d1b" opacity=".7"/><circle cx="539.9" cy="233.3" r="2.5" fill="#3c5423" opacity=".7"/></g><rect x="519.6" y="277.5294323144105" width="24.399999999999977" height="14" fill="rgba(150,150,130,.55)"/><rect x="519.6" y="290.5294323144105" width="24.399999999999977" height="20" fill="rgba(175,172,158,.6)"/></g><polygon points="66.0,313.5 124.0,313.5 124.0,340.0 68.0,340.0" fill="#8f857b" /><polygon points="65.0,313.5 125.0,313.5 125.0,317.5 65.0,317.5" fill="#b7aa98" /><polygon points="68.0,331.0 124.0,331.0 124.0,338.5 68.0,338.5" fill="#3b3433" /><polygon points="71.0,338.5 124.0,338.5 124.0,344.0 72.0,344.0" fill="#cfd0cf" /><rect x="96.2" y="325.0" width="4.7" height="3.500" fill="#a3978a"/><rect x="88.2" y="318.4" width="4.2" height="3.500" fill="#7f7a76"/><rect x="91.0" y="319.1" width="4.7" height="3.500" fill="#a3978a"/><rect x="99.1" y="325.8" width="6.8" height="3.500" fill="#b0a596"/><rect x="76.4" y="324.7" width="5.7" height="3.500" fill="#a3978a"/><rect x="109.3" y="319.1" width="5.9" height="3.500" fill="#b0a596"/><rect x="104.1" y="318.4" width="7.0" height="3.500" fill="#a3978a"/><rect x="85.8" y="320.9" width="7.0" height="3.500" fill="#a3978a"/><rect x="114.3" y="324.1" width="5.3" height="3.500" fill="#7f7a76"/><rect x="102.7" y="318.2" width="8.9" height="3.500" fill="#8a8078"/><rect x="73.7" y="318.2" width="4.6" height="3.500" fill="#b0a596"/><rect x="77.3" y="323.0" width="5.5" height="3.500" fill="#8a8078"/><rect x="109.8" y="323.3" width="5.3" height="3.500" fill="#b0a596"/><rect x="115.4" y="318.1" width="5.7" height="3.500" fill="#7f7a76"/><polygon points="250.0,318.0 281.5,329.6 555.0,315.0 555.0,331.0 281.5,353.0 250.0,341.0" fill="#a8a196" /><polygon points="250.0,318.0 281.5,327.5 555.0,313.0 555.0,317.5 281.5,332.0 250.0,322.5" fill="#c3bcae" /><rect x="412.1" y="330.4" width="5.2" height="4.7" fill="#b5ab9c" opacity=".9"/><rect x="331.3" y="337.7" width="9.8" height="3.8" fill="#9d958a" opacity=".9"/><rect x="539.4" y="325.6" width="8.1" height="3.5" fill="#a9a092" opacity=".9"/><rect x="420.0" y="328.9" width="8.7" height="3.6" fill="#8f8a84" opacity=".9"/><rect x="439.1" y="325.0" width="6.2" height="3.7" fill="#9d958a" opacity=".9"/><rect x="370.8" y="332.5" width="11.6" height="3.6" fill="#c4bbac" opacity=".9"/><rect x="436.5" y="327.8" width="5.1" height="3.9" fill="#a9a092" opacity=".9"/><rect x="295.0" y="333.6" width="9.7" height="3.5" fill="#c4bbac" opacity=".9"/><rect x="299.8" y="341.0" width="7.5" height="4.1" fill="#a9a092" opacity=".9"/><rect x="536.6" y="328.4" width="5.2" height="4.1" fill="#b5ab9c" opacity=".9"/><rect x="514.2" y="327.6" width="9.4" height="4.3" fill="#c4bbac" opacity=".9"/><rect x="492.9" y="328.9" width="6.7" height="4.6" fill="#8f8a84" opacity=".9"/><rect x="463.6" y="326.1" width="10.3" height="4.5" fill="#a9a092" opacity=".9"/><rect x="509.1" y="323.1" width="11.1" height="4.4" fill="#c4bbac" opacity=".9"/><rect x="299.0" y="335.1" width="7.3" height="5.0" fill="#9d958a" opacity=".9"/><rect x="416.5" y="333.9" width="10.7" height="5.0" fill="#8f8a84" opacity=".9"/><rect x="318.9" y="331.1" width="11.1" height="3.9" fill="#9d958a" opacity=".9"/><rect x="388.0" y="334.3" width="11.5" height="4.2" fill="#8f8a84" opacity=".9"/><rect x="362.9" y="331.5" width="10.1" height="4.1" fill="#c4bbac" opacity=".9"/><rect x="302.5" y="333.6" width="11.5" height="4.2" fill="#c4bbac" opacity=".9"/><rect x="436.8" y="333.7" width="7.5" height="4.5" fill="#9d958a" opacity=".9"/><rect x="474.1" y="331.1" width="10.9" height="3.6" fill="#8f8a84" opacity=".9"/><rect x="356.1" y="331.4" width="5.2" height="3.3" fill="#c4bbac" opacity=".9"/><rect x="345.8" y="329.8" width="5.3" height="3.9" fill="#a9a092" opacity=".9"/><rect x="357.9" y="333.5" width="5.7" height="3.5" fill="#b5ab9c" opacity=".9"/><rect x="538.2" y="324.8" width="5.6" height="4.6" fill="#a9a092" opacity=".9"/><rect x="373.4" y="329.4" width="6.3" height="4.1" fill="#b5ab9c" opacity=".9"/><rect x="452.6" y="332.2" width="6.5" height="3.7" fill="#7f7b78" opacity=".9"/><rect x="290.2" y="336.9" width="9.3" height="4.6" fill="#8f8a84" opacity=".9"/><rect x="298.2" y="335.8" width="5.3" height="4.3" fill="#c4bbac" opacity=".9"/><rect x="488.6" y="330.9" width="7.8" height="4.9" fill="#b5ab9c" opacity=".9"/><rect x="289.8" y="335.4" width="9.6" height="3.6" fill="#9d958a" opacity=".9"/><rect x="445.7" y="330.8" width="7.3" height="3.2" fill="#8f8a84" opacity=".9"/><rect x="338.8" y="334.7" width="10.9" height="3.7" fill="#c4bbac" opacity=".9"/><rect x="395.2" y="331.8" width="9.1" height="4.1" fill="#7f7b78" opacity=".9"/><rect x="543.1" y="324.3" width="6.6" height="4.2" fill="#7f7b78" opacity=".9"/><rect x="409.6" y="326.5" width="9.5" height="4.3" fill="#a9a092" opacity=".9"/><rect x="542.0" y="323.3" width="6.9" height="4.0" fill="#c4bbac" opacity=".9"/><rect x="317.9" y="331.1" width="8.3" height="4.3" fill="#c4bbac" opacity=".9"/><rect x="322.9" y="336.5" width="7.8" height="5.0" fill="#b5ab9c" opacity=".9"/><rect x="448.5" y="325.2" width="8.8" height="3.4" fill="#8f8a84" opacity=".9"/><rect x="351.7" y="334.7" width="10.2" height="4.8" fill="#7f7b78" opacity=".9"/><rect x="509.8" y="327.9" width="8.7" height="3.7" fill="#7f7b78" opacity=".9"/><rect x="347.3" y="338.4" width="8.5" height="4.3" fill="#c4bbac" opacity=".9"/><rect x="521.8" y="323.8" width="6.5" height="4.6" fill="#b5ab9c" opacity=".9"/><rect x="311.6" y="338.0" width="5.5" height="4.3" fill="#9d958a" opacity=".9"/><rect x="461.7" y="326.6" width="6.6" height="3.8" fill="#9d958a" opacity=".9"/><rect x="533.4" y="325.3" width="6.6" height="3.5" fill="#c4bbac" opacity=".9"/><rect x="471.0" y="325.1" width="7.5" height="3.7" fill="#9d958a" opacity=".9"/><rect x="453.3" y="326.6" width="12.0" height="3.4" fill="#a9a092" opacity=".9"/><rect x="492.6" y="326.1" width="11.5" height="4.5" fill="#8f8a84" opacity=".9"/><rect x="501.0" y="323.9" width="7.3" height="4.0" fill="#8f8a84" opacity=".9"/><rect x="325.8" y="336.8" width="9.2" height="3.9" fill="#a9a092" opacity=".9"/><rect x="296.8" y="339.2" width="11.0" height="4.5" fill="#b5ab9c" opacity=".9"/><rect x="489.7" y="329.7" width="6.3" height="4.7" fill="#c4bbac" opacity=".9"/><rect x="464.6" y="330.5" width="6.1" height="4.8" fill="#8f8a84" opacity=".9"/><rect x="524.6" y="321.5" width="10.2" height="3.2" fill="#8f8a84" opacity=".9"/><rect x="406.1" y="330.0" width="7.9" height="4.3" fill="#7f7b78" opacity=".9"/><rect x="472.8" y="330.8" width="11.9" height="3.1" fill="#8f8a84" opacity=".9"/><rect x="336.4" y="335.7" width="5.1" height="3.3" fill="#a9a092" opacity=".9"/><polygon points="250.0,338.0 281.5,345.5 555.0,327.0 555.0,330.0 281.5,352.0 250.0,345.0" fill="#3d3636" /><polygon points="250.0,345.0 281.5,352.0 555.0,330.0 555.0,338.0 470.0,346.0 281.5,364.0 253.0,352.0" fill="#d9dad6" /><polygon points="345.0,396.0 555.0,367.3 555.0,396.0" fill="#26272a" /><polygon points="45.0,228.4 76.0,231.0 70.0,328.3 35.7,332.2" fill="#332a28" /><polygon points="49.0,236.0 72.0,238.0 70.0,276.0 47.0,276.0" fill="rgba(255,255,255,.05)" /><polygon points="46.0,284.0 69.5,283.0 67.5,322.0 40.0,325.0" fill="rgba(255,255,255,.05)" /><rect x="41.500" y="277" width="5" height="8" fill="#171313"/><circle cx="138.5" cy="329" r="19" fill="rgba(70,70,68,.30)" stroke="#141414" stroke-width="3"/><circle cx="138.5" cy="329" r="16.3" fill="none" stroke="#8a8468" stroke-width=".8"/><line x1="138.5" y1="329" x2="155.5" y2="329.0" stroke="rgba(25,25,25,.55)" stroke-width=".5"/><line x1="138.5" y1="329" x2="154.5" y2="334.8" stroke="rgba(25,25,25,.55)" stroke-width=".5"/><line x1="138.5" y1="329" x2="151.5" y2="339.9" stroke="rgba(25,25,25,.55)" stroke-width=".5"/><line x1="138.5" y1="329" x2="147.0" y2="343.7" stroke="rgba(25,25,25,.55)" stroke-width=".5"/><line x1="138.5" y1="329" x2="141.5" y2="345.7" stroke="rgba(25,25,25,.55)" stroke-width=".5"/><line x1="138.5" y1="329" x2="135.5" y2="345.7" stroke="rgba(25,25,25,.55)" stroke-width=".5"/><line x1="138.5" y1="329" x2="130.0" y2="343.7" stroke="rgba(25,25,25,.55)" stroke-width=".5"/><line x1="138.5" y1="329" x2="125.5" y2="339.9" stroke="rgba(25,25,25,.55)" stroke-width=".5"/><line x1="138.5" y1="329" x2="122.5" y2="334.8" stroke="rgba(25,25,25,.55)" stroke-width=".5"/><line x1="138.5" y1="329" x2="121.5" y2="329.0" stroke="rgba(25,25,25,.55)" stroke-width=".5"/><line x1="138.5" y1="329" x2="122.5" y2="323.2" stroke="rgba(25,25,25,.55)" stroke-width=".5"/><line x1="138.5" y1="329" x2="125.5" y2="318.1" stroke="rgba(25,25,25,.55)" stroke-width=".5"/><line x1="138.5" y1="329" x2="130.0" y2="314.3" stroke="rgba(25,25,25,.55)" stroke-width=".5"/><line x1="138.5" y1="329" x2="135.5" y2="312.3" stroke="rgba(25,25,25,.55)" stroke-width=".5"/><line x1="138.5" y1="329" x2="141.5" y2="312.3" stroke="rgba(25,25,25,.55)" stroke-width=".5"/><line x1="138.5" y1="329" x2="147.0" y2="314.3" stroke="rgba(25,25,25,.55)" stroke-width=".5"/><line x1="138.5" y1="329" x2="151.5" y2="318.1" stroke="rgba(25,25,25,.55)" stroke-width=".5"/><line x1="138.5" y1="329" x2="154.5" y2="323.2" stroke="rgba(25,25,25,.55)" stroke-width=".5"/><circle cx="138.5" cy="329" r="3" fill="#151515"/><circle cx="132" cy="322" r="17" fill="rgba(70,70,68,.30)" stroke="#141414" stroke-width="2.6"/><circle cx="132" cy="322" r="14.5" fill="none" stroke="#8a8468" stroke-width=".8"/><line x1="132" y1="322" x2="147.0" y2="322.0" stroke="rgba(25,25,25,.55)" stroke-width=".5"/><line x1="132" y1="322" x2="146.1" y2="327.1" stroke="rgba(25,25,25,.55)" stroke-width=".5"/><line x1="132" y1="322" x2="143.5" y2="331.6" stroke="rgba(25,25,25,.55)" stroke-width=".5"/><line x1="132" y1="322" x2="139.5" y2="335.0" stroke="rgba(25,25,25,.55)" stroke-width=".5"/><line x1="132" y1="322" x2="134.6" y2="336.8" stroke="rgba(25,25,25,.55)" stroke-width=".5"/><line x1="132" y1="322" x2="129.4" y2="336.8" stroke="rgba(25,25,25,.55)" stroke-width=".5"/><line x1="132" y1="322" x2="124.5" y2="335.0" stroke="rgba(25,25,25,.55)" stroke-width=".5"/><line x1="132" y1="322" x2="120.5" y2="331.6" stroke="rgba(25,25,25,.55)" stroke-width=".5"/><line x1="132" y1="322" x2="117.9" y2="327.1" stroke="rgba(25,25,25,.55)" stroke-width=".5"/><line x1="132" y1="322" x2="117.0" y2="322.0" stroke="rgba(25,25,25,.55)" stroke-width=".5"/><line x1="132" y1="322" x2="117.9" y2="316.9" stroke="rgba(25,25,25,.55)" stroke-width=".5"/><line x1="132" y1="322" x2="120.5" y2="312.4" stroke="rgba(25,25,25,.55)" stroke-width=".5"/><line x1="132" y1="322" x2="124.5" y2="309.0" stroke="rgba(25,25,25,.55)" stroke-width=".5"/><line x1="132" y1="322" x2="129.4" y2="307.2" stroke="rgba(25,25,25,.55)" stroke-width=".5"/><line x1="132" y1="322" x2="134.6" y2="307.2" stroke="rgba(25,25,25,.55)" stroke-width=".5"/><line x1="132" y1="322" x2="139.5" y2="309.0" stroke="rgba(25,25,25,.55)" stroke-width=".5"/><line x1="132" y1="322" x2="143.5" y2="312.4" stroke="rgba(25,25,25,.55)" stroke-width=".5"/><line x1="132" y1="322" x2="146.1" y2="316.9" stroke="rgba(25,25,25,.55)" stroke-width=".5"/><circle cx="132" cy="322" r="3" fill="#151515"/><circle cx="226" cy="316" r="15" fill="rgba(70,70,68,.30)" stroke="#141414" stroke-width="2.6"/><circle cx="226" cy="316" r="12.5" fill="none" stroke="#8a8468" stroke-width=".8"/><line x1="226" y1="316" x2="239.0" y2="316.0" stroke="rgba(25,25,25,.55)" stroke-width=".5"/><line x1="226" y1="316" x2="238.2" y2="320.4" stroke="rgba(25,25,25,.55)" stroke-width=".5"/><line x1="226" y1="316" x2="236.0" y2="324.4" stroke="rgba(25,25,25,.55)" stroke-width=".5"/><line x1="226" y1="316" x2="232.5" y2="327.3" stroke="rgba(25,25,25,.55)" stroke-width=".5"/><line x1="226" y1="316" x2="228.3" y2="328.8" stroke="rgba(25,25,25,.55)" stroke-width=".5"/><line x1="226" y1="316" x2="223.7" y2="328.8" stroke="rgba(25,25,25,.55)" stroke-width=".5"/><line x1="226" y1="316" x2="219.5" y2="327.3" stroke="rgba(25,25,25,.55)" stroke-width=".5"/><line x1="226" y1="316" x2="216.0" y2="324.4" stroke="rgba(25,25,25,.55)" stroke-width=".5"/><line x1="226" y1="316" x2="213.8" y2="320.4" stroke="rgba(25,25,25,.55)" stroke-width=".5"/><line x1="226" y1="316" x2="213.0" y2="316.0" stroke="rgba(25,25,25,.55)" stroke-width=".5"/><line x1="226" y1="316" x2="213.8" y2="311.6" stroke="rgba(25,25,25,.55)" stroke-width=".5"/><line x1="226" y1="316" x2="216.0" y2="307.6" stroke="rgba(25,25,25,.55)" stroke-width=".5"/><line x1="226" y1="316" x2="219.5" y2="304.7" stroke="rgba(25,25,25,.55)" stroke-width=".5"/><line x1="226" y1="316" x2="223.7" y2="303.2" stroke="rgba(25,25,25,.55)" stroke-width=".5"/><line x1="226" y1="316" x2="228.3" y2="303.2" stroke="rgba(25,25,25,.55)" stroke-width=".5"/><line x1="226" y1="316" x2="232.5" y2="304.7" stroke="rgba(25,25,25,.55)" stroke-width=".5"/><line x1="226" y1="316" x2="236.0" y2="307.6" stroke="rgba(25,25,25,.55)" stroke-width=".5"/><line x1="226" y1="316" x2="238.2" y2="311.6" stroke="rgba(25,25,25,.55)" stroke-width=".5"/><circle cx="226" cy="316" r="3" fill="#151515"/><circle cx="239" cy="323" r="13" fill="rgba(70,70,68,.30)" stroke="#141414" stroke-width="2.2"/><circle cx="239" cy="323" r="10.7" fill="none" stroke="#8a8468" stroke-width=".8"/><line x1="239" y1="323" x2="250.0" y2="323.0" stroke="rgba(25,25,25,.55)" stroke-width=".5"/><line x1="239" y1="323" x2="249.3" y2="326.8" stroke="rgba(25,25,25,.55)" stroke-width=".5"/><line x1="239" y1="323" x2="247.4" y2="330.1" stroke="rgba(25,25,25,.55)" stroke-width=".5"/><line x1="239" y1="323" x2="244.5" y2="332.5" stroke="rgba(25,25,25,.55)" stroke-width=".5"/><line x1="239" y1="323" x2="240.9" y2="333.8" stroke="rgba(25,25,25,.55)" stroke-width=".5"/><line x1="239" y1="323" x2="237.1" y2="333.8" stroke="rgba(25,25,25,.55)" stroke-width=".5"/><line x1="239" y1="323" x2="233.5" y2="332.5" stroke="rgba(25,25,25,.55)" stroke-width=".5"/><line x1="239" y1="323" x2="230.6" y2="330.1" stroke="rgba(25,25,25,.55)" stroke-width=".5"/><line x1="239" y1="323" x2="228.7" y2="326.8" stroke="rgba(25,25,25,.55)" stroke-width=".5"/><line x1="239" y1="323" x2="228.0" y2="323.0" stroke="rgba(25,25,25,.55)" stroke-width=".5"/><line x1="239" y1="323" x2="228.7" y2="319.2" stroke="rgba(25,25,25,.55)" stroke-width=".5"/><line x1="239" y1="323" x2="230.6" y2="315.9" stroke="rgba(25,25,25,.55)" stroke-width=".5"/><line x1="239" y1="323" x2="233.5" y2="313.5" stroke="rgba(25,25,25,.55)" stroke-width=".5"/><line x1="239" y1="323" x2="237.1" y2="312.2" stroke="rgba(25,25,25,.55)" stroke-width=".5"/><line x1="239" y1="323" x2="240.9" y2="312.2" stroke="rgba(25,25,25,.55)" stroke-width=".5"/><line x1="239" y1="323" x2="244.5" y2="313.5" stroke="rgba(25,25,25,.55)" stroke-width=".5"/><line x1="239" y1="323" x2="247.4" y2="315.9" stroke="rgba(25,25,25,.55)" stroke-width=".5"/><line x1="239" y1="323" x2="249.3" y2="319.2" stroke="rgba(25,25,25,.55)" stroke-width=".5"/><circle cx="239" cy="323" r="3" fill="#151515"/><circle cx="233" cy="330" r="14" fill="rgba(70,70,68,.30)" stroke="#141414" stroke-width="2.2"/><circle cx="233" cy="330" r="11.7" fill="none" stroke="#8a8468" stroke-width=".8"/><line x1="233" y1="330" x2="245.0" y2="330.0" stroke="rgba(25,25,25,.55)" stroke-width=".5"/><line x1="233" y1="330" x2="244.3" y2="334.1" stroke="rgba(25,25,25,.55)" stroke-width=".5"/><line x1="233" y1="330" x2="242.2" y2="337.7" stroke="rgba(25,25,25,.55)" stroke-width=".5"/><line x1="233" y1="330" x2="239.0" y2="340.4" stroke="rgba(25,25,25,.55)" stroke-width=".5"/><line x1="233" y1="330" x2="235.1" y2="341.8" stroke="rgba(25,25,25,.55)" stroke-width=".5"/><line x1="233" y1="330" x2="230.9" y2="341.8" stroke="rgba(25,25,25,.55)" stroke-width=".5"/><line x1="233" y1="330" x2="227.0" y2="340.4" stroke="rgba(25,25,25,.55)" stroke-width=".5"/><line x1="233" y1="330" x2="223.8" y2="337.7" stroke="rgba(25,25,25,.55)" stroke-width=".5"/><line x1="233" y1="330" x2="221.7" y2="334.1" stroke="rgba(25,25,25,.55)" stroke-width=".5"/><line x1="233" y1="330" x2="221.0" y2="330.0" stroke="rgba(25,25,25,.55)" stroke-width=".5"/><line x1="233" y1="330" x2="221.7" y2="325.9" stroke="rgba(25,25,25,.55)" stroke-width=".5"/><line x1="233" y1="330" x2="223.8" y2="322.3" stroke="rgba(25,25,25,.55)" stroke-width=".5"/><line x1="233" y1="330" x2="227.0" y2="319.6" stroke="rgba(25,25,25,.55)" stroke-width=".5"/><line x1="233" y1="330" x2="230.9" y2="318.2" stroke="rgba(25,25,25,.55)" stroke-width=".5"/><line x1="233" y1="330" x2="235.1" y2="318.2" stroke="rgba(25,25,25,.55)" stroke-width=".5"/><line x1="233" y1="330" x2="239.0" y2="319.6" stroke="rgba(25,25,25,.55)" stroke-width=".5"/><line x1="233" y1="330" x2="242.2" y2="322.3" stroke="rgba(25,25,25,.55)" stroke-width=".5"/><line x1="233" y1="330" x2="244.3" y2="325.9" stroke="rgba(25,25,25,.55)" stroke-width=".5"/><circle cx="233" cy="330" r="3" fill="#151515"/><polygon points="150.0,296.0 210.0,286.0 222.0,296.0 214.0,306.0 236.0,330.0 226.0,344.0 198.0,350.0 176.0,352.0 150.0,340.0 160.0,316.0" fill="#171717" /><circle cx="153.4" cy="336" r="22" fill="rgba(70,70,68,.30)" stroke="#141414" stroke-width="3.2"/><circle cx="153.4" cy="336" r="19.2" fill="none" stroke="#8a8468" stroke-width=".8"/><line x1="153.4" y1="336" x2="173.4" y2="336.0" stroke="rgba(25,25,25,.55)" stroke-width=".5"/><line x1="153.4" y1="336" x2="172.2" y2="342.8" stroke="rgba(25,25,25,.55)" stroke-width=".5"/><line x1="153.4" y1="336" x2="168.7" y2="348.9" stroke="rgba(25,25,25,.55)" stroke-width=".5"/><line x1="153.4" y1="336" x2="163.4" y2="353.3" stroke="rgba(25,25,25,.55)" stroke-width=".5"/><line x1="153.4" y1="336" x2="156.9" y2="355.7" stroke="rgba(25,25,25,.55)" stroke-width=".5"/><line x1="153.4" y1="336" x2="149.9" y2="355.7" stroke="rgba(25,25,25,.55)" stroke-width=".5"/><line x1="153.4" y1="336" x2="143.4" y2="353.3" stroke="rgba(25,25,25,.55)" stroke-width=".5"/><line x1="153.4" y1="336" x2="138.1" y2="348.9" stroke="rgba(25,25,25,.55)" stroke-width=".5"/><line x1="153.4" y1="336" x2="134.6" y2="342.8" stroke="rgba(25,25,25,.55)" stroke-width=".5"/><line x1="153.4" y1="336" x2="133.4" y2="336.0" stroke="rgba(25,25,25,.55)" stroke-width=".5"/><line x1="153.4" y1="336" x2="134.6" y2="329.2" stroke="rgba(25,25,25,.55)" stroke-width=".5"/><line x1="153.4" y1="336" x2="138.1" y2="323.1" stroke="rgba(25,25,25,.55)" stroke-width=".5"/><line x1="153.4" y1="336" x2="143.4" y2="318.7" stroke="rgba(25,25,25,.55)" stroke-width=".5"/><line x1="153.4" y1="336" x2="149.9" y2="316.3" stroke="rgba(25,25,25,.55)" stroke-width=".5"/><line x1="153.4" y1="336" x2="156.9" y2="316.3" stroke="rgba(25,25,25,.55)" stroke-width=".5"/><line x1="153.4" y1="336" x2="163.4" y2="318.7" stroke="rgba(25,25,25,.55)" stroke-width=".5"/><line x1="153.4" y1="336" x2="168.7" y2="323.1" stroke="rgba(25,25,25,.55)" stroke-width=".5"/><line x1="153.4" y1="336" x2="172.2" y2="329.2" stroke="rgba(25,25,25,.55)" stroke-width=".5"/><circle cx="153.4" cy="336" r="3" fill="#151515"/><circle cx="151.8" cy="344" r="25.5" fill="rgba(70,70,68,.30)" stroke="#141414" stroke-width="4"/><circle cx="151.8" cy="344" r="22.3" fill="none" stroke="#8a8468" stroke-width=".8"/><line x1="151.8" y1="344" x2="175.3" y2="344.0" stroke="rgba(25,25,25,.55)" stroke-width=".5"/><line x1="151.8" y1="344" x2="173.9" y2="352.0" stroke="rgba(25,25,25,.55)" stroke-width=".5"/><line x1="151.8" y1="344" x2="169.8" y2="359.1" stroke="rgba(25,25,25,.55)" stroke-width=".5"/><line x1="151.8" y1="344" x2="163.6" y2="364.4" stroke="rgba(25,25,25,.55)" stroke-width=".5"/><line x1="151.8" y1="344" x2="155.9" y2="367.1" stroke="rgba(25,25,25,.55)" stroke-width=".5"/><line x1="151.8" y1="344" x2="147.7" y2="367.1" stroke="rgba(25,25,25,.55)" stroke-width=".5"/><line x1="151.8" y1="344" x2="140.1" y2="364.4" stroke="rgba(25,25,25,.55)" stroke-width=".5"/><line x1="151.8" y1="344" x2="133.8" y2="359.1" stroke="rgba(25,25,25,.55)" stroke-width=".5"/><line x1="151.8" y1="344" x2="129.7" y2="352.0" stroke="rgba(25,25,25,.55)" stroke-width=".5"/><line x1="151.8" y1="344" x2="128.3" y2="344.0" stroke="rgba(25,25,25,.55)" stroke-width=".5"/><line x1="151.8" y1="344" x2="129.7" y2="336.0" stroke="rgba(25,25,25,.55)" stroke-width=".5"/><line x1="151.8" y1="344" x2="133.8" y2="328.9" stroke="rgba(25,25,25,.55)" stroke-width=".5"/><line x1="151.8" y1="344" x2="140.1" y2="323.6" stroke="rgba(25,25,25,.55)" stroke-width=".5"/><line x1="151.8" y1="344" x2="147.7" y2="320.9" stroke="rgba(25,25,25,.55)" stroke-width=".5"/><line x1="151.8" y1="344" x2="155.9" y2="320.9" stroke="rgba(25,25,25,.55)" stroke-width=".5"/><line x1="151.8" y1="344" x2="163.5" y2="323.6" stroke="rgba(25,25,25,.55)" stroke-width=".5"/><line x1="151.8" y1="344" x2="169.8" y2="328.9" stroke="rgba(25,25,25,.55)" stroke-width=".5"/><line x1="151.8" y1="344" x2="173.9" y2="336.0" stroke="rgba(25,25,25,.55)" stroke-width=".5"/><circle cx="151.8" cy="344" r="3" fill="#151515"/><circle cx="228.5" cy="344.8" r="23" fill="rgba(70,70,68,.30)" stroke="#141414" stroke-width="4"/><circle cx="228.5" cy="344.8" r="19.8" fill="none" stroke="#8a8468" stroke-width=".8"/><line x1="228.5" y1="344.8" x2="249.5" y2="344.8" stroke="rgba(25,25,25,.55)" stroke-width=".5"/><line x1="228.5" y1="344.8" x2="248.2" y2="352.0" stroke="rgba(25,25,25,.55)" stroke-width=".5"/><line x1="228.5" y1="344.8" x2="244.6" y2="358.3" stroke="rgba(25,25,25,.55)" stroke-width=".5"/><line x1="228.5" y1="344.8" x2="239.0" y2="363.0" stroke="rgba(25,25,25,.55)" stroke-width=".5"/><line x1="228.5" y1="344.8" x2="232.1" y2="365.5" stroke="rgba(25,25,25,.55)" stroke-width=".5"/><line x1="228.5" y1="344.8" x2="224.9" y2="365.5" stroke="rgba(25,25,25,.55)" stroke-width=".5"/><line x1="228.5" y1="344.8" x2="218.0" y2="363.0" stroke="rgba(25,25,25,.55)" stroke-width=".5"/><line x1="228.5" y1="344.8" x2="212.4" y2="358.3" stroke="rgba(25,25,25,.55)" stroke-width=".5"/><line x1="228.5" y1="344.8" x2="208.8" y2="352.0" stroke="rgba(25,25,25,.55)" stroke-width=".5"/><line x1="228.5" y1="344.8" x2="207.5" y2="344.8" stroke="rgba(25,25,25,.55)" stroke-width=".5"/><line x1="228.5" y1="344.8" x2="208.8" y2="337.6" stroke="rgba(25,25,25,.55)" stroke-width=".5"/><line x1="228.5" y1="344.8" x2="212.4" y2="331.3" stroke="rgba(25,25,25,.55)" stroke-width=".5"/><line x1="228.5" y1="344.8" x2="218.0" y2="326.6" stroke="rgba(25,25,25,.55)" stroke-width=".5"/><line x1="228.5" y1="344.8" x2="224.9" y2="324.1" stroke="rgba(25,25,25,.55)" stroke-width=".5"/><line x1="228.5" y1="344.8" x2="232.1" y2="324.1" stroke="rgba(25,25,25,.55)" stroke-width=".5"/><line x1="228.5" y1="344.8" x2="239.0" y2="326.6" stroke="rgba(25,25,25,.55)" stroke-width=".5"/><line x1="228.5" y1="344.8" x2="244.6" y2="331.3" stroke="rgba(25,25,25,.55)" stroke-width=".5"/><line x1="228.5" y1="344.8" x2="248.2" y2="337.6" stroke="rgba(25,25,25,.55)" stroke-width=".5"/><circle cx="228.5" cy="344.8" r="3" fill="#151515"/><polygon points="168.0,312.0 190.0,296.0 216.0,296.0 228.0,322.0 222.0,346.0 196.0,350.0 176.0,340.0" fill="rgba(18,18,18,.92)" /><polyline points="151.8,344.0 184.0,320.0 214.0,300.0 228.5,344.8" fill="none" stroke="#0e0e0e" stroke-width="3.6" stroke-linejoin="round"/><polyline points="184.0,320.0 193.0,348.0 151.8,344.0" fill="none" stroke="#0e0e0e" stroke-width="2.8" stroke-linejoin="round"/><polyline points="193.0,334.0 213.0,304.5" fill="none" stroke="#dedede" stroke-width="3.2" stroke-linecap="round"/><polyline points="196.0,330.0 203.0,320.0" fill="none" stroke="#222" stroke-width="1" /><polyline points="168.0,314.0 163.0,293.0" fill="none" stroke="#111" stroke-width="2.6" /><ellipse cx="158.700" cy="290" rx="8" ry="2" fill="#111"/><ellipse cx="158" cy="296" rx="7.500" ry="1.800" fill="#111"/><polyline points="214.0,300.0 209.0,284.0 216.0,282.0" fill="none" stroke="#111" stroke-width="2.4" stroke-linejoin="round"/><polyline points="202.0,296.0 197.0,281.0 190.0,280.0" fill="none" stroke="#111" stroke-width="2.2" stroke-linejoin="round"/><polygon points="172.0,280.0 204.0,278.0 210.0,300.0 176.0,306.0" fill="rgba(18,18,18,.8)" /><circle cx="193" cy="348" r="5" fill="#101010"/><polyline points="236.8,312.0 238.0,306.0 243.0,305.0 246.0,310.0 247.4,368.0" fill="none" stroke="#9a9a9a" stroke-width="2.6" stroke-linejoin="round" stroke-linecap="round"/><polyline points="228.0,372.0 262.0,366.0" fill="none" stroke="#a5a5a5" stroke-width="2.2" /><polyline points="294.0,312.0 297.0,300.0" fill="none" stroke="#d0d0d0" stroke-width="1.6" /><polygon points="486.0,314.0 492.0,312.0 494.0,348.0 488.0,348.0" fill="#a71f33" /><polygon points="482.5,301.5 452.0,298.5 493.0,298.0 505.0,301.5 522.0,335.5 519.0,349.5 497.0,345.5" fill="#c92a40" /><polyline points="486.0,300.5 501.0,345.5" fill="none" stroke="rgba(120,10,30,.5)" stroke-width="0.6" /><polyline points="489.4,300.9 504.3,346.0" fill="none" stroke="rgba(120,10,30,.5)" stroke-width="0.6" /><polyline points="492.8,301.3 507.6,346.5" fill="none" stroke="rgba(120,10,30,.5)" stroke-width="0.6" /><polyline points="496.2,301.7 510.9,347.0" fill="none" stroke="rgba(120,10,30,.5)" stroke-width="0.6" /><polyline points="499.6,302.1 514.2,347.5" fill="none" stroke="rgba(120,10,30,.5)" stroke-width="0.6" /><polyline points="503.0,302.5 517.5,348.0" fill="none" stroke="rgba(120,10,30,.5)" stroke-width="0.6" /><polygon points="484.0,328.5 487.0,326.5 521.0,334.5 522.0,338.5" fill="#a71f33" /><polygon points="519.0,339.5 545.0,343.5 546.0,351.5 519.0,351.5" fill="#c92a40" /><polygon points="487.0,321.5 490.0,321.5 490.0,355.5 487.0,355.5" fill="#a71f33" /><polygon points="482.0,355.5 497.0,349.5 521.0,349.5 521.0,355.5 493.0,361.5 482.0,359.5" fill="#a71f33" /><polygon points="515.0,336.5 519.5,336.5 519.5,368.5 515.0,368.5" fill="#c92a40" /><polygon points="541.0,349.5 544.5,349.5 544.5,365.5 541.0,365.5" fill="#c92a40" /><polygon points="519.0,358.5 542.0,356.0 542.0,358.5 519.0,361.5" fill="#a71f33" /><polygon points="513.0,327.0 546.0,331.0 547.0,334.5 513.0,331.0" fill="#b32238" /><polygon points="540.0,332.0 543.5,332.0 543.5,360.0 540.0,360.0" fill="#c92a40" /><polygon points="447.5,302.0 452.0,299.0 458.0,298.5 470.0,302.0 487.0,336.0 484.0,350.0 462.0,346.0" fill="#c92a40" /><polyline points="451.0,301.0 466.0,346.0" fill="none" stroke="rgba(120,10,30,.5)" stroke-width="0.6" /><polyline points="454.4,301.4 469.3,346.5" fill="none" stroke="rgba(120,10,30,.5)" stroke-width="0.6" /><polyline points="457.8,301.8 472.6,347.0" fill="none" stroke="rgba(120,10,30,.5)" stroke-width="0.6" /><polyline points="461.2,302.2 475.9,347.5" fill="none" stroke="rgba(120,10,30,.5)" stroke-width="0.6" /><polyline points="464.6,302.6 479.2,348.0" fill="none" stroke="rgba(120,10,30,.5)" stroke-width="0.6" /><polyline points="468.0,303.0 482.5,348.5" fill="none" stroke="rgba(120,10,30,.5)" stroke-width="0.6" /><polygon points="449.0,329.0 452.0,327.0 486.0,335.0 487.0,339.0" fill="#a71f33" /><polygon points="484.0,340.0 510.0,344.0 511.0,352.0 484.0,352.0" fill="#c92a40" /><polygon points="452.0,322.0 455.0,322.0 455.0,356.0 452.0,356.0" fill="#a71f33" /><polygon points="447.0,356.0 462.0,350.0 486.0,350.0 486.0,356.0 458.0,362.0 447.0,360.0" fill="#a71f33" /><polygon points="480.0,337.0 484.5,337.0 484.5,369.0 480.0,369.0" fill="#c92a40" /><polygon points="506.0,350.0 509.5,350.0 509.5,366.0 506.0,366.0" fill="#c92a40" /><polygon points="484.0,359.0 507.0,356.5 507.0,359.0 484.0,362.0" fill="#a71f33" /></g></svg>
<div style="position:absolute;left:2341.5px;top:1025.50px;height:43px;line-height:43px;font-family:'Liberation Sans',sans-serif;font-size:33px;font-weight:700;font-style:normal;color:#000;white-space:pre;letter-spacing:-0.566px;">Head of house</div>
<div style="position:absolute;left:2342px;top:1088.00px;height:33px;line-height:33px;font-family:'Liberation Sans',sans-serif;font-size:25.5px;font-weight:400;font-style:normal;color:#000;white-space:pre;letter-spacing:-0.278px;">Carl Beaudoin</div>
<div style="position:absolute;left:2341.5px;top:1140.50px;height:43px;line-height:43px;font-family:'Liberation Sans',sans-serif;font-size:33px;font-weight:700;font-style:normal;color:#000;white-space:pre;letter-spacing:-0.283px;">Support</div>
<div style="position:absolute;left:2342px;top:1203.25px;height:33px;line-height:33px;font-family:'Liberation Sans',sans-serif;font-size:25.5px;font-weight:400;font-style:normal;color:#000;white-space:pre;letter-spacing:0.060px;">Spencer Vreugdenhil-Beauclerc,</div>
<div style="position:absolute;left:2342px;top:1236.00px;height:33px;line-height:33px;font-family:'Liberation Sans',sans-serif;font-size:25.5px;font-weight:400;font-style:normal;color:#000;white-space:pre;letter-spacing:0.019px;">Carmelo Saffioti</div>
<div style="position:absolute;left:2341.5px;top:1288.50px;height:43px;line-height:43px;font-family:'Liberation Sans',sans-serif;font-size:33px;font-weight:700;font-style:normal;color:#000;white-space:pre;letter-spacing:-0.413px;">Description</div>
<div style="position:absolute;left:2342px;top:1351.00px;height:33px;line-height:33px;font-family:'Liberation Sans',sans-serif;font-size:25.5px;font-weight:400;font-style:normal;color:#000;white-space:pre;letter-spacing:-0.068px;">Opened in October 2022, Ross House is named</div>
<div style="position:absolute;left:2342px;top:1384.00px;height:33px;line-height:33px;font-family:'Liberation Sans',sans-serif;font-size:25.5px;font-weight:400;font-style:normal;color:#000;white-space:pre;letter-spacing:0.033px;">in honor of the Ross Family for their significant</div>
<div style="position:absolute;left:2342px;top:1417.00px;height:33px;line-height:33px;font-family:'Liberation Sans',sans-serif;font-size:25.5px;font-weight:400;font-style:normal;color:#000;white-space:pre;letter-spacing:0.040px;">contributions to LCS. This house is part of a</div>
<div style="position:absolute;left:2342px;top:1450.00px;height:33px;line-height:33px;font-family:'Liberation Sans',sans-serif;font-size:25.5px;font-weight:400;font-style:normal;color:#000;white-space:pre;letter-spacing:0.117px;">modern double residence designed to foster a</div>
<div style="position:absolute;left:2342px;top:1483.00px;height:33px;line-height:33px;font-family:'Liberation Sans',sans-serif;font-size:25.5px;font-weight:400;font-style:normal;color:#000;white-space:pre;letter-spacing:0.080px;">sense of community on campus.</div>
<div style="position:absolute;left:2235px;top:1756px;width:163px;height:52px;background:#383838;border-radius:12px;box-shadow:0 0 0 1px rgba(255,255,255,.07),0 2px 8px rgba(0,0,0,.28)"></div>
<div style="position:absolute;left:2253px;top:1769px;width:26px;height:26px;background:#3478F6;border-radius:50%"></div>
<svg style="position:absolute;left:2253px;top:1769px;" width="26" height="26" viewBox="0 0 26 26"><path d="M10 7.200 Q10 6.200 10.900 6.700 L19 12.300 Q19.800 13 19 13.700 L10.900 19.300 Q10 19.800 10 18.800Z" fill="#fff"/></svg>
<svg style="position:absolute;left:2300px;top:1769.5px;" width="26" height="26" viewBox="0 0 26 26"><rect x="1.800" y="1.800" width="22" height="22" rx="3" fill="none" stroke="#f0f0f0" stroke-width="2.200"/><path d="M9.500 6.500 L9.500 18.500 L12.600 15.600 L14.900 20.600 L17 19.600 L14.700 14.800 L18.800 14.500Z" fill="#f0f0f0"/></svg>
<svg style="position:absolute;left:2354.5px;top:1772px;" width="25" height="21" viewBox="0 0 25 21"><rect x="1.0" y="1" width="5.600" height="7.600" rx="1.200" fill="none" stroke="#ececec" stroke-width="1.700"/><rect x="9.6" y="1" width="5.600" height="7.600" rx="1.200" fill="none" stroke="#ececec" stroke-width="1.700"/><rect x="18.2" y="1" width="5.600" height="7.600" rx="1.200" fill="none" stroke="#ececec" stroke-width="1.700"/><rect x="1.0" y="12" width="5.600" height="7.600" rx="1.200" fill="none" stroke="#ececec" stroke-width="1.700"/><rect x="9.6" y="12" width="5.600" height="7.600" rx="1.200" fill="none" stroke="#ececec" stroke-width="1.700"/><rect x="18.2" y="12" width="5.600" height="7.600" rx="1.200" fill="none" stroke="#ececec" stroke-width="1.700"/></svg>
<div style="position:absolute;left:2418.5px;top:1756px;width:62.5px;height:52px;background:#383838;border-radius:12px;box-shadow:0 0 0 1px rgba(255,255,255,.07),0 2px 8px rgba(0,0,0,.28)"></div>
<svg style="position:absolute;left:2436px;top:1769.5px;" width="27" height="27" viewBox="0 0 27 27"><rect x="1.500" y="1.500" width="24" height="10" rx="5" fill="none" stroke="#f0f0f0" stroke-width="2.200"/><circle cx="7" cy="6.500" r="2.900" fill="#f0f0f0"/><rect x="0.400" y="14.400" width="26.200" height="12.200" rx="6.100" fill="#f0f0f0"/><circle cx="20" cy="20.500" r="3.200" fill="#383838"/></svg>
<div style="position:absolute;left:2501.5px;top:1756px;width:53.5px;height:52px;background:#383838;border-radius:12px;box-shadow:0 0 0 1px rgba(255,255,255,.07),0 2px 8px rgba(0,0,0,.28)"></div>
<svg style="position:absolute;left:2520px;top:1770px;" width="16" height="25" viewBox="0 0 16 25"><rect x="1.700" y="1.700" width="12.600" height="21.600" rx="2.800" fill="#5c5c5c" stroke="#f0f0f0" stroke-width="1.900"/><path d="M6 4.500h4M5 20.600h6" stroke="#f0f0f0" stroke-width="1.400" stroke-linecap="round"/></svg>
<div style="position:absolute;left:2793px;top:1756px;width:206.5px;height:52px;background:#383838;border-radius:12px;box-shadow:0 0 0 1px rgba(255,255,255,.07),0 2px 8px rgba(0,0,0,.28)"></div>
<svg style="position:absolute;left:2793px;top:1756px;" width="206.5" height="52" viewBox="0 0 206.5 52"><circle cx="28.699999999999818" cy="23.299999999999955" r="9.400" fill="none" stroke="#ececec" stroke-width="2.600"/><path d="M35.59999999999982 30.199999999999953 L42.29999999999982 36.899999999999956" stroke="#ececec" stroke-width="3.200" stroke-linecap="round"/><path d="M24.199999999999818 23.299999999999955H33.19999999999982" stroke="#ececec" stroke-width="2.200" stroke-linecap="round"/><circle cx="76.40000000000009" cy="23.299999999999955" r="9.400" fill="none" stroke="#ececec" stroke-width="2.600"/><path d="M83.3000000000001 30.199999999999953 L90.00000000000009 36.899999999999956" stroke="#ececec" stroke-width="3.200" stroke-linecap="round"/><path d="M74.00000000000009 20.299999999999955 L77.20000000000009 18.299999999999955 V28.299999999999955" fill="none" stroke="#ececec" stroke-width="2" stroke-linecap="round" stroke-linejoin="round"/><circle cx="124.40000000000009" cy="23.299999999999955" r="9.400" fill="none" stroke="#ececec" stroke-width="2.600"/><path d="M131.3000000000001 30.199999999999953 L138.00000000000009 36.899999999999956" stroke="#ececec" stroke-width="3.200" stroke-linecap="round"/><rect x="120.20000000000009" y="19.099999999999955" width="8.400" height="8.400" rx="2" fill="none" stroke="#ececec" stroke-width="2.200"/><circle cx="172.4000000000001" cy="23.299999999999955" r="9.400" fill="none" stroke="#ececec" stroke-width="2.600"/><path d="M179.3000000000001 30.199999999999953 L186.00000000000009 36.899999999999956" stroke="#ececec" stroke-width="3.200" stroke-linecap="round"/><path d="M167.9000000000001 23.299999999999955H176.9000000000001M173.2000000000001 18.799999999999955V27.799999999999955" stroke="#ececec" stroke-width="2.200" stroke-linecap="round"/></svg>
<div style="position:absolute;left:546px;top:1832px;width:2478px;height:2px;background:#000;"></div>
<div style="position:absolute;left:546px;top:1834px;width:2478px;height:54px;background:#1e1e1e;"></div>
<svg style="position:absolute;left:569px;top:1852px;" width="30" height="19" viewBox="0 0 30 19"><path d="M3.500 0H22c1.200 0 2 .400 2.700 1.300L29.300 7.600c.800 1.100.800 2.700 0 3.800L24.700 17.700C24 18.600 23.200 19 22 19H3.500C1.300 19 0 17.700 0 15.500V3.500C0 1.300 1.300 0 3.500 0Z" fill="#3478F6"/></svg>
<div style="position:absolute;left:614px;top:1849px;width:2px;height:24px;background:#3c3c3c;"></div>
<svg style="position:absolute;left:636px;top:1847px;" width="21" height="28" viewBox="0 0 21 28"><rect x="1.800" y="1.800" width="5.400" height="24.400" rx="2" fill="none" stroke="#a8a8a8" stroke-width="1.900"/><rect x="13.300" y="1.800" width="5.400" height="24.400" rx="2" fill="none" stroke="#a8a8a8" stroke-width="1.900"/></svg>
<svg style="position:absolute;left:692px;top:1848px;" width="28" height="26" viewBox="0 0 28 26"><g fill="none" stroke="#5e5e5e" stroke-width="2"><path d="M2.500 15.500 L12.500 5.500 L20 12.500 H26"/><path d="M21.500 8 L26 12.500 L21.500 17"/><rect x="6" y="19.500" width="16" height="4.500"/></g></svg>
<svg style="position:absolute;left:755px;top:1847px;" width="21" height="28" viewBox="0 0 21 28"><g fill="none" stroke="#5e5e5e" stroke-width="2" stroke-linecap="round" stroke-linejoin="round"><path d="M10.500 2V17M4 11l6.500 6.500L17 11"/><rect x="2" y="21.500" width="17" height="4.500"/></g></svg>
<svg style="position:absolute;left:816px;top:1847px;" width="21" height="28" viewBox="0 0 21 28"><g fill="none" stroke="#5e5e5e" stroke-width="2" stroke-linecap="round" stroke-linejoin="round"><path d="M10.500 18V3M4 9l6.500-6.500L17 9"/><rect x="2" y="21.500" width="17" height="4.500"/></g></svg>
<div style="position:absolute;left:856px;top:1849px;width:2px;height:24px;background:#3c3c3c;"></div>
<svg style="position:absolute;left:875px;top:1848px;" width="27" height="27" viewBox="0 0 27 27"><g fill="none" stroke="#8f8f8f" stroke-width="1.900"><rect x="1.500" y="1.500" width="24" height="6" rx="2"/><rect x="1.500" y="10.500" width="24" height="6" rx="2"/><rect x="1.500" y="19.500" width="24" height="6" rx="2"/></g></svg>
<svg style="position:absolute;left:936px;top:1847px;" width="24" height="28" viewBox="0 0 24 28"><g fill="none" stroke="#8f8f8f" stroke-width="1.800" stroke-linejoin="round"><path d="M11 7.500 L21.500 4.500 V21 L11 26Z"/><path d="M7 5.500 L17 2.500"/><path d="M7 5.500V22.500L11 26"/><path d="M3 4 L13 1"/><path d="M3 4V20.500L7 22.500"/></g></svg>
<svg style="position:absolute;left:994px;top:1847px;" width="28" height="28" viewBox="0 0 28 28"><g fill="none" stroke="#8f8f8f" stroke-width="1.900"><circle cx="5.500" cy="5.500" r="3.800"/><circle cx="5.500" cy="22.500" r="3.800"/><circle cx="22" cy="14" r="3.800"/><path d="M9 7.200 L18.500 12.200M9 20.800 L18.500 15.800"/></g></svg>
<svg style="position:absolute;left:1056px;top:1847px;" width="24" height="28" viewBox="0 0 24 28"><g fill="none" stroke="#8f8f8f" stroke-width="1.900"><rect x="1.500" y="1.500" width="21" height="10.500" rx="5.250"/><rect x="1.500" y="15.500" width="21" height="10.500" rx="5.250"/></g><circle cx="7" cy="6.750" r="3.200" fill="#8f8f8f"/><circle cx="17" cy="20.750" r="3.200" fill="#8f8f8f"/></svg>
<div style="position:absolute;left:1098px;top:1849px;width:2px;height:24px;background:#3c3c3c;"></div>
<svg style="position:absolute;left:1118px;top:1849.5px;" width="23" height="23" viewBox="0 0 24 24"><rect x="0" y="0" width="24" height="24" rx="4.500" fill="#9a9a9a"/><g fill="none" stroke="#2a2a2a" stroke-width="1.7" stroke-linecap="round"><path d="M8.16 17.04 L12.62 7.36"/><path d="M15.84 17.04 L11.26 7.24"/><path d="M6.11 14.059999999999999 L17.89 14.059999999999999"/></g></svg>
<div style="position:absolute;left:1154px;top:1847.00px;height:29px;line-height:29px;font-family:'Liberation Sans',sans-serif;font-size:22px;font-weight:400;font-style:normal;color:#e2e2e2;white-space:pre;letter-spacing:0.179px;">LCSHouses</div>
<div style="position:absolute;left:2760.8px;top:1847.00px;height:29px;line-height:29px;font-family:'Liberation Sans',sans-serif;font-size:22px;font-weight:700;font-style:normal;color:#9a9a9a;white-space:pre;letter-spacing:0.340px;">Line: 16  Col: 62</div>
<div style="position:absolute;left:2954px;top:1849px;width:2px;height:24px;background:#3c3c3c;"></div>
<svg style="position:absolute;left:2972px;top:1848px;" width="28" height="27" viewBox="0 0 28 27"><rect x="1.800" y="1.800" width="24.400" height="23.400" rx="4.500" fill="none" stroke="#a0a0a0" stroke-width="2.200"/><rect x="5.300" y="16.500" width="17.400" height="5.500" rx="1.500" fill="#a0a0a0"/></svg>
<div style="position:absolute;left:544px;top:0;width:2px;height:1888px;background:#000"></div></div></body></html>
